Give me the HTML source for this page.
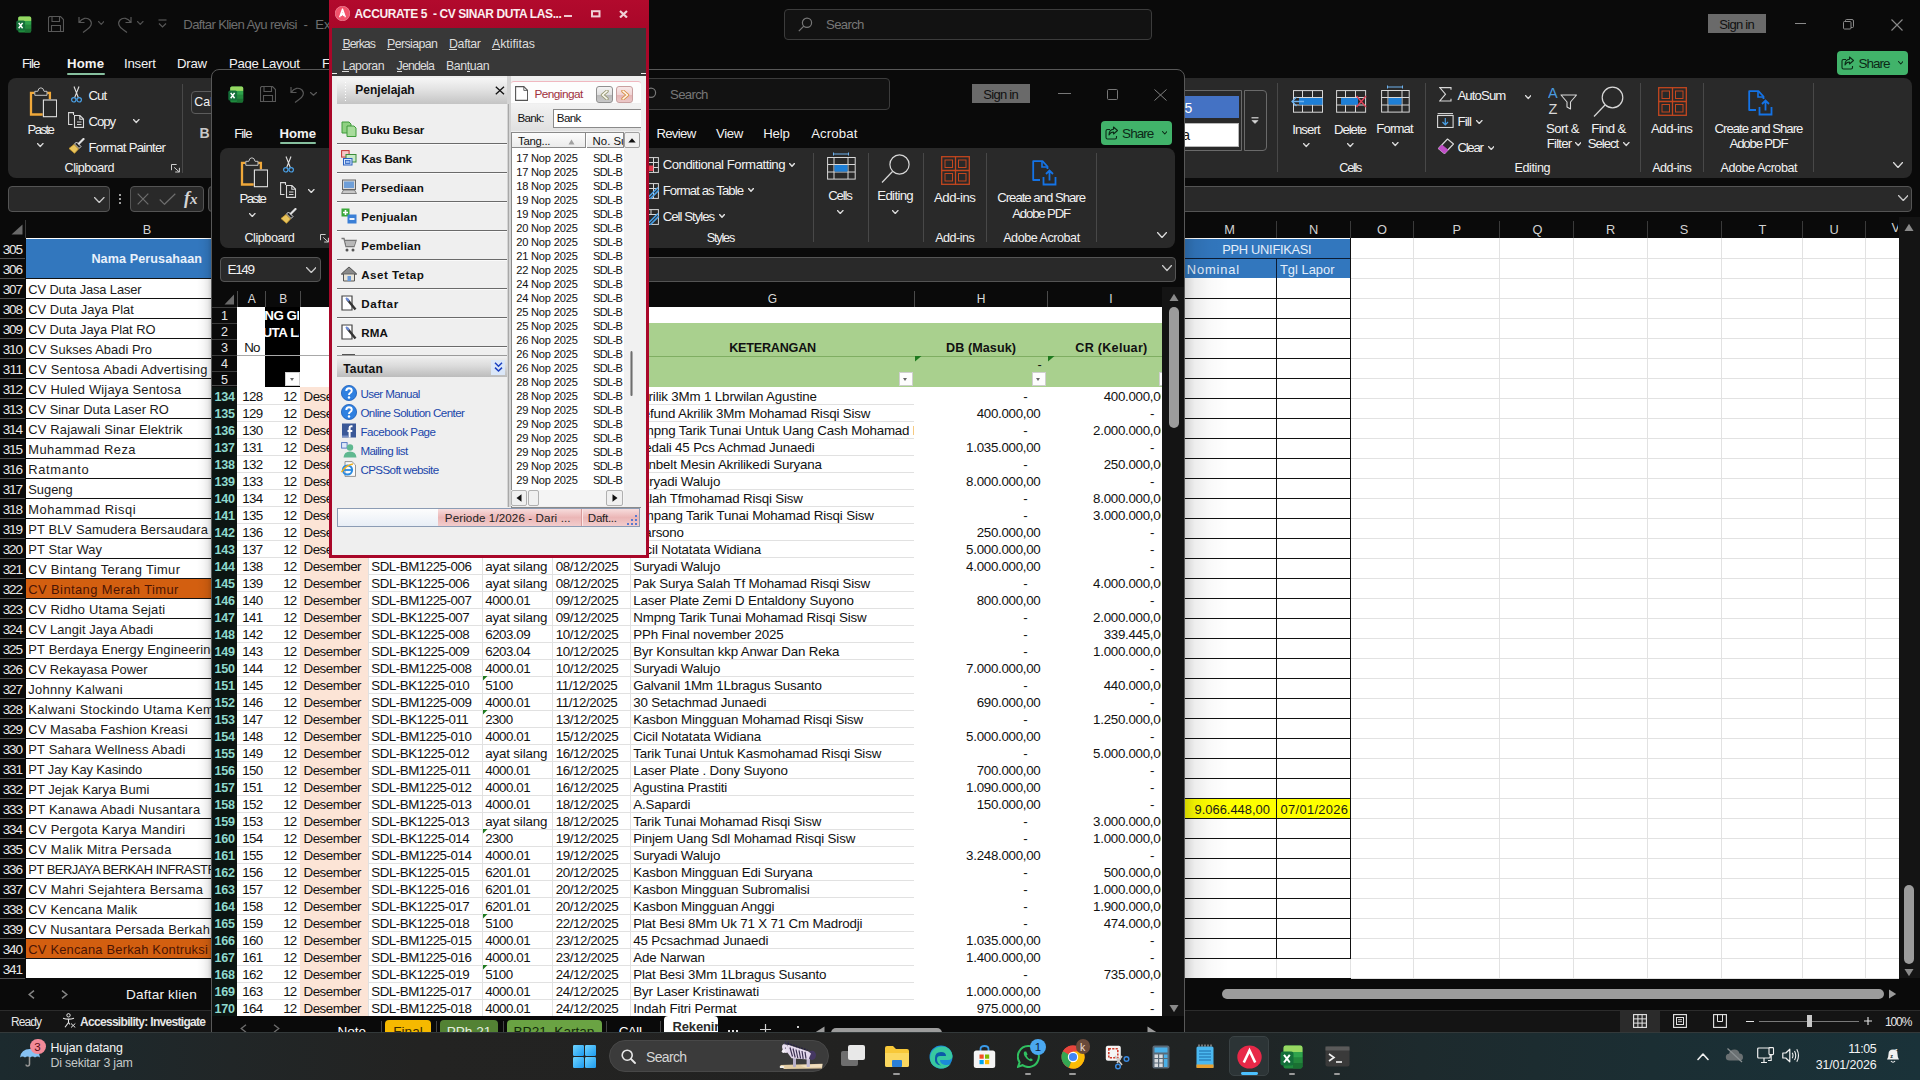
<!DOCTYPE html>
<html><head><meta charset="utf-8"><title>screen</title>
<style>
html,body{margin:0;padding:0;}
body{width:1920px;height:1080px;overflow:hidden;background:#0a0a0a;position:relative;font-family:"Liberation Sans",sans-serif;}
.r{position:absolute;display:block;}
.t{position:absolute;white-space:pre;font-family:"Liberation Sans",sans-serif;}
#xl2{position:absolute;left:211px;top:69px;width:972px;height:1000px;border:1px solid #585858;border-radius:8px 8px 0 0;background:#0a0a0a;overflow:hidden;}
#xl2 .in{position:absolute;left:-212px;top:-70px;width:1920px;height:1080px;}
</style></head><body>
<div id="xl1">
<svg class="r" style="left:16.00px;top:15.60px;" width="16" height="17" viewBox="0 0 16 17"><rect x="2.2" y="0.4" width="13" height="16.2" rx="1.6" fill="#1f8b3d"/><path d="M3.8 0.4 H13.6 Q15.2 0.4 15.2 2 V4.9 H2.2 V2 Q2.2 0.4 3.8 0.4 Z" fill="#97d862"/><rect x="8.8" y="4.9" width="6.4" height="3.9" fill="#2fa34c"/><rect x="8.8" y="8.8" width="6.4" height="3.9" fill="#23883c"/><path d="M8.8 12.7 H15.2 V15 Q15.2 16.6 13.6 16.6 H8.8 Z" fill="#1a7032"/><rect x="0.3" y="4.6" width="8.8" height="9.9" rx="1.6" fill="#14703a"/><path d="M2.7 6.9 L6.6 12.2 M6.6 6.9 L2.7 12.2" stroke="#fff" stroke-width="1.5"/></svg>
<svg class="r" style="left:48.00px;top:16.00px;" width="16" height="16" viewBox="0 0 16 16"><path d="M1.5 0.5 H12.5 L15.5 3.5 V15.5 H0.5 V1.5 Z M4 0.5 V5.5 H11.5 V0.5 M3.5 15.5 V9.5 H12.5 V15.5" fill="none" stroke="#585858" stroke-width="1.1"/></svg>
<svg class="r" style="left:78.00px;top:16.00px;" width="15" height="17" viewBox="0 0 15 17"><path d="M1 1 V6.5 H6.5 M1.2 6.3 C4 2 9 1 12 4 C15 7.5 12.5 11.5 9 13.5 L5 16.5" fill="none" stroke="#585858" stroke-width="1.2"/></svg>
<svg class="r" style="left:97.50px;top:21.30px;" width="6.5" height="4.3" viewBox="0 0 6.5 4.3"><path d="M0.5 0.5 L3.25 3.3 L6 0.5" fill="none" stroke="#505050" stroke-width="1.2" stroke-linecap="round" stroke-linejoin="round"/></svg>
<svg class="r" style="left:117.00px;top:16.00px;" width="15" height="17" viewBox="0 0 15 17"><path d="M14 1 V6.5 H8.5 M13.8 6.3 C11 2 6 1 3 4 C0 7.5 2.5 11.5 6 13.5 L10 16.5" fill="none" stroke="#585858" stroke-width="1.2"/></svg>
<svg class="r" style="left:137.00px;top:21.30px;" width="6.5" height="4.3" viewBox="0 0 6.5 4.3"><path d="M0.5 0.5 L3.25 3.3 L6 0.5" fill="none" stroke="#505050" stroke-width="1.2" stroke-linecap="round" stroke-linejoin="round"/></svg>
<svg class="r" style="left:158.00px;top:19.00px;" width="9" height="10" viewBox="0 0 9 10"><path d="M0.5 1 H8.5" stroke="#585858" stroke-width="1.2"/><path d="M1 4.5 L4.5 8 L8 4.5" fill="none" stroke="#585858" stroke-width="1.2"/></svg>
<div class="t" style="left:183.30px;top:15.62px;font-size:13.20px;line-height:17px;color:#6e6e6e;letter-spacing:-0.667px;">Daftar Klien Ayu revisi</div>
<div class="t" style="left:303.50px;top:15.62px;font-size:13.20px;line-height:17px;color:#6e6e6e;">-</div>
<div class="t" style="left:315.20px;top:15.62px;font-size:13.20px;line-height:17px;color:#6e6e6e;">Excel</div>
<div class="r" style="left:784.00px;top:8.50px;width:368.00px;height:31.00px;background:#121212;border:1px solid #3c3c3c;border-radius:4px;box-sizing:border-box;"></div>
<svg class="r" style="left:798.00px;top:16.50px;" width="15" height="15" viewBox="0 0 15 15"><circle cx="9" cy="5.8" r="4.6" fill="none" stroke="#777" stroke-width="1.2"/><path d="M5.8 9.2 L0.8 14.2" stroke="#777" stroke-width="1.2"/></svg>
<div class="t" style="left:826.00px;top:16.02px;font-size:13.20px;line-height:17px;color:#777;letter-spacing:-0.665px;">Search</div>
<div class="r" style="left:1708.00px;top:14.00px;width:58.00px;height:19.00px;background:#6a6a6a;"></div>
<div class="t" style="left:1719.25px;top:16.09px;font-size:13.00px;line-height:17px;color:#111;letter-spacing:-0.708px;">Sign in</div>
<div class="r" style="left:1795.00px;top:22.50px;width:10.50px;height:1.00px;background:#8a8a8a;"></div>
<svg class="r" style="left:1843.00px;top:18.50px;" width="11" height="11" viewBox="0 0 11 11"><rect x="0.5" y="2.5" width="7.5" height="7.5" rx="1" fill="none" stroke="#8a8a8a" stroke-width="1"/><path d="M2.5 2.5 V1.5 Q2.5 0.5 3.5 0.5 H9 Q10.5 0.5 10.5 2 V7.5 Q10.5 8.5 9.5 8.5 H8" fill="none" stroke="#8a8a8a" stroke-width="1"/></svg>
<svg class="r" style="left:1890.50px;top:18.50px;" width="12" height="12" viewBox="0 0 12 12"><path d="M0.5 0.5 L11.5 11.5 M11.5 0.5 L0.5 11.5" stroke="#8a8a8a" stroke-width="1.1"/></svg>
<div class="t" style="left:22.00px;top:54.62px;font-size:13.20px;line-height:17px;color:#f2f2f2;letter-spacing:-0.990px;">File</div>
<div class="t" style="left:67.00px;top:54.62px;font-size:13.20px;line-height:17px;color:#f2f2f2;font-weight:bold;letter-spacing:0.109px;">Home</div>
<div class="r" style="left:67.00px;top:72.60px;width:37.50px;height:2.20px;background:#86bf9e;border-radius:1px;"></div>
<div class="t" style="left:124.00px;top:54.62px;font-size:13.20px;line-height:17px;color:#f2f2f2;letter-spacing:-0.203px;">Insert</div>
<div class="t" style="left:177.00px;top:54.62px;font-size:13.20px;line-height:17px;color:#f2f2f2;letter-spacing:-0.268px;">Draw</div>
<div class="t" style="left:229.00px;top:54.62px;font-size:13.20px;line-height:17px;color:#f2f2f2;letter-spacing:-0.313px;">Page Layout</div>
<div class="t" style="left:322.00px;top:54.62px;font-size:13.20px;line-height:17px;color:#f2f2f2;">Formulas</div>
<div class="r" style="left:1837.00px;top:51.00px;width:71.00px;height:24.00px;background:#41b36a;border-radius:4px;"></div>
<svg class="r" style="left:1841.30px;top:56.00px;" width="14" height="14" viewBox="0 0 14 14"><path d="M5 3.5 H2.5 Q1 3.5 1 5 V11.5 Q1 13 2.5 13 H10 Q11.5 13 11.5 11.5 V10" fill="none" stroke="#0c2a17" stroke-width="1.1"/><path d="M8.5 1 L12.5 4.5 L8.5 8 V6 Q5.5 6 4 9 Q4 3.5 8.5 3.2 Z" fill="none" stroke="#0c2a17" stroke-width="1.1" stroke-linejoin="round"/></svg>
<div class="t" style="left:1858.40px;top:55.12px;font-size:13.50px;line-height:18px;color:#0c2a17;letter-spacing:-0.957px;">Share</div>
<svg class="r" style="left:1897.80px;top:61.00px;" width="5.5" height="4" viewBox="0 0 5.5 4"><path d="M0.5 0.5 L2.75 3 L5 0.5" fill="none" stroke="#0c2a17" stroke-width="1.1" stroke-linecap="round" stroke-linejoin="round"/></svg>
<div class="r" style="left:8.00px;top:78.00px;width:1904.00px;height:100.00px;background:#292929;border-radius:8px;"></div>
<svg class="r" style="left:29.00px;top:86.50px;" width="28" height="31" viewBox="0 0 28 31"><path d="M5.5 5.8 H2 V27.5 H13.7" fill="none" stroke="#f0a83a" stroke-width="2.3"/><path d="M18.2 5.8 H20.9 V12.3" fill="none" stroke="#f0a83a" stroke-width="2.3"/><path d="M5.8 8.3 V4.3 H8.8 Q9.3 0.8 11.9 0.8 Q14.5 0.8 15 4.3 H18 V8.3 Z" fill="#292929" stroke="#c4c4c4" stroke-width="1"/><rect x="14.4" y="13" width="13.2" height="16.7" fill="#292929" stroke="#e2e2e2" stroke-width="1.1"/></svg>
<div class="t" style="left:27.45px;top:120.52px;font-size:13.20px;line-height:17px;color:#f2f2f2;letter-spacing:-1.564px;">Paste</div>
<svg class="r" style="left:37.00px;top:143.00px;" width="6.5" height="4.5" viewBox="0 0 6.5 4.5"><path d="M0.5 0.5 L3.25 3.5 L6 0.5" fill="none" stroke="#d8d8d8" stroke-width="1.3" stroke-linecap="round" stroke-linejoin="round"/></svg>
<svg class="r" style="left:70.50px;top:86.00px;" width="11" height="17" viewBox="0 0 11 17"><path d="M3 0.5 L7.3 11.5 M8 0.5 L3.7 11.5" stroke="#e0e0e0" stroke-width="1.1" fill="none"/><circle cx="2.8" cy="13.8" r="2.2" fill="none" stroke="#4aa0e6" stroke-width="1.2"/><circle cx="8.2" cy="13.8" r="2.2" fill="none" stroke="#4aa0e6" stroke-width="1.2"/></svg>
<div class="t" style="left:88.50px;top:86.52px;font-size:13.20px;line-height:17px;color:#f2f2f2;letter-spacing:-0.971px;">Cut</div>
<svg class="r" style="left:68.00px;top:112.00px;" width="17" height="16" viewBox="0 0 17 16"><path d="M5.5 3 V0.6 H0.6 V12.5 H4.5" fill="none" stroke="#d8d8d8" stroke-width="1.1"/><path d="M6.5 3.5 H12 L15.5 7 V15.4 H6.5 Z M11.8 3.6 V7.2 H15.4" fill="none" stroke="#d8d8d8" stroke-width="1.1"/><path d="M9 10 H13.5 M9 12.5 H13.5" stroke="#d8d8d8" stroke-width="1"/></svg>
<div class="t" style="left:88.50px;top:112.52px;font-size:13.20px;line-height:17px;color:#f2f2f2;letter-spacing:-1.105px;">Copy</div>
<svg class="r" style="left:133.00px;top:119.00px;" width="6.5" height="4.5" viewBox="0 0 6.5 4.5"><path d="M0.5 0.5 L3.25 3.5 L6 0.5" fill="none" stroke="#d8d8d8" stroke-width="1.3" stroke-linecap="round" stroke-linejoin="round"/></svg>
<svg class="r" style="left:68.00px;top:138.00px;" width="17" height="16" viewBox="0 0 17 16"><path d="M11 5.5 L15.5 1" stroke="#e0e0e0" stroke-width="2.2" stroke-linecap="round"/><path d="M8.5 4 L13 8.5 L11 10.5 L6.5 6 Z" fill="none" stroke="#e0e0e0" stroke-width="1"/><path d="M6 6.5 L10.5 11 L6.5 15.3 L1 10.5 Z" fill="#e9c45c" stroke="#c89a30" stroke-width="0.8" stroke-linejoin="round"/></svg>
<div class="t" style="left:88.50px;top:138.72px;font-size:13.20px;line-height:17px;color:#f2f2f2;letter-spacing:-0.746px;">Format Painter</div>
<div class="t" style="left:64.60px;top:159.83px;font-size:12.60px;line-height:16px;color:#f2f2f2;letter-spacing:-0.492px;">Clipboard</div>
<svg class="r" style="left:170.50px;top:163.60px;" width="9" height="9" viewBox="0 0 9 9"><path d="M5.6 0.5 H0.5 V6.2 M3.2 3.4 L8.2 7.9 M4.2 8 H8.4 V3.8" fill="none" stroke="#d0d0d0" stroke-width="1"/></svg>
<div class="r" style="left:182.00px;top:83.50px;width:1.00px;height:89.00px;background:#484848;"></div>
<div class="r" style="left:191.00px;top:90.50px;width:60.00px;height:23.00px;background:#292929;border:1px solid #5c5c5c;border-radius:4px;box-sizing:border-box;"></div>
<div class="t" style="left:194.30px;top:94.10px;font-size:12.40px;line-height:16px;color:#f2f2f2;">Calibri</div>
<div class="t" style="left:199.50px;top:124.15px;font-size:14.00px;line-height:18px;color:#c8c8c8;font-weight:bold;">B</div>
<div class="r" style="left:1100.00px;top:90.00px;width:142.00px;height:61.00px;background:#292929;border:1px solid #6a6a6a;border-radius:4px 0 0 4px;box-sizing:border-box;"></div>
<div class="r" style="left:1130.00px;top:96.00px;width:109.00px;height:21.50px;background:#4472c4;"></div>
<div class="t" style="left:1184.60px;top:99.45px;font-size:14.00px;line-height:18px;color:#fff;">5</div>
<div class="r" style="left:1130.00px;top:122.50px;width:109.00px;height:24.00px;background:#ffffff;border:1px solid #b8b8b8;box-sizing:border-box;"></div>
<div class="t" style="left:1182.20px;top:126.45px;font-size:14.00px;line-height:18px;color:#111;">a</div>
<div class="r" style="left:1243.50px;top:90.00px;width:23.00px;height:61.00px;background:#292929;border:1px solid #6a6a6a;border-radius:0 4px 4px 0;box-sizing:border-box;"></div>
<svg class="r" style="left:1251.00px;top:116.50px;" width="8" height="8" viewBox="0 0 8 8"><path d="M0.5 0.8 H7.5" stroke="#d8d8d8" stroke-width="1.2"/><path d="M1 3.5 L4 6.5 L7 3.5 Z" fill="#d8d8d8" stroke="#d8d8d8" stroke-width="0.6"/></svg>
<div class="r" style="left:1277.20px;top:83.00px;width:1.00px;height:89.00px;background:#484848;"></div>
<svg class="r" style="left:1290.50px;top:89.50px;" width="33" height="23" viewBox="0 0 33 23"><rect x="2.5" y="0.6" width="29" height="21.6" fill="none" stroke="#d8d8d8" stroke-width="1"/><path d="M2.5 7.5 H31.5 M2.5 15 H31.5 M11.5 0.6 V22 M21.5 0.6 V22" stroke="#d8d8d8" stroke-width="1"/><rect x="8" y="8" width="23.5" height="6.8" fill="#1e7fd6"/><path d="M13 11.5 H1.5 M5.5 7 L1 11.5 L5.5 16" fill="none" stroke="#6fb2ee" stroke-width="1.3"/></svg>
<div class="t" style="left:1292.15px;top:120.72px;font-size:13.20px;line-height:17px;color:#f2f2f2;letter-spacing:-0.903px;">Insert</div>
<svg class="r" style="left:1303.00px;top:143.00px;" width="6.5" height="4.5" viewBox="0 0 6.5 4.5"><path d="M0.5 0.5 L3.25 3.5 L6 0.5" fill="none" stroke="#d8d8d8" stroke-width="1.3" stroke-linecap="round" stroke-linejoin="round"/></svg>
<svg class="r" style="left:1336.00px;top:89.50px;" width="31" height="23" viewBox="0 0 31 23"><rect x="0.6" y="0.6" width="29" height="21.6" fill="none" stroke="#d8d8d8" stroke-width="1"/><path d="M0.6 7.5 H29.5 M0.6 15 H29.5 M9.5 0.6 V22 M19.5 0.6 V22" stroke="#d8d8d8" stroke-width="1"/><rect x="5" y="8" width="17" height="6.8" fill="#1e7fd6"/><path d="M20.5 6 L30 17 M30 6 L20.5 17" stroke="#e0425a" stroke-width="1.4"/></svg>
<div class="t" style="left:1333.90px;top:120.72px;font-size:13.20px;line-height:17px;color:#f2f2f2;letter-spacing:-1.031px;">Delete</div>
<svg class="r" style="left:1347.00px;top:143.00px;" width="6.5" height="4.5" viewBox="0 0 6.5 4.5"><path d="M0.5 0.5 L3.25 3.5 L6 0.5" fill="none" stroke="#d8d8d8" stroke-width="1.3" stroke-linecap="round" stroke-linejoin="round"/></svg>
<svg class="r" style="left:1380.50px;top:84.50px;" width="29" height="28" viewBox="0 0 29 28"><path d="M6.5 0.5 V3.5 M21.5 0.5 V3.5 M6.5 2 H21.5" stroke="#6fb2ee" stroke-width="1"/><rect x="0.6" y="5.5" width="27.6" height="21.6" fill="none" stroke="#d8d8d8" stroke-width="1"/><path d="M0.6 12.5 H28 M0.6 20 H28 M7 5.5 V27 M21 5.5 V27" stroke="#d8d8d8" stroke-width="1"/><rect x="7.5" y="13" width="13" height="6.6" fill="#1e7fd6"/></svg>
<div class="t" style="left:1376.25px;top:120.22px;font-size:13.20px;line-height:17px;color:#f2f2f2;letter-spacing:-0.861px;">Format</div>
<svg class="r" style="left:1392.00px;top:142.00px;" width="6.5" height="4.5" viewBox="0 0 6.5 4.5"><path d="M0.5 0.5 L3.25 3.5 L6 0.5" fill="none" stroke="#d8d8d8" stroke-width="1.3" stroke-linecap="round" stroke-linejoin="round"/></svg>
<div class="t" style="left:1339.30px;top:160.43px;font-size:12.60px;line-height:16px;color:#f2f2f2;letter-spacing:-1.252px;">Cells</div>
<div class="r" style="left:1424.50px;top:83.00px;width:1.00px;height:89.00px;background:#484848;"></div>
<svg class="r" style="left:1438.50px;top:86.50px;" width="13" height="15" viewBox="0 0 13 15"><path d="M12 2.8 V0.6 H0.8 L6.5 7.2 L0.8 14 H12 V11.8" fill="none" stroke="#d8d8d8" stroke-width="1.1"/></svg>
<div class="t" style="left:1457.40px;top:87.02px;font-size:13.20px;line-height:17px;color:#f2f2f2;letter-spacing:-0.883px;">AutoSum</div>
<svg class="r" style="left:1524.50px;top:95.00px;" width="6.5" height="4.5" viewBox="0 0 6.5 4.5"><path d="M0.5 0.5 L3.25 3.5 L6 0.5" fill="none" stroke="#d8d8d8" stroke-width="1.3" stroke-linecap="round" stroke-linejoin="round"/></svg>
<svg class="r" style="left:1437.00px;top:112.50px;" width="17" height="15" viewBox="0 0 17 15"><rect x="0.6" y="2.5" width="15.5" height="12" fill="none" stroke="#d8d8d8" stroke-width="1.1"/><path d="M0.6 0.6 H16" stroke="#d8d8d8" stroke-width="1.1"/><path d="M8.3 5 V11.5 M5.5 9 L8.3 11.8 L11 9" fill="none" stroke="#4aa0e6" stroke-width="1.2"/></svg>
<div class="t" style="left:1457.40px;top:112.72px;font-size:13.20px;line-height:17px;color:#f2f2f2;letter-spacing:-0.787px;">Fill</div>
<svg class="r" style="left:1476.00px;top:119.50px;" width="6.5" height="4.5" viewBox="0 0 6.5 4.5"><path d="M0.5 0.5 L3.25 3.5 L6 0.5" fill="none" stroke="#d8d8d8" stroke-width="1.3" stroke-linecap="round" stroke-linejoin="round"/></svg>
<svg class="r" style="left:1436.50px;top:137.50px;" width="18" height="17" viewBox="0 0 18 17"><path d="M10.5 1 L16.5 6 L7.5 15.5 L1.5 10.5 Z" fill="none" stroke="#d8d8d8" stroke-width="1.1" stroke-linejoin="round"/><path d="M5 7 L11 12 L7.5 15.5 L1.5 10.5 Z" fill="#c04fc8" stroke="#c04fc8" stroke-width="0.8" stroke-linejoin="round"/></svg>
<div class="t" style="left:1457.40px;top:138.92px;font-size:13.20px;line-height:17px;color:#f2f2f2;letter-spacing:-1.261px;">Clear</div>
<svg class="r" style="left:1487.50px;top:145.50px;" width="6.5" height="4.5" viewBox="0 0 6.5 4.5"><path d="M0.5 0.5 L3.25 3.5 L6 0.5" fill="none" stroke="#d8d8d8" stroke-width="1.3" stroke-linecap="round" stroke-linejoin="round"/></svg>
<svg class="r" style="left:1548.00px;top:87.00px;" width="30" height="28" viewBox="0 0 30 28"><text x="0" y="10.5" font-family="Liberation Sans" font-size="14.5" fill="#4a9be0">A</text><text x="0.5" y="26.5" font-family="Liberation Sans" font-size="14.5" fill="#d8d8d8">Z</text><path d="M13 8 H28.5 L22.5 15 V22 L19 20 V15 Z" fill="none" stroke="#d8d8d8" stroke-width="1.1" stroke-linejoin="round"/></svg>
<div class="t" style="left:1546.05px;top:119.52px;font-size:13.20px;line-height:17px;color:#f2f2f2;letter-spacing:-0.636px;">Sort &amp;</div>
<div class="t" style="left:1546.75px;top:135.32px;font-size:13.20px;line-height:17px;color:#f2f2f2;letter-spacing:-0.767px;">Filter</div>
<svg class="r" style="left:1574.50px;top:142.00px;" width="6.5" height="4.5" viewBox="0 0 6.5 4.5"><path d="M0.5 0.5 L3.25 3.5 L6 0.5" fill="none" stroke="#d8d8d8" stroke-width="1.3" stroke-linecap="round" stroke-linejoin="round"/></svg>
<svg class="r" style="left:1593.00px;top:86.00px;" width="32" height="32" viewBox="0 0 32 32"><circle cx="19.5" cy="11.5" r="10.3" fill="none" stroke="#d8d8d8" stroke-width="1.2"/><path d="M12 19 L1 30.5" stroke="#d8d8d8" stroke-width="1.2"/></svg>
<div class="t" style="left:1591.30px;top:119.52px;font-size:13.20px;line-height:17px;color:#f2f2f2;letter-spacing:-0.630px;">Find &amp;</div>
<div class="t" style="left:1587.75px;top:135.32px;font-size:13.20px;line-height:17px;color:#f2f2f2;letter-spacing:-1.038px;">Select</div>
<svg class="r" style="left:1623.00px;top:142.00px;" width="6.5" height="4.5" viewBox="0 0 6.5 4.5"><path d="M0.5 0.5 L3.25 3.5 L6 0.5" fill="none" stroke="#d8d8d8" stroke-width="1.3" stroke-linecap="round" stroke-linejoin="round"/></svg>
<div class="t" style="left:1514.50px;top:160.43px;font-size:12.60px;line-height:16px;color:#f2f2f2;letter-spacing:-0.421px;">Editing</div>
<div class="r" style="left:1640.30px;top:83.00px;width:1.00px;height:89.00px;background:#484848;"></div>
<svg class="r" style="left:1657.50px;top:86.50px;" width="29" height="29" viewBox="0 0 29 29"><rect x="0.7" y="0.7" width="27.6" height="27.6" fill="none" stroke="#c4471f" stroke-width="1.3"/><path d="M14.5 0.7 V28.3 M0.7 14.5 H28.3" stroke="#c4471f" stroke-width="1.3"/><rect x="4" y="4" width="7.5" height="7.5" fill="none" stroke="#c4471f" stroke-width="1"/><rect x="17.5" y="4" width="7.5" height="7.5" fill="none" stroke="#c4471f" stroke-width="1"/><rect x="4" y="17.5" width="7.5" height="7.5" fill="none" stroke="#c4471f" stroke-width="1"/><rect x="17.5" y="17.5" width="7.5" height="7.5" fill="none" stroke="#c4471f" stroke-width="1"/></svg>
<div class="t" style="left:1651.00px;top:119.52px;font-size:13.20px;line-height:17px;color:#f2f2f2;letter-spacing:-0.460px;">Add-ins</div>
<div class="t" style="left:1652.25px;top:160.43px;font-size:12.60px;line-height:16px;color:#f2f2f2;letter-spacing:-0.537px;">Add-ins</div>
<div class="r" style="left:1702.80px;top:83.00px;width:1.00px;height:89.00px;background:#484848;"></div>
<svg class="r" style="left:1747.50px;top:89.50px;" width="25" height="26" viewBox="0 0 25 26"><path d="M8 20 H1.2 V1.2 H10.5 L15.5 6.5 V9" fill="none" stroke="#1473e6" stroke-width="1.8" stroke-linejoin="round"/><path d="M10 1.5 V7 H15.5" fill="none" stroke="#1473e6" stroke-width="1.6"/><path d="M11.5 17 V24.5 H23.5 V17" fill="none" stroke="#1473e6" stroke-width="1.8"/><path d="M17.5 20.5 V11 M14 14 L17.5 10.5 L21 14" fill="none" stroke="#1473e6" stroke-width="1.8"/></svg>
<div class="t" style="left:1714.50px;top:119.52px;font-size:13.20px;line-height:17px;color:#f2f2f2;letter-spacing:-1.014px;">Create and Share</div>
<div class="t" style="left:1729.50px;top:135.32px;font-size:13.20px;line-height:17px;color:#f2f2f2;letter-spacing:-1.155px;">Adobe PDF</div>
<div class="t" style="left:1720.50px;top:160.43px;font-size:12.60px;line-height:16px;color:#f2f2f2;letter-spacing:-0.472px;">Adobe Acrobat</div>
<div class="r" style="left:1813.20px;top:83.00px;width:1.00px;height:89.00px;background:#484848;"></div>
<svg class="r" style="left:1892.50px;top:161.50px;" width="10" height="6.5" viewBox="0 0 10 6.5"><path d="M0.5 0.5 L5 5.5 L9.5 0.5" fill="none" stroke="#d8d8d8" stroke-width="1.3" stroke-linecap="round" stroke-linejoin="round"/></svg>
<div class="r" style="left:8.00px;top:186.30px;width:102.00px;height:25.60px;background:#292929;border:1px solid #545454;border-radius:4px;box-sizing:border-box;"></div>
<svg class="r" style="left:94.00px;top:196.50px;" width="10.5" height="6.5" viewBox="0 0 10.5 6.5"><path d="M0.5 0.5 L5.25 5.5 L10 0.5" fill="none" stroke="#c8c8c8" stroke-width="1.3" stroke-linecap="round" stroke-linejoin="round"/></svg>
<div class="r" style="left:119.20px;top:194.00px;width:1.80px;height:1.80px;background:#d0d0d0;border-radius:1px;"></div>
<div class="r" style="left:119.20px;top:198.00px;width:1.80px;height:1.80px;background:#d0d0d0;border-radius:1px;"></div>
<div class="r" style="left:119.20px;top:202.00px;width:1.80px;height:1.80px;background:#d0d0d0;border-radius:1px;"></div>
<div class="r" style="left:130.00px;top:186.30px;width:74.00px;height:25.60px;background:#292929;border:1px solid #545454;border-radius:4px;box-sizing:border-box;"></div>
<svg class="r" style="left:137.00px;top:193.00px;" width="12" height="12" viewBox="0 0 12 12"><path d="M0.7 0.7 L11.3 11.3 M11.3 0.7 L0.7 11.3" stroke="#6e6e6e" stroke-width="1.2"/></svg>
<svg class="r" style="left:158.50px;top:193.00px;" width="17" height="12" viewBox="0 0 17 12"><path d="M0.7 6.5 L5.5 11.3 L16.3 0.7" fill="none" stroke="#6e6e6e" stroke-width="1.2"/></svg>
<div class="t" style="left:184px;top:187.5px;font-family:'Liberation Serif',serif;font-style:italic;font-weight:bold;font-size:18px;line-height:20px;color:#d4d4d4;">f<span style="font-size:15px">x</span></div>
<div class="r" style="left:208.00px;top:186.30px;width:1704.00px;height:25.60px;background:#292929;border:1px solid #545454;border-radius:4px;box-sizing:border-box;"></div>
<svg class="r" style="left:1897.50px;top:194.50px;" width="10.5" height="6.5" viewBox="0 0 10.5 6.5"><path d="M0.5 0.5 L5.25 5.5 L10 0.5" fill="none" stroke="#c8c8c8" stroke-width="1.3" stroke-linecap="round" stroke-linejoin="round"/></svg>
<svg class="r" style="left:10.50px;top:223.50px;" width="12" height="11" viewBox="0 0 12 11"><path d="M11.5 0.5 V10.5 H0.5 Z" fill="#6a6a6a"/></svg>
<div class="r" style="left:25.00px;top:220.00px;width:1.00px;height:18.00px;background:#3a3a3a;"></div>
<div class="t" style="left:142.73px;top:221.46px;font-size:12.80px;line-height:17px;color:#d2d2d2;">B</div>
<div class="t" style="left:1224.17px;top:221.46px;font-size:12.80px;line-height:17px;color:#d2d2d2;">M</div>
<div class="t" style="left:1309.08px;top:221.46px;font-size:12.80px;line-height:17px;color:#d2d2d2;">N</div>
<div class="t" style="left:1377.02px;top:221.46px;font-size:12.80px;line-height:17px;color:#d2d2d2;">O</div>
<div class="t" style="left:1452.53px;top:221.46px;font-size:12.80px;line-height:17px;color:#d2d2d2;">P</div>
<div class="t" style="left:1532.42px;top:221.46px;font-size:12.80px;line-height:17px;color:#d2d2d2;">Q</div>
<div class="t" style="left:1606.08px;top:221.46px;font-size:12.80px;line-height:17px;color:#d2d2d2;">R</div>
<div class="t" style="left:1679.73px;top:221.46px;font-size:12.80px;line-height:17px;color:#d2d2d2;">S</div>
<div class="t" style="left:1758.39px;top:221.46px;font-size:12.80px;line-height:17px;color:#d2d2d2;">T</div>
<div class="t" style="left:1829.38px;top:221.46px;font-size:12.80px;line-height:17px;color:#d2d2d2;">U</div>
<div class="r" style="left:1890px;top:219px;width:8px;height:19px;overflow:hidden"><div class="t" style="left:1.5px;top:0px;font-size:12.8px;line-height:17px;color:#d2d2d2">V</div></div>
<div class="r" style="left:1276.00px;top:221.00px;width:1.00px;height:17.00px;background:#3a3a3a;"></div>
<div class="r" style="left:1350.00px;top:221.00px;width:1.00px;height:17.00px;background:#3a3a3a;"></div>
<div class="r" style="left:1413.00px;top:221.00px;width:1.00px;height:17.00px;background:#3a3a3a;"></div>
<div class="r" style="left:1498.90px;top:221.00px;width:1.00px;height:17.00px;background:#3a3a3a;"></div>
<div class="r" style="left:1572.90px;top:221.00px;width:1.00px;height:17.00px;background:#3a3a3a;"></div>
<div class="r" style="left:1646.90px;top:221.00px;width:1.00px;height:17.00px;background:#3a3a3a;"></div>
<div class="r" style="left:1720.90px;top:221.00px;width:1.00px;height:17.00px;background:#3a3a3a;"></div>
<div class="r" style="left:1801.90px;top:221.00px;width:1.00px;height:17.00px;background:#3a3a3a;"></div>
<div class="r" style="left:1865.20px;top:221.00px;width:1.00px;height:17.00px;background:#3a3a3a;"></div>
<div class="r" style="left:25.50px;top:238.00px;width:1873.00px;height:740.00px;background:#ffffff;"></div>
<div class="r" style="left:1351.00px;top:257.50px;width:547.50px;height:1.00px;background:#e2e2e2;"></div>
<div class="r" style="left:1351.00px;top:277.50px;width:547.50px;height:1.00px;background:#e2e2e2;"></div>
<div class="r" style="left:1351.00px;top:297.50px;width:547.50px;height:1.00px;background:#e2e2e2;"></div>
<div class="r" style="left:1351.00px;top:317.50px;width:547.50px;height:1.00px;background:#e2e2e2;"></div>
<div class="r" style="left:1351.00px;top:337.50px;width:547.50px;height:1.00px;background:#e2e2e2;"></div>
<div class="r" style="left:1351.00px;top:357.50px;width:547.50px;height:1.00px;background:#e2e2e2;"></div>
<div class="r" style="left:1351.00px;top:377.50px;width:547.50px;height:1.00px;background:#e2e2e2;"></div>
<div class="r" style="left:1351.00px;top:397.50px;width:547.50px;height:1.00px;background:#e2e2e2;"></div>
<div class="r" style="left:1351.00px;top:417.50px;width:547.50px;height:1.00px;background:#e2e2e2;"></div>
<div class="r" style="left:1351.00px;top:437.50px;width:547.50px;height:1.00px;background:#e2e2e2;"></div>
<div class="r" style="left:1351.00px;top:457.50px;width:547.50px;height:1.00px;background:#e2e2e2;"></div>
<div class="r" style="left:1351.00px;top:477.50px;width:547.50px;height:1.00px;background:#e2e2e2;"></div>
<div class="r" style="left:1351.00px;top:497.50px;width:547.50px;height:1.00px;background:#e2e2e2;"></div>
<div class="r" style="left:1351.00px;top:517.50px;width:547.50px;height:1.00px;background:#e2e2e2;"></div>
<div class="r" style="left:1351.00px;top:537.50px;width:547.50px;height:1.00px;background:#e2e2e2;"></div>
<div class="r" style="left:1351.00px;top:557.50px;width:547.50px;height:1.00px;background:#e2e2e2;"></div>
<div class="r" style="left:1351.00px;top:577.50px;width:547.50px;height:1.00px;background:#e2e2e2;"></div>
<div class="r" style="left:1351.00px;top:597.50px;width:547.50px;height:1.00px;background:#e2e2e2;"></div>
<div class="r" style="left:1351.00px;top:617.50px;width:547.50px;height:1.00px;background:#e2e2e2;"></div>
<div class="r" style="left:1351.00px;top:637.50px;width:547.50px;height:1.00px;background:#e2e2e2;"></div>
<div class="r" style="left:1351.00px;top:657.50px;width:547.50px;height:1.00px;background:#e2e2e2;"></div>
<div class="r" style="left:1351.00px;top:677.50px;width:547.50px;height:1.00px;background:#e2e2e2;"></div>
<div class="r" style="left:1351.00px;top:697.50px;width:547.50px;height:1.00px;background:#e2e2e2;"></div>
<div class="r" style="left:1351.00px;top:717.50px;width:547.50px;height:1.00px;background:#e2e2e2;"></div>
<div class="r" style="left:1351.00px;top:737.50px;width:547.50px;height:1.00px;background:#e2e2e2;"></div>
<div class="r" style="left:1351.00px;top:757.50px;width:547.50px;height:1.00px;background:#e2e2e2;"></div>
<div class="r" style="left:1351.00px;top:777.50px;width:547.50px;height:1.00px;background:#e2e2e2;"></div>
<div class="r" style="left:1351.00px;top:797.50px;width:547.50px;height:1.00px;background:#e2e2e2;"></div>
<div class="r" style="left:1351.00px;top:817.50px;width:547.50px;height:1.00px;background:#e2e2e2;"></div>
<div class="r" style="left:1351.00px;top:837.50px;width:547.50px;height:1.00px;background:#e2e2e2;"></div>
<div class="r" style="left:1351.00px;top:857.50px;width:547.50px;height:1.00px;background:#e2e2e2;"></div>
<div class="r" style="left:1351.00px;top:877.50px;width:547.50px;height:1.00px;background:#e2e2e2;"></div>
<div class="r" style="left:1351.00px;top:897.50px;width:547.50px;height:1.00px;background:#e2e2e2;"></div>
<div class="r" style="left:1351.00px;top:917.50px;width:547.50px;height:1.00px;background:#e2e2e2;"></div>
<div class="r" style="left:1351.00px;top:937.50px;width:547.50px;height:1.00px;background:#e2e2e2;"></div>
<div class="r" style="left:1351.00px;top:957.50px;width:547.50px;height:1.00px;background:#e2e2e2;"></div>
<div class="r" style="left:1351.00px;top:977.50px;width:547.50px;height:1.00px;background:#e2e2e2;"></div>
<div class="r" style="left:1413.00px;top:238.00px;width:1.00px;height:740.00px;background:#e2e2e2;"></div>
<div class="r" style="left:1498.90px;top:238.00px;width:1.00px;height:740.00px;background:#e2e2e2;"></div>
<div class="r" style="left:1572.90px;top:238.00px;width:1.00px;height:740.00px;background:#e2e2e2;"></div>
<div class="r" style="left:1646.90px;top:238.00px;width:1.00px;height:740.00px;background:#e2e2e2;"></div>
<div class="r" style="left:1720.90px;top:238.00px;width:1.00px;height:740.00px;background:#e2e2e2;"></div>
<div class="r" style="left:1801.90px;top:238.00px;width:1.00px;height:740.00px;background:#e2e2e2;"></div>
<div class="r" style="left:1865.20px;top:238.00px;width:1.00px;height:740.00px;background:#e2e2e2;"></div>
<div class="r" style="left:1350.00px;top:958.00px;width:1.00px;height:20.00px;background:#e2e2e2;"></div>
<div class="r" style="left:1276.00px;top:959.00px;width:1.00px;height:19.00px;background:#e2e2e2;"></div>
<div class="t" style="left:2.80px;top:241.08px;font-size:13.60px;line-height:18px;color:#e8e8e8;letter-spacing:-1.246px;">305</div>
<div class="r" style="left:0.00px;top:257.80px;width:25.00px;height:1.00px;background:#4e4e4e;"></div>
<div class="t" style="left:2.80px;top:261.08px;font-size:13.60px;line-height:18px;color:#e8e8e8;letter-spacing:-1.246px;">306</div>
<div class="r" style="left:0.00px;top:277.80px;width:25.00px;height:1.00px;background:#4e4e4e;"></div>
<div class="t" style="left:2.80px;top:281.08px;font-size:13.60px;line-height:18px;color:#e8e8e8;letter-spacing:-1.246px;">307</div>
<div class="r" style="left:0.00px;top:297.80px;width:25.00px;height:1.00px;background:#4e4e4e;"></div>
<div class="t" style="left:2.80px;top:301.08px;font-size:13.60px;line-height:18px;color:#e8e8e8;letter-spacing:-1.246px;">308</div>
<div class="r" style="left:0.00px;top:317.80px;width:25.00px;height:1.00px;background:#4e4e4e;"></div>
<div class="t" style="left:2.80px;top:321.08px;font-size:13.60px;line-height:18px;color:#e8e8e8;letter-spacing:-1.246px;">309</div>
<div class="r" style="left:0.00px;top:337.80px;width:25.00px;height:1.00px;background:#4e4e4e;"></div>
<div class="t" style="left:2.80px;top:341.08px;font-size:13.60px;line-height:18px;color:#e8e8e8;letter-spacing:-1.246px;">310</div>
<div class="r" style="left:0.00px;top:357.80px;width:25.00px;height:1.00px;background:#4e4e4e;"></div>
<div class="t" style="left:2.80px;top:361.08px;font-size:13.60px;line-height:18px;color:#e8e8e8;letter-spacing:-0.741px;">311</div>
<div class="r" style="left:0.00px;top:377.80px;width:25.00px;height:1.00px;background:#4e4e4e;"></div>
<div class="t" style="left:2.80px;top:381.08px;font-size:13.60px;line-height:18px;color:#e8e8e8;letter-spacing:-1.246px;">312</div>
<div class="r" style="left:0.00px;top:397.80px;width:25.00px;height:1.00px;background:#4e4e4e;"></div>
<div class="t" style="left:2.80px;top:401.08px;font-size:13.60px;line-height:18px;color:#e8e8e8;letter-spacing:-1.246px;">313</div>
<div class="r" style="left:0.00px;top:417.80px;width:25.00px;height:1.00px;background:#4e4e4e;"></div>
<div class="t" style="left:2.80px;top:421.08px;font-size:13.60px;line-height:18px;color:#e8e8e8;letter-spacing:-1.246px;">314</div>
<div class="r" style="left:0.00px;top:437.80px;width:25.00px;height:1.00px;background:#4e4e4e;"></div>
<div class="t" style="left:2.80px;top:441.08px;font-size:13.60px;line-height:18px;color:#e8e8e8;letter-spacing:-1.246px;">315</div>
<div class="r" style="left:0.00px;top:457.80px;width:25.00px;height:1.00px;background:#4e4e4e;"></div>
<div class="t" style="left:2.80px;top:461.08px;font-size:13.60px;line-height:18px;color:#e8e8e8;letter-spacing:-1.246px;">316</div>
<div class="r" style="left:0.00px;top:477.80px;width:25.00px;height:1.00px;background:#4e4e4e;"></div>
<div class="t" style="left:2.80px;top:481.08px;font-size:13.60px;line-height:18px;color:#e8e8e8;letter-spacing:-1.246px;">317</div>
<div class="r" style="left:0.00px;top:497.80px;width:25.00px;height:1.00px;background:#4e4e4e;"></div>
<div class="t" style="left:2.80px;top:501.08px;font-size:13.60px;line-height:18px;color:#e8e8e8;letter-spacing:-1.246px;">318</div>
<div class="r" style="left:0.00px;top:517.80px;width:25.00px;height:1.00px;background:#4e4e4e;"></div>
<div class="t" style="left:2.80px;top:521.08px;font-size:13.60px;line-height:18px;color:#e8e8e8;letter-spacing:-1.246px;">319</div>
<div class="r" style="left:0.00px;top:537.80px;width:25.00px;height:1.00px;background:#4e4e4e;"></div>
<div class="t" style="left:2.80px;top:541.08px;font-size:13.60px;line-height:18px;color:#e8e8e8;letter-spacing:-1.246px;">320</div>
<div class="r" style="left:0.00px;top:557.80px;width:25.00px;height:1.00px;background:#4e4e4e;"></div>
<div class="t" style="left:2.80px;top:561.08px;font-size:13.60px;line-height:18px;color:#e8e8e8;letter-spacing:-1.246px;">321</div>
<div class="r" style="left:0.00px;top:577.80px;width:25.00px;height:1.00px;background:#4e4e4e;"></div>
<div class="t" style="left:2.80px;top:581.08px;font-size:13.60px;line-height:18px;color:#e8e8e8;letter-spacing:-1.246px;">322</div>
<div class="r" style="left:0.00px;top:597.80px;width:25.00px;height:1.00px;background:#4e4e4e;"></div>
<div class="t" style="left:2.80px;top:601.08px;font-size:13.60px;line-height:18px;color:#e8e8e8;letter-spacing:-1.246px;">323</div>
<div class="r" style="left:0.00px;top:617.80px;width:25.00px;height:1.00px;background:#4e4e4e;"></div>
<div class="t" style="left:2.80px;top:621.08px;font-size:13.60px;line-height:18px;color:#e8e8e8;letter-spacing:-1.246px;">324</div>
<div class="r" style="left:0.00px;top:637.80px;width:25.00px;height:1.00px;background:#4e4e4e;"></div>
<div class="t" style="left:2.80px;top:641.08px;font-size:13.60px;line-height:18px;color:#e8e8e8;letter-spacing:-1.246px;">325</div>
<div class="r" style="left:0.00px;top:657.80px;width:25.00px;height:1.00px;background:#4e4e4e;"></div>
<div class="t" style="left:2.80px;top:661.08px;font-size:13.60px;line-height:18px;color:#e8e8e8;letter-spacing:-1.246px;">326</div>
<div class="r" style="left:0.00px;top:677.80px;width:25.00px;height:1.00px;background:#4e4e4e;"></div>
<div class="t" style="left:2.80px;top:681.08px;font-size:13.60px;line-height:18px;color:#e8e8e8;letter-spacing:-1.246px;">327</div>
<div class="r" style="left:0.00px;top:697.80px;width:25.00px;height:1.00px;background:#4e4e4e;"></div>
<div class="t" style="left:2.80px;top:701.08px;font-size:13.60px;line-height:18px;color:#e8e8e8;letter-spacing:-1.246px;">328</div>
<div class="r" style="left:0.00px;top:717.80px;width:25.00px;height:1.00px;background:#4e4e4e;"></div>
<div class="t" style="left:2.80px;top:721.08px;font-size:13.60px;line-height:18px;color:#e8e8e8;letter-spacing:-1.246px;">329</div>
<div class="r" style="left:0.00px;top:737.80px;width:25.00px;height:1.00px;background:#4e4e4e;"></div>
<div class="t" style="left:2.80px;top:741.08px;font-size:13.60px;line-height:18px;color:#e8e8e8;letter-spacing:-1.246px;">330</div>
<div class="r" style="left:0.00px;top:757.80px;width:25.00px;height:1.00px;background:#4e4e4e;"></div>
<div class="t" style="left:2.80px;top:761.08px;font-size:13.60px;line-height:18px;color:#e8e8e8;letter-spacing:-1.246px;">331</div>
<div class="r" style="left:0.00px;top:777.80px;width:25.00px;height:1.00px;background:#4e4e4e;"></div>
<div class="t" style="left:2.80px;top:781.08px;font-size:13.60px;line-height:18px;color:#e8e8e8;letter-spacing:-1.246px;">332</div>
<div class="r" style="left:0.00px;top:797.80px;width:25.00px;height:1.00px;background:#4e4e4e;"></div>
<div class="t" style="left:2.80px;top:801.08px;font-size:13.60px;line-height:18px;color:#e8e8e8;letter-spacing:-1.246px;">333</div>
<div class="r" style="left:0.00px;top:817.80px;width:25.00px;height:1.00px;background:#4e4e4e;"></div>
<div class="t" style="left:2.80px;top:821.08px;font-size:13.60px;line-height:18px;color:#e8e8e8;letter-spacing:-1.246px;">334</div>
<div class="r" style="left:0.00px;top:837.80px;width:25.00px;height:1.00px;background:#4e4e4e;"></div>
<div class="t" style="left:2.80px;top:841.08px;font-size:13.60px;line-height:18px;color:#e8e8e8;letter-spacing:-1.246px;">335</div>
<div class="r" style="left:0.00px;top:857.80px;width:25.00px;height:1.00px;background:#4e4e4e;"></div>
<div class="t" style="left:2.80px;top:861.08px;font-size:13.60px;line-height:18px;color:#e8e8e8;letter-spacing:-1.246px;">336</div>
<div class="r" style="left:0.00px;top:877.80px;width:25.00px;height:1.00px;background:#4e4e4e;"></div>
<div class="t" style="left:2.80px;top:881.08px;font-size:13.60px;line-height:18px;color:#e8e8e8;letter-spacing:-1.246px;">337</div>
<div class="r" style="left:0.00px;top:897.80px;width:25.00px;height:1.00px;background:#4e4e4e;"></div>
<div class="t" style="left:2.80px;top:901.08px;font-size:13.60px;line-height:18px;color:#e8e8e8;letter-spacing:-1.246px;">338</div>
<div class="r" style="left:0.00px;top:917.80px;width:25.00px;height:1.00px;background:#4e4e4e;"></div>
<div class="t" style="left:2.80px;top:921.08px;font-size:13.60px;line-height:18px;color:#e8e8e8;letter-spacing:-1.246px;">339</div>
<div class="r" style="left:0.00px;top:937.80px;width:25.00px;height:1.00px;background:#4e4e4e;"></div>
<div class="t" style="left:2.80px;top:941.08px;font-size:13.60px;line-height:18px;color:#e8e8e8;letter-spacing:-1.246px;">340</div>
<div class="r" style="left:0.00px;top:957.80px;width:25.00px;height:1.00px;background:#4e4e4e;"></div>
<div class="t" style="left:2.80px;top:961.08px;font-size:13.60px;line-height:18px;color:#e8e8e8;letter-spacing:-1.246px;">341</div>
<div class="r" style="left:0.00px;top:977.80px;width:25.00px;height:1.00px;background:#4e4e4e;"></div>
<div class="r" style="left:25.50px;top:238.50px;width:1159.50px;height:39.50px;background:#3277be;"></div>
<div class="t" style="left:91.40px;top:250.53px;font-size:12.60px;line-height:16px;color:#e9f1fb;font-weight:bold;letter-spacing:0.096px;">Nama Perusahaan</div>
<div class="r" style="left:25.50px;top:277.80px;width:1159.50px;height:1.20px;background:#111;"></div>
<div class="r" style="left:1184.00px;top:238.50px;width:166.50px;height:39.50px;background:#3277be;"></div>
<div class="t" style="left:1222.25px;top:240.93px;font-size:12.90px;line-height:17px;color:#e4eefa;letter-spacing:-0.307px;">PPH UNIFIKASI</div>
<div class="t" style="left:1186.80px;top:260.53px;font-size:12.90px;line-height:17px;color:#e4eefa;letter-spacing:0.830px;">Nominal</div>
<div class="t" style="left:1280.00px;top:260.53px;font-size:12.90px;line-height:17px;color:#e4eefa;">Tgl Lapor</div>
<div class="r" style="left:1184.00px;top:257.80px;width:166.50px;height:1.00px;background:#0c1c33;"></div>
<div class="r" style="left:1276.00px;top:258.00px;width:1.20px;height:20.00px;background:#0c1c33;"></div>
<div class="t" style="left:28.30px;top:280.73px;font-size:12.90px;line-height:17px;color:#1a1a1a;letter-spacing:-0.119px;">CV Duta Jasa Laser</div>
<div class="r" style="left:25.50px;top:297.80px;width:1159.50px;height:1.20px;background:#111;"></div>
<div class="t" style="left:28.30px;top:300.73px;font-size:12.90px;line-height:17px;color:#1a1a1a;letter-spacing:0.017px;">CV Duta Jaya Plat</div>
<div class="r" style="left:25.50px;top:317.80px;width:1159.50px;height:1.20px;background:#111;"></div>
<div class="t" style="left:28.30px;top:320.73px;font-size:12.90px;line-height:17px;color:#1a1a1a;letter-spacing:-0.059px;">CV Duta Jaya Plat RO</div>
<div class="r" style="left:25.50px;top:337.80px;width:1159.50px;height:1.20px;background:#111;"></div>
<div class="t" style="left:28.30px;top:340.73px;font-size:12.90px;line-height:17px;color:#1a1a1a;letter-spacing:0.026px;">CV Sukses Abadi Pro</div>
<div class="r" style="left:25.50px;top:357.80px;width:1159.50px;height:1.20px;background:#111;"></div>
<div class="t" style="left:28.30px;top:360.73px;font-size:12.90px;line-height:17px;color:#1a1a1a;letter-spacing:0.291px;">CV Sentosa Abadi Advertising</div>
<div class="r" style="left:25.50px;top:377.80px;width:1159.50px;height:1.20px;background:#111;"></div>
<div class="t" style="left:28.30px;top:380.73px;font-size:12.90px;line-height:17px;color:#1a1a1a;letter-spacing:0.204px;">CV Huled Wijaya Sentosa</div>
<div class="r" style="left:25.50px;top:397.80px;width:1159.50px;height:1.20px;background:#111;"></div>
<div class="t" style="left:28.30px;top:400.73px;font-size:12.90px;line-height:17px;color:#1a1a1a;letter-spacing:-0.032px;">CV Sinar Duta Laser RO</div>
<div class="r" style="left:25.50px;top:417.80px;width:1159.50px;height:1.20px;background:#111;"></div>
<div class="t" style="left:28.30px;top:420.73px;font-size:12.90px;line-height:17px;color:#1a1a1a;letter-spacing:0.176px;">CV Rajawali Sinar Elektrik</div>
<div class="r" style="left:25.50px;top:437.80px;width:1159.50px;height:1.20px;background:#111;"></div>
<div class="t" style="left:28.30px;top:440.73px;font-size:12.90px;line-height:17px;color:#1a1a1a;letter-spacing:0.453px;">Muhammad Reza</div>
<div class="r" style="left:25.50px;top:457.80px;width:1159.50px;height:1.20px;background:#111;"></div>
<div class="t" style="left:28.30px;top:460.73px;font-size:12.90px;line-height:17px;color:#1a1a1a;letter-spacing:0.657px;">Ratmanto</div>
<div class="r" style="left:25.50px;top:477.80px;width:1159.50px;height:1.20px;background:#111;"></div>
<div class="t" style="left:28.30px;top:480.73px;font-size:12.90px;line-height:17px;color:#1a1a1a;letter-spacing:-0.020px;">Sugeng</div>
<div class="r" style="left:25.50px;top:497.80px;width:1159.50px;height:1.20px;background:#111;"></div>
<div class="t" style="left:28.30px;top:500.73px;font-size:12.90px;line-height:17px;color:#1a1a1a;letter-spacing:0.534px;">Mohammad Risqi</div>
<div class="r" style="left:25.50px;top:517.80px;width:1159.50px;height:1.20px;background:#111;"></div>
<div class="t" style="left:28.30px;top:520.73px;font-size:12.90px;line-height:17px;color:#1a1a1a;letter-spacing:0.124px;">PT BLV Samudera Bersaudara</div>
<div class="r" style="left:25.50px;top:537.80px;width:1159.50px;height:1.20px;background:#111;"></div>
<div class="t" style="left:28.30px;top:540.73px;font-size:12.90px;line-height:17px;color:#1a1a1a;letter-spacing:0.134px;">PT Star Way</div>
<div class="r" style="left:25.50px;top:557.80px;width:1159.50px;height:1.20px;background:#111;"></div>
<div class="t" style="left:28.30px;top:560.73px;font-size:12.90px;line-height:17px;color:#1a1a1a;letter-spacing:0.357px;">CV Bintang Terang Timur</div>
<div class="r" style="left:25.50px;top:577.80px;width:1159.50px;height:1.20px;background:#111;"></div>
<div class="r" style="left:25.50px;top:579.00px;width:1159.50px;height:19.00px;background:#d35f10;"></div>
<div class="t" style="left:28.30px;top:580.73px;font-size:12.90px;line-height:17px;color:#4a1404;letter-spacing:0.426px;">CV Bintang Merah Timur</div>
<div class="r" style="left:25.50px;top:597.80px;width:1159.50px;height:1.20px;background:#111;"></div>
<div class="t" style="left:28.30px;top:600.73px;font-size:12.90px;line-height:17px;color:#1a1a1a;letter-spacing:0.215px;">CV Ridho Utama Sejati</div>
<div class="r" style="left:25.50px;top:617.80px;width:1159.50px;height:1.20px;background:#111;"></div>
<div class="t" style="left:28.30px;top:620.73px;font-size:12.90px;line-height:17px;color:#1a1a1a;letter-spacing:0.085px;">CV Langit Jaya Abadi</div>
<div class="r" style="left:25.50px;top:637.80px;width:1159.50px;height:1.20px;background:#111;"></div>
<div class="t" style="left:28.30px;top:640.73px;font-size:12.90px;line-height:17px;color:#1a1a1a;letter-spacing:0.173px;">PT Berdaya Energy Engineering</div>
<div class="r" style="left:25.50px;top:657.80px;width:1159.50px;height:1.20px;background:#111;"></div>
<div class="t" style="left:28.30px;top:660.73px;font-size:12.90px;line-height:17px;color:#1a1a1a;letter-spacing:0.024px;">CV Rekayasa Power</div>
<div class="r" style="left:25.50px;top:677.80px;width:1159.50px;height:1.20px;background:#111;"></div>
<div class="t" style="left:28.30px;top:680.73px;font-size:12.90px;line-height:17px;color:#1a1a1a;letter-spacing:0.314px;">Johnny Kalwani</div>
<div class="r" style="left:25.50px;top:697.80px;width:1159.50px;height:1.20px;background:#111;"></div>
<div class="t" style="left:28.30px;top:700.73px;font-size:12.90px;line-height:17px;color:#1a1a1a;letter-spacing:0.326px;">Kalwani Stockindo Utama Kemas</div>
<div class="r" style="left:25.50px;top:717.80px;width:1159.50px;height:1.20px;background:#111;"></div>
<div class="t" style="left:28.30px;top:720.73px;font-size:12.90px;line-height:17px;color:#1a1a1a;letter-spacing:0.100px;">CV Masaba Fashion Kreasi</div>
<div class="r" style="left:25.50px;top:737.80px;width:1159.50px;height:1.20px;background:#111;"></div>
<div class="t" style="left:28.30px;top:740.73px;font-size:12.90px;line-height:17px;color:#1a1a1a;letter-spacing:0.179px;">PT Sahara Wellness Abadi</div>
<div class="r" style="left:25.50px;top:757.80px;width:1159.50px;height:1.20px;background:#111;"></div>
<div class="t" style="left:28.30px;top:760.73px;font-size:12.90px;line-height:17px;color:#1a1a1a;letter-spacing:-0.109px;">PT Jay Kay Kasindo</div>
<div class="r" style="left:25.50px;top:777.80px;width:1159.50px;height:1.20px;background:#111;"></div>
<div class="t" style="left:28.30px;top:780.73px;font-size:12.90px;line-height:17px;color:#1a1a1a;letter-spacing:0.051px;">PT Jejak Karya Bumi</div>
<div class="r" style="left:25.50px;top:797.80px;width:1159.50px;height:1.20px;background:#111;"></div>
<div class="t" style="left:28.30px;top:800.73px;font-size:12.90px;line-height:17px;color:#1a1a1a;letter-spacing:0.270px;">PT Kanawa Abadi Nusantara</div>
<div class="r" style="left:25.50px;top:817.80px;width:1159.50px;height:1.20px;background:#111;"></div>
<div class="t" style="left:28.30px;top:820.73px;font-size:12.90px;line-height:17px;color:#1a1a1a;letter-spacing:0.305px;">CV Pergota Karya Mandiri</div>
<div class="r" style="left:25.50px;top:837.80px;width:1159.50px;height:1.20px;background:#111;"></div>
<div class="t" style="left:28.30px;top:840.73px;font-size:12.90px;line-height:17px;color:#1a1a1a;letter-spacing:0.363px;">CV Malik Mitra Persada</div>
<div class="r" style="left:25.50px;top:857.80px;width:1159.50px;height:1.20px;background:#111;"></div>
<div class="t" style="left:28.30px;top:860.73px;font-size:12.90px;line-height:17px;color:#1a1a1a;letter-spacing:-0.487px;">PT BERJAYA BERKAH INFRASTRUKTUR</div>
<div class="r" style="left:25.50px;top:877.80px;width:1159.50px;height:1.20px;background:#111;"></div>
<div class="t" style="left:28.30px;top:880.73px;font-size:12.90px;line-height:17px;color:#1a1a1a;letter-spacing:0.280px;">CV Mahri Sejahtera Bersama</div>
<div class="r" style="left:25.50px;top:897.80px;width:1159.50px;height:1.20px;background:#111;"></div>
<div class="t" style="left:28.30px;top:900.73px;font-size:12.90px;line-height:17px;color:#1a1a1a;letter-spacing:0.197px;">CV Kencana Malik</div>
<div class="r" style="left:25.50px;top:917.80px;width:1159.50px;height:1.20px;background:#111;"></div>
<div class="t" style="left:28.30px;top:920.73px;font-size:12.90px;line-height:17px;color:#1a1a1a;letter-spacing:0.176px;">CV Nusantara Persada Berkah</div>
<div class="r" style="left:25.50px;top:937.80px;width:1159.50px;height:1.20px;background:#111;"></div>
<div class="r" style="left:25.50px;top:939.00px;width:1159.50px;height:19.00px;background:#d35f10;"></div>
<div class="t" style="left:28.30px;top:940.73px;font-size:12.90px;line-height:17px;color:#4a1404;letter-spacing:0.205px;">CV Kencana Berkah Kontruksi</div>
<div class="r" style="left:25.50px;top:957.80px;width:1159.50px;height:1.20px;background:#111;"></div>
<div class="r" style="left:1276.00px;top:278.00px;width:1.20px;height:680.00px;background:#111;"></div>
<div class="r" style="left:1349.60px;top:238.00px;width:1.30px;height:720.00px;background:#111;"></div>
<div class="r" style="left:1184.00px;top:297.80px;width:166.50px;height:1.20px;background:#111;"></div>
<div class="r" style="left:1184.00px;top:317.80px;width:166.50px;height:1.20px;background:#111;"></div>
<div class="r" style="left:1184.00px;top:337.80px;width:166.50px;height:1.20px;background:#111;"></div>
<div class="r" style="left:1184.00px;top:357.80px;width:166.50px;height:1.20px;background:#111;"></div>
<div class="r" style="left:1184.00px;top:377.80px;width:166.50px;height:1.20px;background:#111;"></div>
<div class="r" style="left:1184.00px;top:397.80px;width:166.50px;height:1.20px;background:#111;"></div>
<div class="r" style="left:1184.00px;top:417.80px;width:166.50px;height:1.20px;background:#111;"></div>
<div class="r" style="left:1184.00px;top:437.80px;width:166.50px;height:1.20px;background:#111;"></div>
<div class="r" style="left:1184.00px;top:457.80px;width:166.50px;height:1.20px;background:#111;"></div>
<div class="r" style="left:1184.00px;top:477.80px;width:166.50px;height:1.20px;background:#111;"></div>
<div class="r" style="left:1184.00px;top:497.80px;width:166.50px;height:1.20px;background:#111;"></div>
<div class="r" style="left:1184.00px;top:517.80px;width:166.50px;height:1.20px;background:#111;"></div>
<div class="r" style="left:1184.00px;top:537.80px;width:166.50px;height:1.20px;background:#111;"></div>
<div class="r" style="left:1184.00px;top:557.80px;width:166.50px;height:1.20px;background:#111;"></div>
<div class="r" style="left:1184.00px;top:577.80px;width:166.50px;height:1.20px;background:#111;"></div>
<div class="r" style="left:1184.00px;top:597.80px;width:166.50px;height:1.20px;background:#111;"></div>
<div class="r" style="left:1184.00px;top:617.80px;width:166.50px;height:1.20px;background:#111;"></div>
<div class="r" style="left:1184.00px;top:637.80px;width:166.50px;height:1.20px;background:#111;"></div>
<div class="r" style="left:1184.00px;top:657.80px;width:166.50px;height:1.20px;background:#111;"></div>
<div class="r" style="left:1184.00px;top:677.80px;width:166.50px;height:1.20px;background:#111;"></div>
<div class="r" style="left:1184.00px;top:697.80px;width:166.50px;height:1.20px;background:#111;"></div>
<div class="r" style="left:1184.00px;top:717.80px;width:166.50px;height:1.20px;background:#111;"></div>
<div class="r" style="left:1184.00px;top:737.80px;width:166.50px;height:1.20px;background:#111;"></div>
<div class="r" style="left:1184.00px;top:757.80px;width:166.50px;height:1.20px;background:#111;"></div>
<div class="r" style="left:1184.00px;top:777.80px;width:166.50px;height:1.20px;background:#111;"></div>
<div class="r" style="left:1184.00px;top:797.80px;width:166.50px;height:1.20px;background:#111;"></div>
<div class="r" style="left:1184.00px;top:817.80px;width:166.50px;height:1.20px;background:#111;"></div>
<div class="r" style="left:1184.00px;top:837.80px;width:166.50px;height:1.20px;background:#111;"></div>
<div class="r" style="left:1184.00px;top:857.80px;width:166.50px;height:1.20px;background:#111;"></div>
<div class="r" style="left:1184.00px;top:877.80px;width:166.50px;height:1.20px;background:#111;"></div>
<div class="r" style="left:1184.00px;top:897.80px;width:166.50px;height:1.20px;background:#111;"></div>
<div class="r" style="left:1184.00px;top:917.80px;width:166.50px;height:1.20px;background:#111;"></div>
<div class="r" style="left:1184.00px;top:937.80px;width:166.50px;height:1.20px;background:#111;"></div>
<div class="r" style="left:1184.00px;top:957.80px;width:166.50px;height:1.20px;background:#111;"></div>
<div class="r" style="left:1184.00px;top:799.00px;width:92.00px;height:19.00px;background:#ffff00;"></div>
<div class="r" style="left:1277.20px;top:799.00px;width:72.40px;height:19.00px;background:#ffff00;"></div>
<div class="t" style="left:1194.50px;top:800.73px;font-size:12.90px;line-height:17px;color:#1a1a1a;letter-spacing:0.016px;">9.066.448,00</div>
<div class="t" style="left:1280.50px;top:800.73px;font-size:12.90px;line-height:17px;color:#1a1a1a;letter-spacing:0.326px;">07/01/2026</div>
<div class="r" style="left:1898.50px;top:217.00px;width:21.50px;height:761.00px;background:#141414;"></div>
<svg class="r" style="left:1904.00px;top:223.00px;" width="10" height="9" viewBox="0 0 10 9"><path d="M5 0.8 L9.5 8 H0.5 Z" fill="#8a8a8a"/></svg>
<div class="r" style="left:1904.30px;top:885.00px;width:9.70px;height:79.00px;background:#9c9c9c;border-radius:5px;"></div>
<svg class="r" style="left:1904.00px;top:967.50px;" width="10" height="9" viewBox="0 0 10 9"><path d="M5 8.2 L9.5 1 H0.5 Z" fill="#8a8a8a"/></svg>
<svg class="r" style="left:28.00px;top:989.50px;" width="7" height="9" viewBox="0 0 7 9"><path d="M6 0.7 L1.2 4.5 L6 8.3" fill="none" stroke="#858585" stroke-width="1.5"/></svg>
<svg class="r" style="left:61.00px;top:989.50px;" width="7" height="9" viewBox="0 0 7 9"><path d="M1 0.7 L5.8 4.5 L1 8.3" fill="none" stroke="#858585" stroke-width="1.5"/></svg>
<div class="t" style="left:126.00px;top:985.68px;font-size:13.60px;line-height:18px;color:#f2f2f2;letter-spacing:0.183px;">Daftar klien</div>
<div class="r" style="left:1221.50px;top:988.50px;width:662.50px;height:10.00px;background:#9c9c9c;border-radius:5px;"></div>
<svg class="r" style="left:1888.00px;top:988.50px;" width="9" height="10" viewBox="0 0 9 10"><path d="M8.2 5 L1 9.5 V0.5 Z" fill="#9a9a9a"/></svg>
<div class="r" style="left:0.00px;top:1010.00px;width:1920.00px;height:22.00px;background:#141414;"></div>
<div class="r" style="left:0.00px;top:1010.00px;width:1920.00px;height:1.00px;background:#2c2c2c;"></div>
<div class="t" style="left:11.00px;top:1014.14px;font-size:12.00px;line-height:16px;color:#e6e6e6;letter-spacing:-0.922px;">Ready</div>
<svg class="r" style="left:62.00px;top:1013.00px;" width="14" height="15" viewBox="0 0 14 15"><circle cx="6.5" cy="2.3" r="1.7" fill="none" stroke="#e6e6e6" stroke-width="1"/><path d="M1 5.2 Q6.5 7 12 5.2 M6.5 6.3 V9.5 M6.5 9.5 L3 14.3 M6.5 9.5 L8 11.5" fill="none" stroke="#e6e6e6" stroke-width="1.1"/><path d="M9 10.5 L13.3 14.5 M13.3 10.5 L9 14.5" stroke="#e6e6e6" stroke-width="1"/></svg>
<div class="t" style="left:80.00px;top:1013.94px;font-size:12.00px;line-height:16px;color:#e6e6e6;font-weight:bold;letter-spacing:-0.696px;">Accessibility: Investigate</div>
<div class="r" style="left:1620.00px;top:1011.00px;width:40.00px;height:21.00px;background:#2b2b2b;"></div>
<svg class="r" style="left:1633.00px;top:1014.00px;" width="14" height="14" viewBox="0 0 14 14"><rect x="0.6" y="0.6" width="12.8" height="12.8" fill="none" stroke="#e6e6e6" stroke-width="1.1"/><path d="M4.9 0.6 V13.4 M9.1 0.6 V13.4 M0.6 4.9 H13.4 M0.6 9.1 H13.4" stroke="#e6e6e6" stroke-width="1"/></svg>
<svg class="r" style="left:1673.00px;top:1014.00px;" width="14" height="14" viewBox="0 0 14 14"><rect x="0.6" y="0.6" width="12.8" height="12.8" fill="none" stroke="#e6e6e6" stroke-width="1.1"/><rect x="3.5" y="3.5" width="7" height="7" fill="none" stroke="#e6e6e6" stroke-width="1"/><path d="M5 5.7 H9 M5 7.7 H9" stroke="#e6e6e6" stroke-width="0.9"/></svg>
<svg class="r" style="left:1713.00px;top:1014.00px;" width="14" height="14" viewBox="0 0 14 14"><rect x="0.6" y="0.6" width="12.8" height="12.8" fill="none" stroke="#e6e6e6" stroke-width="1.1"/><path d="M4.5 0.6 V7.5 H9.5 V0.6" fill="none" stroke="#e6e6e6" stroke-width="1"/></svg>
<div class="r" style="left:1746.00px;top:1020.50px;width:7.50px;height:1.10px;background:#e6e6e6;"></div>
<div class="r" style="left:1759.00px;top:1020.80px;width:100.00px;height:1.00px;background:#7a7a7a;"></div>
<div class="r" style="left:1806.70px;top:1015.00px;width:5.60px;height:12.00px;background:#c8c8c8;"></div>
<svg class="r" style="left:1864.00px;top:1017.00px;" width="8" height="8" viewBox="0 0 8 8"><path d="M4 0 V8 M0 4 H8" stroke="#e6e6e6" stroke-width="1.1"/></svg>
<div class="t" style="left:1885.00px;top:1013.94px;font-size:12.00px;line-height:16px;color:#e6e6e6;letter-spacing:-1.131px;">100%</div>
</div>
<div class="r" style="left:197px;top:238px;width:14px;height:740px;background:linear-gradient(90deg,rgba(0,0,0,0),rgba(0,0,0,.03) 45%,rgba(0,0,0,.08) 75%,rgba(0,0,0,.18))"></div>
<div class="r" style="left:1185px;top:238px;width:44px;height:740px;background:linear-gradient(90deg,rgba(0,0,0,.17),rgba(0,0,0,.07) 22%,rgba(0,0,0,.025) 55%,rgba(0,0,0,0))"></div>
<div id="xl2"><div class="in">
<svg class="r" style="left:228.00px;top:85.80px;" width="16" height="17" viewBox="0 0 16 17"><rect x="2.2" y="0.4" width="13" height="16.2" rx="1.6" fill="#1f8b3d"/><path d="M3.8 0.4 H13.6 Q15.2 0.4 15.2 2 V4.9 H2.2 V2 Q2.2 0.4 3.8 0.4 Z" fill="#97d862"/><rect x="8.8" y="4.9" width="6.4" height="3.9" fill="#2fa34c"/><rect x="8.8" y="8.8" width="6.4" height="3.9" fill="#23883c"/><path d="M8.8 12.7 H15.2 V15 Q15.2 16.6 13.6 16.6 H8.8 Z" fill="#1a7032"/><rect x="0.3" y="4.6" width="8.8" height="9.9" rx="1.6" fill="#14703a"/><path d="M2.7 6.9 L6.6 12.2 M6.6 6.9 L2.7 12.2" stroke="#fff" stroke-width="1.5"/></svg>
<svg class="r" style="left:260.00px;top:86.00px;" width="16" height="16" viewBox="0 0 16 16"><path d="M1.5 0.5 H12.5 L15.5 3.5 V15.5 H0.5 V1.5 Z M4 0.5 V5.5 H11.5 V0.5 M3.5 15.5 V9.5 H12.5 V15.5" fill="none" stroke="#585858" stroke-width="1.1"/></svg>
<svg class="r" style="left:290.00px;top:86.00px;" width="15" height="17" viewBox="0 0 15 17"><path d="M1 1 V6.5 H6.5 M1.2 6.3 C4 2 9 1 12 4 C15 7.5 12.5 11.5 9 13.5 L5 16.5" fill="none" stroke="#585858" stroke-width="1.2"/></svg>
<svg class="r" style="left:310.00px;top:92.00px;" width="7" height="4.2" viewBox="0 0 7 4.2"><path d="M0.5 0.5 L3.5 3.2 L6.5 0.5" fill="none" stroke="#585858" stroke-width="1.2" stroke-linecap="round" stroke-linejoin="round"/></svg>
<div class="r" style="left:600.00px;top:78.00px;width:289.50px;height:31.50px;background:#121212;border:1px solid #3c3c3c;border-radius:4px;box-sizing:border-box;"></div>
<div class="t" style="left:670.00px;top:85.92px;font-size:13.20px;line-height:17px;color:#777;letter-spacing:-0.665px;">Search</div>
<svg class="r" style="left:641.50px;top:86.50px;" width="15" height="15" viewBox="0 0 15 15"><circle cx="9" cy="5.8" r="4.6" fill="none" stroke="#777" stroke-width="1.2"/><path d="M5.8 9.2 L0.8 14.2" stroke="#777" stroke-width="1.2"/></svg>
<div class="r" style="left:972.00px;top:84.00px;width:58.00px;height:19.00px;background:#6a6a6a;"></div>
<div class="t" style="left:983.25px;top:86.09px;font-size:13.00px;line-height:17px;color:#111;letter-spacing:-0.708px;">Sign in</div>
<div class="r" style="left:1057.70px;top:93.00px;width:13.00px;height:1.00px;background:#777;"></div>
<svg class="r" style="left:1106.50px;top:88.50px;" width="11" height="11" viewBox="0 0 11 11"><rect x="0.5" y="0.5" width="10" height="10" rx="1" fill="none" stroke="#777" stroke-width="1"/></svg>
<svg class="r" style="left:1153.50px;top:88.50px;" width="13" height="12" viewBox="0 0 13 12"><path d="M0.5 0.5 L12.5 11.5 M12.5 0.5 L0.5 11.5" stroke="#808080" stroke-width="1"/></svg>
<div class="t" style="left:234.30px;top:125.02px;font-size:13.20px;line-height:17px;color:#f2f2f2;letter-spacing:-0.990px;">File</div>
<div class="t" style="left:279.60px;top:125.02px;font-size:13.20px;line-height:17px;color:#f2f2f2;font-weight:bold;letter-spacing:-0.058px;">Home</div>
<div class="r" style="left:279.60px;top:141.80px;width:36.80px;height:2.20px;background:#86bf9e;border-radius:1px;"></div>
<div class="t" style="left:336.00px;top:125.02px;font-size:13.20px;line-height:17px;color:#f2f2f2;letter-spacing:-0.203px;">Insert</div>
<div class="t" style="left:389.00px;top:125.02px;font-size:13.20px;line-height:17px;color:#f2f2f2;letter-spacing:-0.268px;">Draw</div>
<div class="t" style="left:441.00px;top:125.02px;font-size:13.20px;line-height:17px;color:#f2f2f2;letter-spacing:-0.313px;">Page Layout</div>
<div class="t" style="left:534.00px;top:125.02px;font-size:13.20px;line-height:17px;color:#f2f2f2;letter-spacing:-0.145px;">Formulas</div>
<div class="t" style="left:610.00px;top:125.02px;font-size:13.20px;line-height:17px;color:#f2f2f2;letter-spacing:-0.628px;">Data</div>
<div class="t" style="left:656.40px;top:125.02px;font-size:13.20px;line-height:17px;color:#f2f2f2;letter-spacing:-0.696px;">Review</div>
<div class="t" style="left:716.00px;top:125.02px;font-size:13.20px;line-height:17px;color:#f2f2f2;letter-spacing:-0.358px;">View</div>
<div class="t" style="left:763.30px;top:125.02px;font-size:13.20px;line-height:17px;color:#f2f2f2;letter-spacing:-0.216px;">Help</div>
<div class="t" style="left:811.20px;top:125.02px;font-size:13.20px;line-height:17px;color:#f2f2f2;letter-spacing:0.135px;">Acrobat</div>
<div class="r" style="left:1101.00px;top:121.30px;width:71.00px;height:23.50px;background:#41b36a;border-radius:4px;"></div>
<svg class="r" style="left:1105.30px;top:126.30px;" width="14" height="14" viewBox="0 0 14 14"><path d="M5 3.5 H2.5 Q1 3.5 1 5 V11.5 Q1 13 2.5 13 H10 Q11.5 13 11.5 11.5 V10" fill="none" stroke="#0c2a17" stroke-width="1.1"/><path d="M8.5 1 L12.5 4.5 L8.5 8 V6 Q5.5 6 4 9 Q4 3.5 8.5 3.2 Z" fill="none" stroke="#0c2a17" stroke-width="1.1" stroke-linejoin="round"/></svg>
<div class="t" style="left:1122.10px;top:125.32px;font-size:13.50px;line-height:18px;color:#0c2a17;letter-spacing:-0.957px;">Share</div>
<svg class="r" style="left:1161.50px;top:131.30px;" width="5.5" height="4" viewBox="0 0 5.5 4"><path d="M0.5 0.5 L2.75 3 L5 0.5" fill="none" stroke="#0c2a17" stroke-width="1.1" stroke-linecap="round" stroke-linejoin="round"/></svg>
<div class="r" style="left:219.80px;top:148.00px;width:955.70px;height:100.40px;background:#292929;border-radius:8px;"></div>
<svg class="r" style="left:240.40px;top:156.80px;" width="28" height="31" viewBox="0 0 28 31"><path d="M5.5 5.8 H2 V27.5 H13.7" fill="none" stroke="#f0a83a" stroke-width="2.3"/><path d="M18.2 5.8 H20.9 V12.3" fill="none" stroke="#f0a83a" stroke-width="2.3"/><path d="M5.8 8.3 V4.3 H8.8 Q9.3 0.8 11.9 0.8 Q14.5 0.8 15 4.3 H18 V8.3 Z" fill="#292929" stroke="#c4c4c4" stroke-width="1"/><rect x="14.4" y="13" width="13.2" height="16.7" fill="#292929" stroke="#e2e2e2" stroke-width="1.1"/></svg>
<div class="t" style="left:239.45px;top:190.32px;font-size:13.20px;line-height:17px;color:#f2f2f2;letter-spacing:-1.564px;">Paste</div>
<svg class="r" style="left:249.00px;top:212.50px;" width="6.5" height="4.5" viewBox="0 0 6.5 4.5"><path d="M0.5 0.5 L3.25 3.5 L6 0.5" fill="none" stroke="#d8d8d8" stroke-width="1.3" stroke-linecap="round" stroke-linejoin="round"/></svg>
<svg class="r" style="left:282.80px;top:155.80px;" width="11" height="17" viewBox="0 0 11 17"><path d="M3 0.5 L7.3 11.5 M8 0.5 L3.7 11.5" stroke="#e0e0e0" stroke-width="1.1" fill="none"/><circle cx="2.8" cy="13.8" r="2.2" fill="none" stroke="#4aa0e6" stroke-width="1.2"/><circle cx="8.2" cy="13.8" r="2.2" fill="none" stroke="#4aa0e6" stroke-width="1.2"/></svg>
<svg class="r" style="left:279.50px;top:182.00px;" width="17" height="16" viewBox="0 0 17 16"><path d="M5.5 3 V0.6 H0.6 V12.5 H4.5" fill="none" stroke="#d8d8d8" stroke-width="1.1"/><path d="M6.5 3.5 H12 L15.5 7 V15.4 H6.5 Z M11.8 3.6 V7.2 H15.4" fill="none" stroke="#d8d8d8" stroke-width="1.1"/><path d="M9 10 H13.5 M9 12.5 H13.5" stroke="#d8d8d8" stroke-width="1"/></svg>
<svg class="r" style="left:308.00px;top:188.50px;" width="6.5" height="4.5" viewBox="0 0 6.5 4.5"><path d="M0.5 0.5 L3.25 3.5 L6 0.5" fill="none" stroke="#d8d8d8" stroke-width="1.3" stroke-linecap="round" stroke-linejoin="round"/></svg>
<svg class="r" style="left:280.00px;top:207.50px;" width="17" height="16" viewBox="0 0 17 16"><path d="M11 5.5 L15.5 1" stroke="#e0e0e0" stroke-width="2.2" stroke-linecap="round"/><path d="M8.5 4 L13 8.5 L11 10.5 L6.5 6 Z" fill="none" stroke="#e0e0e0" stroke-width="1"/><path d="M6 6.5 L10.5 11 L6.5 15.3 L1 10.5 Z" fill="#e9c45c" stroke="#c89a30" stroke-width="0.8" stroke-linejoin="round"/></svg>
<div class="t" style="left:244.40px;top:230.33px;font-size:12.60px;line-height:16px;color:#f2f2f2;letter-spacing:-0.442px;">Clipboard</div>
<svg class="r" style="left:319.80px;top:233.80px;" width="9" height="9" viewBox="0 0 9 9"><path d="M5.6 0.5 H0.5 V6.2 M3.2 3.4 L8.2 7.9 M4.2 8 H8.4 V3.8" fill="none" stroke="#d0d0d0" stroke-width="1"/></svg>
<svg class="r" style="left:643.00px;top:157.00px;" width="16" height="16" viewBox="0 0 16 16"><rect x="0.6" y="0.6" width="14.8" height="14.8" fill="none" stroke="#d8d8d8" stroke-width="1"/><path d="M0.6 5.5 H15.4 M0.6 10.5 H15.4 M5.5 0.6 V15.4 M10.5 0.6 V15.4" stroke="#d8d8d8" stroke-width="1"/><rect x="1" y="6" width="4" height="4" fill="#e03a4a"/><rect x="6" y="8.5" width="4.2" height="5.5" fill="#e03a4a"/></svg>
<svg class="r" style="left:643.00px;top:183.00px;" width="16" height="16" viewBox="0 0 16 16"><rect x="0.6" y="0.6" width="14.8" height="14.8" fill="none" stroke="#d8d8d8" stroke-width="1"/><path d="M0.6 5.5 H15.4 M5.5 0.6 V15.4 M10.5 0.6 V15.4" stroke="#d8d8d8" stroke-width="1"/><path d="M4 15.5 L15 4.5 M7 16 L16 7" stroke="#4aa0e6" stroke-width="1.6"/></svg>
<svg class="r" style="left:643.00px;top:208.50px;" width="16" height="16" viewBox="0 0 16 16"><rect x="0.6" y="0.6" width="14.8" height="14.8" fill="none" stroke="#d8d8d8" stroke-width="1"/><path d="M0.6 5.5 H15.4 M8 0.6 V5.5" stroke="#d8d8d8" stroke-width="1"/><path d="M4 15.5 L15 4.5 M7 16 L16 7" stroke="#4aa0e6" stroke-width="1.6"/></svg>
<div class="t" style="left:662.70px;top:156.32px;font-size:13.20px;line-height:17px;color:#f2f2f2;letter-spacing:-0.467px;">Conditional Formatting</div>
<svg class="r" style="left:789.20px;top:162.60px;" width="6" height="4.2" viewBox="0 0 6 4.2"><path d="M0.5 0.5 L3 3.2 L5.5 0.5" fill="none" stroke="#e0e0e0" stroke-width="1.5" stroke-linecap="round" stroke-linejoin="round"/></svg>
<div class="t" style="left:662.70px;top:182.02px;font-size:13.20px;line-height:17px;color:#f2f2f2;letter-spacing:-0.921px;">Format as Table</div>
<svg class="r" style="left:747.70px;top:188.40px;" width="6" height="4.2" viewBox="0 0 6 4.2"><path d="M0.5 0.5 L3 3.2 L5.5 0.5" fill="none" stroke="#e0e0e0" stroke-width="1.5" stroke-linecap="round" stroke-linejoin="round"/></svg>
<div class="t" style="left:662.70px;top:207.72px;font-size:13.20px;line-height:17px;color:#f2f2f2;letter-spacing:-0.985px;">Cell Styles</div>
<svg class="r" style="left:718.70px;top:214.20px;" width="6" height="4.2" viewBox="0 0 6 4.2"><path d="M0.5 0.5 L3 3.2 L5.5 0.5" fill="none" stroke="#e0e0e0" stroke-width="1.5" stroke-linecap="round" stroke-linejoin="round"/></svg>
<div class="t" style="left:706.75px;top:230.13px;font-size:12.60px;line-height:16px;color:#f2f2f2;letter-spacing:-1.162px;">Styles</div>
<div class="r" style="left:813.00px;top:152.50px;width:1.00px;height:89.00px;background:#484848;"></div>
<svg class="r" style="left:826.50px;top:152.00px;" width="29" height="28" viewBox="0 0 29 28"><path d="M6.5 0.5 V3.5 M21.5 0.5 V3.5 M6.5 2 H21.5" stroke="#6fb2ee" stroke-width="1"/><rect x="0.6" y="5.5" width="27.6" height="21.6" fill="none" stroke="#d8d8d8" stroke-width="1"/><path d="M0.6 12.5 H28 M0.6 20 H28 M7 5.5 V27 M21 5.5 V27" stroke="#d8d8d8" stroke-width="1"/><rect x="7.5" y="13" width="13" height="6.6" fill="#1e7fd6"/></svg>
<div class="t" style="left:828.25px;top:187.02px;font-size:13.20px;line-height:17px;color:#f2f2f2;letter-spacing:-1.210px;">Cells</div>
<svg class="r" style="left:837.30px;top:209.50px;" width="6.5" height="4.5" viewBox="0 0 6.5 4.5"><path d="M0.5 0.5 L3.25 3.5 L6 0.5" fill="none" stroke="#d8d8d8" stroke-width="1.3" stroke-linecap="round" stroke-linejoin="round"/></svg>
<div class="r" style="left:868.00px;top:152.50px;width:1.00px;height:89.00px;background:#484848;"></div>
<svg class="r" style="left:881.00px;top:154.00px;" width="30" height="30" viewBox="0 0 30 30"><circle cx="18.5" cy="10.5" r="9.6" fill="none" stroke="#d8d8d8" stroke-width="1.2"/><path d="M11.5 17.5 L1 28.5" stroke="#d8d8d8" stroke-width="1.2"/></svg>
<div class="t" style="left:877.25px;top:187.02px;font-size:13.20px;line-height:17px;color:#f2f2f2;letter-spacing:-0.644px;">Editing</div>
<svg class="r" style="left:892.30px;top:209.50px;" width="6.5" height="4.5" viewBox="0 0 6.5 4.5"><path d="M0.5 0.5 L3.25 3.5 L6 0.5" fill="none" stroke="#d8d8d8" stroke-width="1.3" stroke-linecap="round" stroke-linejoin="round"/></svg>
<div class="r" style="left:923.20px;top:152.50px;width:1.00px;height:89.00px;background:#484848;"></div>
<svg class="r" style="left:940.80px;top:156.30px;" width="29" height="29" viewBox="0 0 29 29"><rect x="0.7" y="0.7" width="27.6" height="27.6" fill="none" stroke="#c4471f" stroke-width="1.3"/><path d="M14.5 0.7 V28.3 M0.7 14.5 H28.3" stroke="#c4471f" stroke-width="1.3"/><rect x="4" y="4" width="7.5" height="7.5" fill="none" stroke="#c4471f" stroke-width="1"/><rect x="17.5" y="4" width="7.5" height="7.5" fill="none" stroke="#c4471f" stroke-width="1"/><rect x="4" y="17.5" width="7.5" height="7.5" fill="none" stroke="#c4471f" stroke-width="1"/><rect x="17.5" y="17.5" width="7.5" height="7.5" fill="none" stroke="#c4471f" stroke-width="1"/></svg>
<div class="t" style="left:934.00px;top:189.22px;font-size:13.20px;line-height:17px;color:#f2f2f2;letter-spacing:-0.460px;">Add-ins</div>
<div class="t" style="left:935.25px;top:230.13px;font-size:12.60px;line-height:16px;color:#f2f2f2;letter-spacing:-0.537px;">Add-ins</div>
<div class="r" style="left:986.20px;top:152.50px;width:1.00px;height:89.00px;background:#484848;"></div>
<svg class="r" style="left:1031.50px;top:159.50px;" width="25" height="26" viewBox="0 0 25 26"><path d="M8 20 H1.2 V1.2 H10.5 L15.5 6.5 V9" fill="none" stroke="#1473e6" stroke-width="1.8" stroke-linejoin="round"/><path d="M10 1.5 V7 H15.5" fill="none" stroke="#1473e6" stroke-width="1.6"/><path d="M11.5 17 V24.5 H23.5 V17" fill="none" stroke="#1473e6" stroke-width="1.8"/><path d="M17.5 20.5 V11 M14 14 L17.5 10.5 L21 14" fill="none" stroke="#1473e6" stroke-width="1.8"/></svg>
<div class="t" style="left:997.20px;top:189.22px;font-size:13.20px;line-height:17px;color:#f2f2f2;letter-spacing:-1.014px;">Create and Share</div>
<div class="t" style="left:1012.20px;top:205.32px;font-size:13.20px;line-height:17px;color:#f2f2f2;letter-spacing:-1.155px;">Adobe PDF</div>
<div class="t" style="left:1003.20px;top:230.13px;font-size:12.60px;line-height:16px;color:#f2f2f2;letter-spacing:-0.472px;">Adobe Acrobat</div>
<div class="r" style="left:1096.20px;top:152.50px;width:1.00px;height:89.00px;background:#484848;"></div>
<svg class="r" style="left:1156.50px;top:231.80px;" width="10" height="6.5" viewBox="0 0 10 6.5"><path d="M0.5 0.5 L5 5.5 L9.5 0.5" fill="none" stroke="#d8d8d8" stroke-width="1.3" stroke-linecap="round" stroke-linejoin="round"/></svg>
<div class="r" style="left:219.80px;top:256.60px;width:101.60px;height:25.20px;background:#292929;border:1px solid #545454;border-radius:4px;box-sizing:border-box;"></div>
<div class="t" style="left:227.50px;top:260.68px;font-size:13.60px;line-height:18px;color:#f0f0f0;letter-spacing:-1.421px;">E149</div>
<svg class="r" style="left:305.50px;top:266.50px;" width="10.5" height="6.5" viewBox="0 0 10.5 6.5"><path d="M0.5 0.5 L5.25 5.5 L10 0.5" fill="none" stroke="#c8c8c8" stroke-width="1.3" stroke-linecap="round" stroke-linejoin="round"/></svg>
<div class="r" style="left:419.00px;top:256.60px;width:756.70px;height:25.20px;background:#292929;border:1px solid #545454;border-radius:4px;box-sizing:border-box;"></div>
<svg class="r" style="left:1161.50px;top:265.00px;" width="10" height="6.5" viewBox="0 0 10 6.5"><path d="M0.5 0.5 L5 5.5 L9.5 0.5" fill="none" stroke="#c8c8c8" stroke-width="1.3" stroke-linecap="round" stroke-linejoin="round"/></svg>
<svg class="r" style="left:224.00px;top:293.50px;" width="10.5" height="11" viewBox="0 0 10.5 11"><path d="M10 0.5 V10.5 H0.5 Z" fill="#6a6a6a"/></svg>
<div class="r" style="left:236.50px;top:291.00px;width:1.00px;height:16.00px;background:#4a4a4a;"></div>
<div class="r" style="left:264.70px;top:291.00px;width:1.00px;height:16.00px;background:#4a4a4a;"></div>
<div class="r" style="left:299.70px;top:291.00px;width:1.00px;height:16.00px;background:#4a4a4a;"></div>
<div class="r" style="left:367.70px;top:291.00px;width:1.00px;height:16.00px;background:#4a4a4a;"></div>
<div class="r" style="left:481.90px;top:291.00px;width:1.00px;height:16.00px;background:#4a4a4a;"></div>
<div class="r" style="left:551.50px;top:291.00px;width:1.00px;height:16.00px;background:#4a4a4a;"></div>
<div class="r" style="left:630.00px;top:291.00px;width:1.00px;height:16.00px;background:#4a4a4a;"></div>
<div class="r" style="left:913.70px;top:291.00px;width:1.00px;height:16.00px;background:#4a4a4a;"></div>
<div class="r" style="left:1046.90px;top:291.00px;width:1.00px;height:16.00px;background:#4a4a4a;"></div>
<div class="r" style="left:1161.50px;top:291.00px;width:1.00px;height:16.00px;background:#4a4a4a;"></div>
<div class="t" style="left:247.80px;top:291.44px;font-size:12.00px;line-height:16px;color:#dadada;">A</div>
<div class="t" style="left:279.20px;top:291.44px;font-size:12.00px;line-height:16px;color:#dadada;">B</div>
<div class="t" style="left:329.67px;top:291.44px;font-size:12.00px;line-height:16px;color:#dadada;">C</div>
<div class="t" style="left:420.67px;top:291.44px;font-size:12.00px;line-height:16px;color:#dadada;">D</div>
<div class="t" style="left:513.00px;top:291.44px;font-size:12.00px;line-height:16px;color:#dadada;">E</div>
<div class="t" style="left:587.33px;top:291.44px;font-size:12.00px;line-height:16px;color:#dadada;">F</div>
<div class="t" style="left:767.73px;top:291.44px;font-size:12.00px;line-height:16px;color:#dadada;">G</div>
<div class="t" style="left:976.67px;top:291.44px;font-size:12.00px;line-height:16px;color:#dadada;">H</div>
<div class="t" style="left:1109.13px;top:291.44px;font-size:12.00px;line-height:16px;color:#dadada;">I</div>
<div class="r" style="left:237.00px;top:307.00px;width:925.00px;height:709.00px;background:#ffffff;"></div>
<div class="t" style="left:221.00px;top:307.83px;font-size:12.60px;line-height:16px;color:#e8e8e8;">1</div>
<div class="r" style="left:212.00px;top:322.50px;width:25.00px;height:1.00px;background:#3c3c3c;"></div>
<div class="t" style="left:221.00px;top:323.83px;font-size:12.60px;line-height:16px;color:#e8e8e8;">2</div>
<div class="r" style="left:212.00px;top:338.50px;width:25.00px;height:1.00px;background:#3c3c3c;"></div>
<div class="t" style="left:221.00px;top:339.83px;font-size:12.60px;line-height:16px;color:#e8e8e8;">3</div>
<div class="r" style="left:212.00px;top:354.50px;width:25.00px;height:1.00px;background:#3c3c3c;"></div>
<div class="t" style="left:221.00px;top:355.83px;font-size:12.60px;line-height:16px;color:#e8e8e8;">4</div>
<div class="r" style="left:212.00px;top:370.50px;width:25.00px;height:1.00px;background:#3c3c3c;"></div>
<div class="t" style="left:221.00px;top:371.83px;font-size:12.60px;line-height:16px;color:#e8e8e8;">5</div>
<div class="r" style="left:212.00px;top:386.50px;width:25.00px;height:1.00px;background:#3c3c3c;"></div>
<div class="r" style="left:212.00px;top:306.50px;width:25.00px;height:1.00px;background:#3c3c3c;"></div>
<div class="r" style="left:212.00px;top:384.50px;width:25.00px;height:1.00px;background:#4a4a4a;"></div>
<div class="r" style="left:265.20px;top:307.00px;width:35.00px;height:80.00px;background:#000;"></div>
<div class="r" style="left:265.2px;top:307px;width:34.2px;height:80px;overflow:hidden"><div class="t" style="left:-48.30px;top:0.08px;font-size:13.33px;line-height:17px;color:#fff;font-weight:bold;letter-spacing:-0.493px;">REKENING GIRO</div><div class="t" style="left:-75.20px;top:16.58px;font-size:13.33px;line-height:17px;color:#fff;font-weight:bold;letter-spacing:-0.462px;">CV SINAR DUTA LASER</div></div>
<div class="t" style="left:244.20px;top:339.08px;font-size:13.33px;line-height:17px;color:#111;letter-spacing:-0.841px;">No</div>
<div class="r" style="left:237.00px;top:355.00px;width:93.00px;height:1.00px;background:#a8a8a8;"></div>
<div class="r" style="left:285.0px;top:371.7px;width:14.5px;height:14.5px;background:#fdfdfd;border:1px solid #cfcfcf;box-sizing:border-box;overflow:hidden"><div class="r" style="left:3.6px;top:5px;width:0;height:0;border-left:2.8px solid transparent;border-right:2.8px solid transparent;border-top:3px solid #666"></div></div>
<div class="r" style="left:368.20px;top:323.00px;width:794.00px;height:64.00px;background:#a9d08e;"></div>
<div class="r" style="left:368.20px;top:355.50px;width:794.00px;height:1.00px;background:#7fae62;"></div>
<div class="t" style="left:729.20px;top:340.03px;font-size:12.60px;line-height:16px;color:#111;font-weight:bold;letter-spacing:-0.212px;">KETERANGAN</div>
<div class="t" style="left:946.00px;top:340.03px;font-size:12.60px;line-height:16px;color:#111;font-weight:bold;letter-spacing:0.077px;">DB (Masuk)</div>
<div class="t" style="left:1075.30px;top:340.03px;font-size:12.60px;line-height:16px;color:#111;font-weight:bold;letter-spacing:0.269px;">CR (Keluar)</div>
<div class="t" style="left:1037.60px;top:357.43px;font-size:12.60px;line-height:16px;color:#111;">-</div>
<svg class="r" style="left:914.80px;top:356.00px;" width="7" height="6" viewBox="0 0 7 6"><path d="M0 0 H6.5 L0 5.5 Z" fill="#1e7a1e"/></svg>
<svg class="r" style="left:1048.00px;top:356.00px;" width="7" height="6" viewBox="0 0 7 6"><path d="M0 0 H6.5 L0 5.5 Z" fill="#1e7a1e"/></svg>
<div class="r" style="left:898.8px;top:371.7px;width:14.5px;height:14.5px;background:#fdfdfd;border:1px solid #cfcfcf;box-sizing:border-box;overflow:hidden"><div class="r" style="left:3.6px;top:5px;width:0;height:0;border-left:2.8px solid transparent;border-right:2.8px solid transparent;border-top:3px solid #666"></div></div>
<div class="r" style="left:1031.8px;top:371.7px;width:14.5px;height:14.5px;background:#fdfdfd;border:1px solid #cfcfcf;box-sizing:border-box;overflow:hidden"><div class="r" style="left:3.6px;top:5px;width:0;height:0;border-left:2.8px solid transparent;border-right:2.8px solid transparent;border-top:3px solid #666"></div></div>
<div class="r" style="left:1158.5px;top:371.7px;width:3.5px;height:14.5px;background:#fdfdfd;border:1px solid #cfcfcf;border-right:0;box-sizing:border-box"></div>
<div class="r" style="left:212.00px;top:387.00px;width:25.00px;height:17.00px;background:#0c1512;"></div>
<div class="t" style="left:214.40px;top:388.63px;font-size:12.60px;line-height:16px;color:#8fd9cd;font-weight:bold;letter-spacing:-0.212px;">134</div>
<div class="r" style="left:212.00px;top:403.50px;width:25.00px;height:1.00px;background:#3a403e;"></div>
<div class="r" style="left:300.20px;top:387.00px;width:68.00px;height:17.00px;background:#fce4d6;"></div>
<div class="t" style="left:242.22px;top:387.88px;font-size:13.33px;line-height:17px;color:#111;letter-spacing:-0.645px;">128</div>
<div class="t" style="left:283.23px;top:387.88px;font-size:13.33px;line-height:17px;color:#111;letter-spacing:-0.860px;">12</div>
<div class="t" style="left:303.60px;top:387.88px;font-size:13.33px;line-height:17px;color:#111;letter-spacing:-0.509px;">Desember</div>
<div class="r" style="left:630.5px;top:387.0px;width:283.2px;height:17px;overflow:hidden"><div class="t" style="left:2.80px;top:0.88px;font-size:13.33px;line-height:17px;color:#111;letter-spacing:-0.151px;">Akrilik 3Mm 1 Lbrwilan Agustine</div></div>
<div class="t" style="left:1023.16px;top:387.88px;font-size:13.33px;line-height:17px;color:#111;">-</div>
<div class="r" style="left:1048px;top:387.0px;width:112.9px;height:17px;overflow:hidden"><div class="t" style="left:55.75px;top:0.88px;font-size:13.33px;line-height:17px;color:#111;letter-spacing:-0.297px;">400.000,00</div></div>
<div class="r" style="left:237.00px;top:403.50px;width:677.00px;height:1.00px;background:#e1e1e1;"></div>
<div class="r" style="left:212.00px;top:404.00px;width:25.00px;height:17.00px;background:#0c1512;"></div>
<div class="t" style="left:214.40px;top:405.63px;font-size:12.60px;line-height:16px;color:#8fd9cd;font-weight:bold;letter-spacing:-0.212px;">135</div>
<div class="r" style="left:212.00px;top:420.50px;width:25.00px;height:1.00px;background:#3a403e;"></div>
<div class="r" style="left:300.20px;top:404.00px;width:68.00px;height:17.00px;background:#fce4d6;"></div>
<div class="t" style="left:242.22px;top:404.88px;font-size:13.33px;line-height:17px;color:#111;letter-spacing:-0.645px;">129</div>
<div class="t" style="left:283.23px;top:404.88px;font-size:13.33px;line-height:17px;color:#111;letter-spacing:-0.860px;">12</div>
<div class="t" style="left:303.60px;top:404.88px;font-size:13.33px;line-height:17px;color:#111;letter-spacing:-0.509px;">Desember</div>
<div class="r" style="left:630.5px;top:404.0px;width:283.2px;height:17px;overflow:hidden"><div class="t" style="left:2.80px;top:0.88px;font-size:13.33px;line-height:17px;color:#111;letter-spacing:-0.162px;">Refund Akrilik 3Mm Mohamad Risqi Sisw</div></div>
<div class="t" style="left:976.75px;top:404.88px;font-size:13.33px;line-height:17px;color:#111;letter-spacing:-0.297px;">400.000,00</div>
<div class="t" style="left:1149.96px;top:404.88px;font-size:13.33px;line-height:17px;color:#111;">-</div>
<div class="r" style="left:237.00px;top:420.50px;width:677.00px;height:1.00px;background:#e1e1e1;"></div>
<div class="r" style="left:212.00px;top:421.00px;width:25.00px;height:17.00px;background:#0c1512;"></div>
<div class="t" style="left:214.40px;top:422.63px;font-size:12.60px;line-height:16px;color:#8fd9cd;font-weight:bold;letter-spacing:-0.212px;">136</div>
<div class="r" style="left:212.00px;top:437.50px;width:25.00px;height:1.00px;background:#3a403e;"></div>
<div class="r" style="left:300.20px;top:421.00px;width:68.00px;height:17.00px;background:#fce4d6;"></div>
<div class="t" style="left:242.22px;top:421.88px;font-size:13.33px;line-height:17px;color:#111;letter-spacing:-0.645px;">130</div>
<div class="t" style="left:283.23px;top:421.88px;font-size:13.33px;line-height:17px;color:#111;letter-spacing:-0.860px;">12</div>
<div class="t" style="left:303.60px;top:421.88px;font-size:13.33px;line-height:17px;color:#111;letter-spacing:-0.509px;">Desember</div>
<div class="r" style="left:630.5px;top:421.0px;width:283.2px;height:17px;overflow:hidden"><div class="t" style="left:2.80px;top:0.88px;font-size:13.33px;line-height:17px;color:#111;letter-spacing:-0.164px;">Nmpng Tarik Tunai Untuk Uang Cash Mohamad Risqi Sisw</div></div>
<div class="t" style="left:1023.16px;top:421.88px;font-size:13.33px;line-height:17px;color:#111;">-</div>
<div class="r" style="left:1048px;top:421.0px;width:112.9px;height:17px;overflow:hidden"><div class="t" style="left:45.08px;top:0.88px;font-size:13.33px;line-height:17px;color:#111;letter-spacing:-0.283px;">2.000.000,00</div></div>
<div class="r" style="left:237.00px;top:437.50px;width:677.00px;height:1.00px;background:#e1e1e1;"></div>
<div class="r" style="left:212.00px;top:438.00px;width:25.00px;height:17.00px;background:#0c1512;"></div>
<div class="t" style="left:214.40px;top:439.63px;font-size:12.60px;line-height:16px;color:#8fd9cd;font-weight:bold;letter-spacing:-0.212px;">137</div>
<div class="r" style="left:212.00px;top:454.50px;width:25.00px;height:1.00px;background:#3a403e;"></div>
<div class="r" style="left:300.20px;top:438.00px;width:68.00px;height:17.00px;background:#fce4d6;"></div>
<div class="t" style="left:242.22px;top:438.88px;font-size:13.33px;line-height:17px;color:#111;letter-spacing:-0.645px;">131</div>
<div class="t" style="left:283.23px;top:438.88px;font-size:13.33px;line-height:17px;color:#111;letter-spacing:-0.860px;">12</div>
<div class="t" style="left:303.60px;top:438.88px;font-size:13.33px;line-height:17px;color:#111;letter-spacing:-0.509px;">Desember</div>
<div class="r" style="left:630.5px;top:438.0px;width:283.2px;height:17px;overflow:hidden"><div class="t" style="left:2.80px;top:0.88px;font-size:13.33px;line-height:17px;color:#111;letter-spacing:-0.165px;">Medali 45 Pcs Achmad Junaedi</div></div>
<div class="t" style="left:966.08px;top:438.88px;font-size:13.33px;line-height:17px;color:#111;letter-spacing:-0.283px;">1.035.000,00</div>
<div class="t" style="left:1149.96px;top:438.88px;font-size:13.33px;line-height:17px;color:#111;">-</div>
<div class="r" style="left:237.00px;top:454.50px;width:677.00px;height:1.00px;background:#e1e1e1;"></div>
<div class="r" style="left:212.00px;top:455.00px;width:25.00px;height:17.00px;background:#0c1512;"></div>
<div class="t" style="left:214.40px;top:456.63px;font-size:12.60px;line-height:16px;color:#8fd9cd;font-weight:bold;letter-spacing:-0.212px;">138</div>
<div class="r" style="left:212.00px;top:471.50px;width:25.00px;height:1.00px;background:#3a403e;"></div>
<div class="r" style="left:300.20px;top:455.00px;width:68.00px;height:17.00px;background:#fce4d6;"></div>
<div class="t" style="left:242.22px;top:455.88px;font-size:13.33px;line-height:17px;color:#111;letter-spacing:-0.645px;">132</div>
<div class="t" style="left:283.23px;top:455.88px;font-size:13.33px;line-height:17px;color:#111;letter-spacing:-0.860px;">12</div>
<div class="t" style="left:303.60px;top:455.88px;font-size:13.33px;line-height:17px;color:#111;letter-spacing:-0.509px;">Desember</div>
<div class="r" style="left:630.5px;top:455.0px;width:283.2px;height:17px;overflow:hidden"><div class="t" style="left:2.80px;top:0.88px;font-size:13.33px;line-height:17px;color:#111;letter-spacing:-0.150px;">Fanbelt Mesin Akrilikedi Suryana</div></div>
<div class="t" style="left:1023.16px;top:455.88px;font-size:13.33px;line-height:17px;color:#111;">-</div>
<div class="r" style="left:1048px;top:455.0px;width:112.9px;height:17px;overflow:hidden"><div class="t" style="left:55.75px;top:0.88px;font-size:13.33px;line-height:17px;color:#111;letter-spacing:-0.297px;">250.000,00</div></div>
<div class="r" style="left:237.00px;top:471.50px;width:677.00px;height:1.00px;background:#e1e1e1;"></div>
<div class="r" style="left:212.00px;top:472.00px;width:25.00px;height:17.00px;background:#0c1512;"></div>
<div class="t" style="left:214.40px;top:473.63px;font-size:12.60px;line-height:16px;color:#8fd9cd;font-weight:bold;letter-spacing:-0.212px;">139</div>
<div class="r" style="left:212.00px;top:488.50px;width:25.00px;height:1.00px;background:#3a403e;"></div>
<div class="r" style="left:300.20px;top:472.00px;width:68.00px;height:17.00px;background:#fce4d6;"></div>
<div class="t" style="left:242.22px;top:472.88px;font-size:13.33px;line-height:17px;color:#111;letter-spacing:-0.645px;">133</div>
<div class="t" style="left:283.23px;top:472.88px;font-size:13.33px;line-height:17px;color:#111;letter-spacing:-0.860px;">12</div>
<div class="t" style="left:303.60px;top:472.88px;font-size:13.33px;line-height:17px;color:#111;letter-spacing:-0.509px;">Desember</div>
<div class="r" style="left:630.5px;top:472.0px;width:283.2px;height:17px;overflow:hidden"><div class="t" style="left:2.80px;top:0.88px;font-size:13.33px;line-height:17px;color:#111;letter-spacing:-0.165px;">Suryadi Walujo</div></div>
<div class="t" style="left:966.08px;top:472.88px;font-size:13.33px;line-height:17px;color:#111;letter-spacing:-0.283px;">8.000.000,00</div>
<div class="t" style="left:1149.96px;top:472.88px;font-size:13.33px;line-height:17px;color:#111;">-</div>
<div class="r" style="left:237.00px;top:488.50px;width:677.00px;height:1.00px;background:#e1e1e1;"></div>
<div class="r" style="left:212.00px;top:489.00px;width:25.00px;height:17.00px;background:#0c1512;"></div>
<div class="t" style="left:214.40px;top:490.63px;font-size:12.60px;line-height:16px;color:#8fd9cd;font-weight:bold;letter-spacing:-0.212px;">140</div>
<div class="r" style="left:212.00px;top:505.50px;width:25.00px;height:1.00px;background:#3a403e;"></div>
<div class="r" style="left:300.20px;top:489.00px;width:68.00px;height:17.00px;background:#fce4d6;"></div>
<div class="t" style="left:242.22px;top:489.88px;font-size:13.33px;line-height:17px;color:#111;letter-spacing:-0.645px;">134</div>
<div class="t" style="left:283.23px;top:489.88px;font-size:13.33px;line-height:17px;color:#111;letter-spacing:-0.860px;">12</div>
<div class="t" style="left:303.60px;top:489.88px;font-size:13.33px;line-height:17px;color:#111;letter-spacing:-0.509px;">Desember</div>
<div class="r" style="left:630.5px;top:489.0px;width:283.2px;height:17px;overflow:hidden"><div class="t" style="left:2.80px;top:0.88px;font-size:13.33px;line-height:17px;color:#111;letter-spacing:-0.167px;">Salah Tfmohamad Risqi Sisw</div></div>
<div class="t" style="left:1023.16px;top:489.88px;font-size:13.33px;line-height:17px;color:#111;">-</div>
<div class="r" style="left:1048px;top:489.0px;width:112.9px;height:17px;overflow:hidden"><div class="t" style="left:45.08px;top:0.88px;font-size:13.33px;line-height:17px;color:#111;letter-spacing:-0.283px;">8.000.000,00</div></div>
<div class="r" style="left:237.00px;top:505.50px;width:677.00px;height:1.00px;background:#e1e1e1;"></div>
<div class="r" style="left:212.00px;top:506.00px;width:25.00px;height:17.00px;background:#0c1512;"></div>
<div class="t" style="left:214.40px;top:507.63px;font-size:12.60px;line-height:16px;color:#8fd9cd;font-weight:bold;letter-spacing:-0.212px;">141</div>
<div class="r" style="left:212.00px;top:522.50px;width:25.00px;height:1.00px;background:#3a403e;"></div>
<div class="r" style="left:300.20px;top:506.00px;width:68.00px;height:17.00px;background:#fce4d6;"></div>
<div class="t" style="left:242.22px;top:506.88px;font-size:13.33px;line-height:17px;color:#111;letter-spacing:-0.645px;">135</div>
<div class="t" style="left:283.23px;top:506.88px;font-size:13.33px;line-height:17px;color:#111;letter-spacing:-0.860px;">12</div>
<div class="t" style="left:303.60px;top:506.88px;font-size:13.33px;line-height:17px;color:#111;letter-spacing:-0.509px;">Desember</div>
<div class="r" style="left:630.5px;top:506.0px;width:283.2px;height:17px;overflow:hidden"><div class="t" style="left:2.80px;top:0.88px;font-size:13.33px;line-height:17px;color:#111;letter-spacing:-0.164px;">Nmpang Tarik Tunai Mohamad Risqi Sisw</div></div>
<div class="t" style="left:1023.16px;top:506.88px;font-size:13.33px;line-height:17px;color:#111;">-</div>
<div class="r" style="left:1048px;top:506.0px;width:112.9px;height:17px;overflow:hidden"><div class="t" style="left:45.08px;top:0.88px;font-size:13.33px;line-height:17px;color:#111;letter-spacing:-0.283px;">3.000.000,00</div></div>
<div class="r" style="left:237.00px;top:522.50px;width:677.00px;height:1.00px;background:#e1e1e1;"></div>
<div class="r" style="left:212.00px;top:523.00px;width:25.00px;height:17.00px;background:#0c1512;"></div>
<div class="t" style="left:214.40px;top:524.63px;font-size:12.60px;line-height:16px;color:#8fd9cd;font-weight:bold;letter-spacing:-0.212px;">142</div>
<div class="r" style="left:212.00px;top:539.50px;width:25.00px;height:1.00px;background:#3a403e;"></div>
<div class="r" style="left:300.20px;top:523.00px;width:68.00px;height:17.00px;background:#fce4d6;"></div>
<div class="t" style="left:242.22px;top:523.88px;font-size:13.33px;line-height:17px;color:#111;letter-spacing:-0.645px;">136</div>
<div class="t" style="left:283.23px;top:523.88px;font-size:13.33px;line-height:17px;color:#111;letter-spacing:-0.860px;">12</div>
<div class="t" style="left:303.60px;top:523.88px;font-size:13.33px;line-height:17px;color:#111;letter-spacing:-0.509px;">Desember</div>
<div class="r" style="left:630.5px;top:523.0px;width:283.2px;height:17px;overflow:hidden"><div class="t" style="left:2.80px;top:0.88px;font-size:13.33px;line-height:17px;color:#111;letter-spacing:-0.207px;">Marsono</div></div>
<div class="t" style="left:976.75px;top:523.88px;font-size:13.33px;line-height:17px;color:#111;letter-spacing:-0.297px;">250.000,00</div>
<div class="t" style="left:1149.96px;top:523.88px;font-size:13.33px;line-height:17px;color:#111;">-</div>
<div class="r" style="left:237.00px;top:539.50px;width:677.00px;height:1.00px;background:#e1e1e1;"></div>
<div class="r" style="left:212.00px;top:540.00px;width:25.00px;height:17.00px;background:#0c1512;"></div>
<div class="t" style="left:214.40px;top:541.63px;font-size:12.60px;line-height:16px;color:#8fd9cd;font-weight:bold;letter-spacing:-0.212px;">143</div>
<div class="r" style="left:212.00px;top:556.50px;width:25.00px;height:1.00px;background:#3a403e;"></div>
<div class="r" style="left:300.20px;top:540.00px;width:68.00px;height:17.00px;background:#fce4d6;"></div>
<div class="t" style="left:242.22px;top:540.88px;font-size:13.33px;line-height:17px;color:#111;letter-spacing:-0.645px;">137</div>
<div class="t" style="left:283.23px;top:540.88px;font-size:13.33px;line-height:17px;color:#111;letter-spacing:-0.860px;">12</div>
<div class="t" style="left:303.60px;top:540.88px;font-size:13.33px;line-height:17px;color:#111;letter-spacing:-0.509px;">Desember</div>
<div class="r" style="left:630.5px;top:540.0px;width:283.2px;height:17px;overflow:hidden"><div class="t" style="left:2.80px;top:0.88px;font-size:13.33px;line-height:17px;color:#111;letter-spacing:-0.150px;">Cicil Notatata Widiana</div></div>
<div class="t" style="left:966.08px;top:540.88px;font-size:13.33px;line-height:17px;color:#111;letter-spacing:-0.283px;">5.000.000,00</div>
<div class="t" style="left:1149.96px;top:540.88px;font-size:13.33px;line-height:17px;color:#111;">-</div>
<div class="r" style="left:237.00px;top:556.50px;width:677.00px;height:1.00px;background:#e1e1e1;"></div>
<div class="r" style="left:212.00px;top:557.00px;width:25.00px;height:17.00px;background:#0c1512;"></div>
<div class="t" style="left:214.40px;top:558.63px;font-size:12.60px;line-height:16px;color:#8fd9cd;font-weight:bold;letter-spacing:-0.212px;">144</div>
<div class="r" style="left:212.00px;top:573.50px;width:25.00px;height:1.00px;background:#3a403e;"></div>
<div class="r" style="left:300.20px;top:557.00px;width:68.00px;height:17.00px;background:#fce4d6;"></div>
<div class="t" style="left:242.22px;top:557.88px;font-size:13.33px;line-height:17px;color:#111;letter-spacing:-0.645px;">138</div>
<div class="t" style="left:283.23px;top:557.88px;font-size:13.33px;line-height:17px;color:#111;letter-spacing:-0.860px;">12</div>
<div class="t" style="left:303.60px;top:557.88px;font-size:13.33px;line-height:17px;color:#111;letter-spacing:-0.509px;">Desember</div>
<div class="t" style="left:371.30px;top:557.88px;font-size:13.33px;line-height:17px;color:#111;letter-spacing:-0.476px;">SDL-BM1225-006</div>
<div class="t" style="left:485.20px;top:557.88px;font-size:13.33px;line-height:17px;color:#111;letter-spacing:-0.153px;">ayat silang</div>
<div class="t" style="left:555.80px;top:557.88px;font-size:13.33px;line-height:17px;color:#111;letter-spacing:-0.430px;">08/12/2025</div>
<div class="r" style="left:630.5px;top:557.0px;width:283.2px;height:17px;overflow:hidden"><div class="t" style="left:2.80px;top:0.88px;font-size:13.33px;line-height:17px;color:#111;letter-spacing:-0.165px;">Suryadi Walujo</div></div>
<div class="t" style="left:966.08px;top:557.88px;font-size:13.33px;line-height:17px;color:#111;letter-spacing:-0.283px;">4.000.000,00</div>
<div class="t" style="left:1149.96px;top:557.88px;font-size:13.33px;line-height:17px;color:#111;">-</div>
<div class="r" style="left:237.00px;top:573.50px;width:677.00px;height:1.00px;background:#e1e1e1;"></div>
<div class="r" style="left:212.00px;top:574.00px;width:25.00px;height:17.00px;background:#0c1512;"></div>
<div class="t" style="left:214.40px;top:575.63px;font-size:12.60px;line-height:16px;color:#8fd9cd;font-weight:bold;letter-spacing:-0.212px;">145</div>
<div class="r" style="left:212.00px;top:590.50px;width:25.00px;height:1.00px;background:#3a403e;"></div>
<div class="r" style="left:300.20px;top:574.00px;width:68.00px;height:17.00px;background:#fce4d6;"></div>
<div class="t" style="left:242.22px;top:574.88px;font-size:13.33px;line-height:17px;color:#111;letter-spacing:-0.645px;">139</div>
<div class="t" style="left:283.23px;top:574.88px;font-size:13.33px;line-height:17px;color:#111;letter-spacing:-0.860px;">12</div>
<div class="t" style="left:303.60px;top:574.88px;font-size:13.33px;line-height:17px;color:#111;letter-spacing:-0.509px;">Desember</div>
<div class="t" style="left:371.30px;top:574.88px;font-size:13.33px;line-height:17px;color:#111;letter-spacing:-0.466px;">SDL-BK1225-006</div>
<div class="t" style="left:485.20px;top:574.88px;font-size:13.33px;line-height:17px;color:#111;letter-spacing:-0.153px;">ayat silang</div>
<div class="t" style="left:555.80px;top:574.88px;font-size:13.33px;line-height:17px;color:#111;letter-spacing:-0.430px;">08/12/2025</div>
<div class="r" style="left:630.5px;top:574.0px;width:283.2px;height:17px;overflow:hidden"><div class="t" style="left:2.80px;top:0.88px;font-size:13.33px;line-height:17px;color:#111;letter-spacing:-0.162px;">Pak Surya Salah Tf Mohamad Risqi Sisw</div></div>
<div class="t" style="left:1023.16px;top:574.88px;font-size:13.33px;line-height:17px;color:#111;">-</div>
<div class="r" style="left:1048px;top:574.0px;width:112.9px;height:17px;overflow:hidden"><div class="t" style="left:45.08px;top:0.88px;font-size:13.33px;line-height:17px;color:#111;letter-spacing:-0.283px;">4.000.000,00</div></div>
<div class="r" style="left:237.00px;top:590.50px;width:677.00px;height:1.00px;background:#e1e1e1;"></div>
<div class="r" style="left:212.00px;top:591.00px;width:25.00px;height:17.00px;background:#0c1512;"></div>
<div class="t" style="left:214.40px;top:592.63px;font-size:12.60px;line-height:16px;color:#8fd9cd;font-weight:bold;letter-spacing:-0.212px;">146</div>
<div class="r" style="left:212.00px;top:607.50px;width:25.00px;height:1.00px;background:#3a403e;"></div>
<div class="r" style="left:300.20px;top:591.00px;width:68.00px;height:17.00px;background:#fce4d6;"></div>
<div class="t" style="left:242.22px;top:591.88px;font-size:13.33px;line-height:17px;color:#111;letter-spacing:-0.645px;">140</div>
<div class="t" style="left:283.23px;top:591.88px;font-size:13.33px;line-height:17px;color:#111;letter-spacing:-0.860px;">12</div>
<div class="t" style="left:303.60px;top:591.88px;font-size:13.33px;line-height:17px;color:#111;letter-spacing:-0.509px;">Desember</div>
<div class="t" style="left:371.30px;top:591.88px;font-size:13.33px;line-height:17px;color:#111;letter-spacing:-0.476px;">SDL-BM1225-007</div>
<div class="t" style="left:485.20px;top:591.88px;font-size:13.33px;line-height:17px;color:#111;letter-spacing:-0.466px;">4000.01</div>
<div class="t" style="left:555.80px;top:591.88px;font-size:13.33px;line-height:17px;color:#111;letter-spacing:-0.430px;">09/12/2025</div>
<div class="r" style="left:630.5px;top:591.0px;width:283.2px;height:17px;overflow:hidden"><div class="t" style="left:2.80px;top:0.88px;font-size:13.33px;line-height:17px;color:#111;letter-spacing:-0.160px;">Laser Plate Zemi D Entaldony Suyono</div></div>
<div class="t" style="left:976.75px;top:591.88px;font-size:13.33px;line-height:17px;color:#111;letter-spacing:-0.297px;">800.000,00</div>
<div class="t" style="left:1149.96px;top:591.88px;font-size:13.33px;line-height:17px;color:#111;">-</div>
<div class="r" style="left:237.00px;top:607.50px;width:677.00px;height:1.00px;background:#e1e1e1;"></div>
<div class="r" style="left:212.00px;top:608.00px;width:25.00px;height:17.00px;background:#0c1512;"></div>
<div class="t" style="left:214.40px;top:609.63px;font-size:12.60px;line-height:16px;color:#8fd9cd;font-weight:bold;letter-spacing:-0.212px;">147</div>
<div class="r" style="left:212.00px;top:624.50px;width:25.00px;height:1.00px;background:#3a403e;"></div>
<div class="r" style="left:300.20px;top:608.00px;width:68.00px;height:17.00px;background:#fce4d6;"></div>
<div class="t" style="left:242.22px;top:608.88px;font-size:13.33px;line-height:17px;color:#111;letter-spacing:-0.645px;">141</div>
<div class="t" style="left:283.23px;top:608.88px;font-size:13.33px;line-height:17px;color:#111;letter-spacing:-0.860px;">12</div>
<div class="t" style="left:303.60px;top:608.88px;font-size:13.33px;line-height:17px;color:#111;letter-spacing:-0.509px;">Desember</div>
<div class="t" style="left:371.30px;top:608.88px;font-size:13.33px;line-height:17px;color:#111;letter-spacing:-0.466px;">SDL-BK1225-007</div>
<div class="t" style="left:485.20px;top:608.88px;font-size:13.33px;line-height:17px;color:#111;letter-spacing:-0.153px;">ayat silang</div>
<div class="t" style="left:555.80px;top:608.88px;font-size:13.33px;line-height:17px;color:#111;letter-spacing:-0.430px;">09/12/2025</div>
<div class="r" style="left:630.5px;top:608.0px;width:283.2px;height:17px;overflow:hidden"><div class="t" style="left:2.80px;top:0.88px;font-size:13.33px;line-height:17px;color:#111;letter-spacing:-0.164px;">Nmpng Tarik Tunai Mohamad Risqi Sisw</div></div>
<div class="t" style="left:1023.16px;top:608.88px;font-size:13.33px;line-height:17px;color:#111;">-</div>
<div class="r" style="left:1048px;top:608.0px;width:112.9px;height:17px;overflow:hidden"><div class="t" style="left:45.08px;top:0.88px;font-size:13.33px;line-height:17px;color:#111;letter-spacing:-0.283px;">2.000.000,00</div></div>
<div class="r" style="left:237.00px;top:624.50px;width:677.00px;height:1.00px;background:#e1e1e1;"></div>
<div class="r" style="left:212.00px;top:625.00px;width:25.00px;height:17.00px;background:#0c1512;"></div>
<div class="t" style="left:214.40px;top:626.63px;font-size:12.60px;line-height:16px;color:#8fd9cd;font-weight:bold;letter-spacing:-0.212px;">148</div>
<div class="r" style="left:212.00px;top:641.50px;width:25.00px;height:1.00px;background:#3a403e;"></div>
<div class="r" style="left:300.20px;top:625.00px;width:68.00px;height:17.00px;background:#fce4d6;"></div>
<div class="t" style="left:242.22px;top:625.88px;font-size:13.33px;line-height:17px;color:#111;letter-spacing:-0.645px;">142</div>
<div class="t" style="left:283.23px;top:625.88px;font-size:13.33px;line-height:17px;color:#111;letter-spacing:-0.860px;">12</div>
<div class="t" style="left:303.60px;top:625.88px;font-size:13.33px;line-height:17px;color:#111;letter-spacing:-0.509px;">Desember</div>
<div class="t" style="left:371.30px;top:625.88px;font-size:13.33px;line-height:17px;color:#111;letter-spacing:-0.466px;">SDL-BK1225-008</div>
<div class="t" style="left:485.20px;top:625.88px;font-size:13.33px;line-height:17px;color:#111;letter-spacing:-0.466px;">6203.09</div>
<div class="t" style="left:555.80px;top:625.88px;font-size:13.33px;line-height:17px;color:#111;letter-spacing:-0.430px;">10/12/2025</div>
<div class="r" style="left:630.5px;top:625.0px;width:283.2px;height:17px;overflow:hidden"><div class="t" style="left:2.80px;top:0.88px;font-size:13.33px;line-height:17px;color:#111;letter-spacing:-0.168px;">PPh Final november 2025</div></div>
<div class="t" style="left:1023.16px;top:625.88px;font-size:13.33px;line-height:17px;color:#111;">-</div>
<div class="r" style="left:1048px;top:625.0px;width:112.9px;height:17px;overflow:hidden"><div class="t" style="left:55.75px;top:0.88px;font-size:13.33px;line-height:17px;color:#111;letter-spacing:-0.297px;">339.445,00</div></div>
<div class="r" style="left:237.00px;top:641.50px;width:677.00px;height:1.00px;background:#e1e1e1;"></div>
<div class="r" style="left:212.00px;top:642.00px;width:25.00px;height:17.00px;background:#0c1512;"></div>
<div class="t" style="left:214.40px;top:643.63px;font-size:12.60px;line-height:16px;color:#8fd9cd;font-weight:bold;letter-spacing:-0.212px;">149</div>
<div class="r" style="left:212.00px;top:658.50px;width:25.00px;height:1.00px;background:#3a403e;"></div>
<div class="r" style="left:300.20px;top:642.00px;width:68.00px;height:17.00px;background:#fce4d6;"></div>
<div class="t" style="left:242.22px;top:642.88px;font-size:13.33px;line-height:17px;color:#111;letter-spacing:-0.645px;">143</div>
<div class="t" style="left:283.23px;top:642.88px;font-size:13.33px;line-height:17px;color:#111;letter-spacing:-0.860px;">12</div>
<div class="t" style="left:303.60px;top:642.88px;font-size:13.33px;line-height:17px;color:#111;letter-spacing:-0.509px;">Desember</div>
<div class="t" style="left:371.30px;top:642.88px;font-size:13.33px;line-height:17px;color:#111;letter-spacing:-0.466px;">SDL-BK1225-009</div>
<div class="t" style="left:485.20px;top:642.88px;font-size:13.33px;line-height:17px;color:#111;letter-spacing:-0.466px;">6203.04</div>
<div class="t" style="left:555.80px;top:642.88px;font-size:13.33px;line-height:17px;color:#111;letter-spacing:-0.430px;">10/12/2025</div>
<div class="r" style="left:630.5px;top:642.0px;width:283.2px;height:17px;overflow:hidden"><div class="t" style="left:2.80px;top:0.88px;font-size:13.33px;line-height:17px;color:#111;letter-spacing:-0.163px;">Byr Konsultan kkp Anwar Dan Reka</div></div>
<div class="t" style="left:1023.16px;top:642.88px;font-size:13.33px;line-height:17px;color:#111;">-</div>
<div class="r" style="left:1048px;top:642.0px;width:112.9px;height:17px;overflow:hidden"><div class="t" style="left:45.08px;top:0.88px;font-size:13.33px;line-height:17px;color:#111;letter-spacing:-0.283px;">1.000.000,00</div></div>
<div class="r" style="left:237.00px;top:658.50px;width:677.00px;height:1.00px;background:#e1e1e1;"></div>
<div class="r" style="left:212.00px;top:659.00px;width:25.00px;height:17.00px;background:#0c1512;"></div>
<div class="t" style="left:214.40px;top:660.63px;font-size:12.60px;line-height:16px;color:#8fd9cd;font-weight:bold;letter-spacing:-0.212px;">150</div>
<div class="r" style="left:212.00px;top:675.50px;width:25.00px;height:1.00px;background:#3a403e;"></div>
<div class="r" style="left:300.20px;top:659.00px;width:68.00px;height:17.00px;background:#fce4d6;"></div>
<div class="t" style="left:242.22px;top:659.88px;font-size:13.33px;line-height:17px;color:#111;letter-spacing:-0.645px;">144</div>
<div class="t" style="left:283.23px;top:659.88px;font-size:13.33px;line-height:17px;color:#111;letter-spacing:-0.860px;">12</div>
<div class="t" style="left:303.60px;top:659.88px;font-size:13.33px;line-height:17px;color:#111;letter-spacing:-0.509px;">Desember</div>
<div class="t" style="left:371.30px;top:659.88px;font-size:13.33px;line-height:17px;color:#111;letter-spacing:-0.476px;">SDL-BM1225-008</div>
<div class="t" style="left:485.20px;top:659.88px;font-size:13.33px;line-height:17px;color:#111;letter-spacing:-0.466px;">4000.01</div>
<div class="t" style="left:555.80px;top:659.88px;font-size:13.33px;line-height:17px;color:#111;letter-spacing:-0.430px;">10/12/2025</div>
<div class="r" style="left:630.5px;top:659.0px;width:283.2px;height:17px;overflow:hidden"><div class="t" style="left:2.80px;top:0.88px;font-size:13.33px;line-height:17px;color:#111;letter-spacing:-0.165px;">Suryadi Walujo</div></div>
<div class="t" style="left:966.08px;top:659.88px;font-size:13.33px;line-height:17px;color:#111;letter-spacing:-0.283px;">7.000.000,00</div>
<div class="t" style="left:1149.96px;top:659.88px;font-size:13.33px;line-height:17px;color:#111;">-</div>
<div class="r" style="left:237.00px;top:675.50px;width:677.00px;height:1.00px;background:#e1e1e1;"></div>
<div class="r" style="left:212.00px;top:676.00px;width:25.00px;height:17.00px;background:#0c1512;"></div>
<div class="t" style="left:214.40px;top:677.63px;font-size:12.60px;line-height:16px;color:#8fd9cd;font-weight:bold;letter-spacing:-0.212px;">151</div>
<div class="r" style="left:212.00px;top:692.50px;width:25.00px;height:1.00px;background:#3a403e;"></div>
<div class="r" style="left:300.20px;top:676.00px;width:68.00px;height:17.00px;background:#fce4d6;"></div>
<div class="t" style="left:242.22px;top:676.88px;font-size:13.33px;line-height:17px;color:#111;letter-spacing:-0.645px;">145</div>
<div class="t" style="left:283.23px;top:676.88px;font-size:13.33px;line-height:17px;color:#111;letter-spacing:-0.860px;">12</div>
<div class="t" style="left:303.60px;top:676.88px;font-size:13.33px;line-height:17px;color:#111;letter-spacing:-0.509px;">Desember</div>
<div class="t" style="left:371.30px;top:676.88px;font-size:13.33px;line-height:17px;color:#111;letter-spacing:-0.466px;">SDL-BK1225-010</div>
<svg class="r" style="left:483.00px;top:676.00px;" width="5" height="5" viewBox="0 0 5 5"><path d="M0 0 H4.5 L0 4.5 Z" fill="#1e7a1e"/></svg>
<div class="t" style="left:485.20px;top:676.88px;font-size:13.33px;line-height:17px;color:#111;letter-spacing:-0.573px;">5100</div>
<div class="t" style="left:555.80px;top:676.88px;font-size:13.33px;line-height:17px;color:#111;letter-spacing:-0.424px;">11/12/2025</div>
<div class="r" style="left:630.5px;top:676.0px;width:283.2px;height:17px;overflow:hidden"><div class="t" style="left:2.80px;top:0.88px;font-size:13.33px;line-height:17px;color:#111;letter-spacing:-0.166px;">Galvanil 1Mm 1Lbragus Susanto</div></div>
<div class="t" style="left:1023.16px;top:676.88px;font-size:13.33px;line-height:17px;color:#111;">-</div>
<div class="r" style="left:1048px;top:676.0px;width:112.9px;height:17px;overflow:hidden"><div class="t" style="left:55.75px;top:0.88px;font-size:13.33px;line-height:17px;color:#111;letter-spacing:-0.297px;">440.000,00</div></div>
<div class="r" style="left:237.00px;top:692.50px;width:677.00px;height:1.00px;background:#e1e1e1;"></div>
<div class="r" style="left:212.00px;top:693.00px;width:25.00px;height:17.00px;background:#0c1512;"></div>
<div class="t" style="left:214.40px;top:694.63px;font-size:12.60px;line-height:16px;color:#8fd9cd;font-weight:bold;letter-spacing:-0.212px;">152</div>
<div class="r" style="left:212.00px;top:709.50px;width:25.00px;height:1.00px;background:#3a403e;"></div>
<div class="r" style="left:300.20px;top:693.00px;width:68.00px;height:17.00px;background:#fce4d6;"></div>
<div class="t" style="left:242.22px;top:693.88px;font-size:13.33px;line-height:17px;color:#111;letter-spacing:-0.645px;">146</div>
<div class="t" style="left:283.23px;top:693.88px;font-size:13.33px;line-height:17px;color:#111;letter-spacing:-0.860px;">12</div>
<div class="t" style="left:303.60px;top:693.88px;font-size:13.33px;line-height:17px;color:#111;letter-spacing:-0.509px;">Desember</div>
<div class="t" style="left:371.30px;top:693.88px;font-size:13.33px;line-height:17px;color:#111;letter-spacing:-0.476px;">SDL-BM1225-009</div>
<div class="t" style="left:485.20px;top:693.88px;font-size:13.33px;line-height:17px;color:#111;letter-spacing:-0.466px;">4000.01</div>
<div class="t" style="left:555.80px;top:693.88px;font-size:13.33px;line-height:17px;color:#111;letter-spacing:-0.424px;">11/12/2025</div>
<div class="r" style="left:630.5px;top:693.0px;width:283.2px;height:17px;overflow:hidden"><div class="t" style="left:2.80px;top:0.88px;font-size:13.33px;line-height:17px;color:#111;letter-spacing:-0.172px;">30 Setachmad Junaedi</div></div>
<div class="t" style="left:976.75px;top:693.88px;font-size:13.33px;line-height:17px;color:#111;letter-spacing:-0.297px;">690.000,00</div>
<div class="t" style="left:1149.96px;top:693.88px;font-size:13.33px;line-height:17px;color:#111;">-</div>
<div class="r" style="left:237.00px;top:709.50px;width:677.00px;height:1.00px;background:#e1e1e1;"></div>
<div class="r" style="left:212.00px;top:710.00px;width:25.00px;height:17.00px;background:#0c1512;"></div>
<div class="t" style="left:214.40px;top:711.63px;font-size:12.60px;line-height:16px;color:#8fd9cd;font-weight:bold;letter-spacing:-0.212px;">153</div>
<div class="r" style="left:212.00px;top:726.50px;width:25.00px;height:1.00px;background:#3a403e;"></div>
<div class="r" style="left:300.20px;top:710.00px;width:68.00px;height:17.00px;background:#fce4d6;"></div>
<div class="t" style="left:242.22px;top:710.88px;font-size:13.33px;line-height:17px;color:#111;letter-spacing:-0.645px;">147</div>
<div class="t" style="left:283.23px;top:710.88px;font-size:13.33px;line-height:17px;color:#111;letter-spacing:-0.860px;">12</div>
<div class="t" style="left:303.60px;top:710.88px;font-size:13.33px;line-height:17px;color:#111;letter-spacing:-0.509px;">Desember</div>
<div class="t" style="left:371.30px;top:710.88px;font-size:13.33px;line-height:17px;color:#111;letter-spacing:-0.462px;">SDL-BK1225-011</div>
<svg class="r" style="left:483.00px;top:710.00px;" width="5" height="5" viewBox="0 0 5 5"><path d="M0 0 H4.5 L0 4.5 Z" fill="#1e7a1e"/></svg>
<div class="t" style="left:485.20px;top:710.88px;font-size:13.33px;line-height:17px;color:#111;letter-spacing:-0.573px;">2300</div>
<div class="t" style="left:555.80px;top:710.88px;font-size:13.33px;line-height:17px;color:#111;letter-spacing:-0.430px;">13/12/2025</div>
<div class="r" style="left:630.5px;top:710.0px;width:283.2px;height:17px;overflow:hidden"><div class="t" style="left:2.80px;top:0.88px;font-size:13.33px;line-height:17px;color:#111;letter-spacing:-0.171px;">Kasbon Mingguan Mohamad Risqi Sisw</div></div>
<div class="t" style="left:1023.16px;top:710.88px;font-size:13.33px;line-height:17px;color:#111;">-</div>
<div class="r" style="left:1048px;top:710.0px;width:112.9px;height:17px;overflow:hidden"><div class="t" style="left:45.08px;top:0.88px;font-size:13.33px;line-height:17px;color:#111;letter-spacing:-0.283px;">1.250.000,00</div></div>
<div class="r" style="left:237.00px;top:726.50px;width:677.00px;height:1.00px;background:#e1e1e1;"></div>
<div class="r" style="left:212.00px;top:727.00px;width:25.00px;height:17.00px;background:#0c1512;"></div>
<div class="t" style="left:214.40px;top:728.63px;font-size:12.60px;line-height:16px;color:#8fd9cd;font-weight:bold;letter-spacing:-0.212px;">154</div>
<div class="r" style="left:212.00px;top:743.50px;width:25.00px;height:1.00px;background:#3a403e;"></div>
<div class="r" style="left:300.20px;top:727.00px;width:68.00px;height:17.00px;background:#fce4d6;"></div>
<div class="t" style="left:242.22px;top:727.88px;font-size:13.33px;line-height:17px;color:#111;letter-spacing:-0.645px;">148</div>
<div class="t" style="left:283.23px;top:727.88px;font-size:13.33px;line-height:17px;color:#111;letter-spacing:-0.860px;">12</div>
<div class="t" style="left:303.60px;top:727.88px;font-size:13.33px;line-height:17px;color:#111;letter-spacing:-0.509px;">Desember</div>
<div class="t" style="left:371.30px;top:727.88px;font-size:13.33px;line-height:17px;color:#111;letter-spacing:-0.476px;">SDL-BM1225-010</div>
<div class="t" style="left:485.20px;top:727.88px;font-size:13.33px;line-height:17px;color:#111;letter-spacing:-0.466px;">4000.01</div>
<div class="t" style="left:555.80px;top:727.88px;font-size:13.33px;line-height:17px;color:#111;letter-spacing:-0.430px;">15/12/2025</div>
<div class="r" style="left:630.5px;top:727.0px;width:283.2px;height:17px;overflow:hidden"><div class="t" style="left:2.80px;top:0.88px;font-size:13.33px;line-height:17px;color:#111;letter-spacing:-0.150px;">Cicil Notatata Widiana</div></div>
<div class="t" style="left:966.08px;top:727.88px;font-size:13.33px;line-height:17px;color:#111;letter-spacing:-0.283px;">5.000.000,00</div>
<div class="t" style="left:1149.96px;top:727.88px;font-size:13.33px;line-height:17px;color:#111;">-</div>
<div class="r" style="left:237.00px;top:743.50px;width:677.00px;height:1.00px;background:#e1e1e1;"></div>
<div class="r" style="left:212.00px;top:744.00px;width:25.00px;height:17.00px;background:#0c1512;"></div>
<div class="t" style="left:214.40px;top:745.63px;font-size:12.60px;line-height:16px;color:#8fd9cd;font-weight:bold;letter-spacing:-0.212px;">155</div>
<div class="r" style="left:212.00px;top:760.50px;width:25.00px;height:1.00px;background:#3a403e;"></div>
<div class="r" style="left:300.20px;top:744.00px;width:68.00px;height:17.00px;background:#fce4d6;"></div>
<div class="t" style="left:242.22px;top:744.88px;font-size:13.33px;line-height:17px;color:#111;letter-spacing:-0.645px;">149</div>
<div class="t" style="left:283.23px;top:744.88px;font-size:13.33px;line-height:17px;color:#111;letter-spacing:-0.860px;">12</div>
<div class="t" style="left:303.60px;top:744.88px;font-size:13.33px;line-height:17px;color:#111;letter-spacing:-0.509px;">Desember</div>
<div class="t" style="left:371.30px;top:744.88px;font-size:13.33px;line-height:17px;color:#111;letter-spacing:-0.466px;">SDL-BK1225-012</div>
<div class="t" style="left:485.20px;top:744.88px;font-size:13.33px;line-height:17px;color:#111;letter-spacing:-0.153px;">ayat silang</div>
<div class="t" style="left:555.80px;top:744.88px;font-size:13.33px;line-height:17px;color:#111;letter-spacing:-0.430px;">16/12/2025</div>
<div class="r" style="left:630.5px;top:744.0px;width:283.2px;height:17px;overflow:hidden"><div class="t" style="left:2.80px;top:0.88px;font-size:13.33px;line-height:17px;color:#111;letter-spacing:-0.160px;">Tarik Tunai Untuk Kasmohamad Risqi Sisw</div></div>
<div class="t" style="left:1023.16px;top:744.88px;font-size:13.33px;line-height:17px;color:#111;">-</div>
<div class="r" style="left:1048px;top:744.0px;width:112.9px;height:17px;overflow:hidden"><div class="t" style="left:45.08px;top:0.88px;font-size:13.33px;line-height:17px;color:#111;letter-spacing:-0.283px;">5.000.000,00</div></div>
<div class="r" style="left:237.00px;top:760.50px;width:677.00px;height:1.00px;background:#e1e1e1;"></div>
<div class="r" style="left:212.00px;top:761.00px;width:25.00px;height:17.00px;background:#0c1512;"></div>
<div class="t" style="left:214.40px;top:762.63px;font-size:12.60px;line-height:16px;color:#8fd9cd;font-weight:bold;letter-spacing:-0.212px;">156</div>
<div class="r" style="left:212.00px;top:777.50px;width:25.00px;height:1.00px;background:#3a403e;"></div>
<div class="r" style="left:300.20px;top:761.00px;width:68.00px;height:17.00px;background:#fce4d6;"></div>
<div class="t" style="left:242.22px;top:761.88px;font-size:13.33px;line-height:17px;color:#111;letter-spacing:-0.645px;">150</div>
<div class="t" style="left:283.23px;top:761.88px;font-size:13.33px;line-height:17px;color:#111;letter-spacing:-0.860px;">12</div>
<div class="t" style="left:303.60px;top:761.88px;font-size:13.33px;line-height:17px;color:#111;letter-spacing:-0.509px;">Desember</div>
<div class="t" style="left:371.30px;top:761.88px;font-size:13.33px;line-height:17px;color:#111;letter-spacing:-0.472px;">SDL-BM1225-011</div>
<div class="t" style="left:485.20px;top:761.88px;font-size:13.33px;line-height:17px;color:#111;letter-spacing:-0.466px;">4000.01</div>
<div class="t" style="left:555.80px;top:761.88px;font-size:13.33px;line-height:17px;color:#111;letter-spacing:-0.430px;">16/12/2025</div>
<div class="r" style="left:630.5px;top:761.0px;width:283.2px;height:17px;overflow:hidden"><div class="t" style="left:2.80px;top:0.88px;font-size:13.33px;line-height:17px;color:#111;letter-spacing:-0.159px;">Laser Plate . Dony Suyono</div></div>
<div class="t" style="left:976.75px;top:761.88px;font-size:13.33px;line-height:17px;color:#111;letter-spacing:-0.297px;">700.000,00</div>
<div class="t" style="left:1149.96px;top:761.88px;font-size:13.33px;line-height:17px;color:#111;">-</div>
<div class="r" style="left:237.00px;top:777.50px;width:677.00px;height:1.00px;background:#e1e1e1;"></div>
<div class="r" style="left:212.00px;top:778.00px;width:25.00px;height:17.00px;background:#0c1512;"></div>
<div class="t" style="left:214.40px;top:779.63px;font-size:12.60px;line-height:16px;color:#8fd9cd;font-weight:bold;letter-spacing:-0.212px;">157</div>
<div class="r" style="left:212.00px;top:794.50px;width:25.00px;height:1.00px;background:#3a403e;"></div>
<div class="r" style="left:300.20px;top:778.00px;width:68.00px;height:17.00px;background:#fce4d6;"></div>
<div class="t" style="left:242.22px;top:778.88px;font-size:13.33px;line-height:17px;color:#111;letter-spacing:-0.645px;">151</div>
<div class="t" style="left:283.23px;top:778.88px;font-size:13.33px;line-height:17px;color:#111;letter-spacing:-0.860px;">12</div>
<div class="t" style="left:303.60px;top:778.88px;font-size:13.33px;line-height:17px;color:#111;letter-spacing:-0.509px;">Desember</div>
<div class="t" style="left:371.30px;top:778.88px;font-size:13.33px;line-height:17px;color:#111;letter-spacing:-0.476px;">SDL-BM1225-012</div>
<div class="t" style="left:485.20px;top:778.88px;font-size:13.33px;line-height:17px;color:#111;letter-spacing:-0.466px;">4000.01</div>
<div class="t" style="left:555.80px;top:778.88px;font-size:13.33px;line-height:17px;color:#111;letter-spacing:-0.430px;">16/12/2025</div>
<div class="r" style="left:630.5px;top:778.0px;width:283.2px;height:17px;overflow:hidden"><div class="t" style="left:2.80px;top:0.88px;font-size:13.33px;line-height:17px;color:#111;letter-spacing:-0.144px;">Agustina Prastiti</div></div>
<div class="t" style="left:966.08px;top:778.88px;font-size:13.33px;line-height:17px;color:#111;letter-spacing:-0.283px;">1.090.000,00</div>
<div class="t" style="left:1149.96px;top:778.88px;font-size:13.33px;line-height:17px;color:#111;">-</div>
<div class="r" style="left:237.00px;top:794.50px;width:677.00px;height:1.00px;background:#e1e1e1;"></div>
<div class="r" style="left:212.00px;top:795.00px;width:25.00px;height:17.00px;background:#0c1512;"></div>
<div class="t" style="left:214.40px;top:796.63px;font-size:12.60px;line-height:16px;color:#8fd9cd;font-weight:bold;letter-spacing:-0.212px;">158</div>
<div class="r" style="left:212.00px;top:811.50px;width:25.00px;height:1.00px;background:#3a403e;"></div>
<div class="r" style="left:300.20px;top:795.00px;width:68.00px;height:17.00px;background:#fce4d6;"></div>
<div class="t" style="left:242.22px;top:795.88px;font-size:13.33px;line-height:17px;color:#111;letter-spacing:-0.645px;">152</div>
<div class="t" style="left:283.23px;top:795.88px;font-size:13.33px;line-height:17px;color:#111;letter-spacing:-0.860px;">12</div>
<div class="t" style="left:303.60px;top:795.88px;font-size:13.33px;line-height:17px;color:#111;letter-spacing:-0.509px;">Desember</div>
<div class="t" style="left:371.30px;top:795.88px;font-size:13.33px;line-height:17px;color:#111;letter-spacing:-0.476px;">SDL-BM1225-013</div>
<div class="t" style="left:485.20px;top:795.88px;font-size:13.33px;line-height:17px;color:#111;letter-spacing:-0.466px;">4000.01</div>
<div class="t" style="left:555.80px;top:795.88px;font-size:13.33px;line-height:17px;color:#111;letter-spacing:-0.430px;">18/12/2025</div>
<div class="r" style="left:630.5px;top:795.0px;width:283.2px;height:17px;overflow:hidden"><div class="t" style="left:2.80px;top:0.88px;font-size:13.33px;line-height:17px;color:#111;letter-spacing:-0.176px;">A.Sapardi</div></div>
<div class="t" style="left:976.75px;top:795.88px;font-size:13.33px;line-height:17px;color:#111;letter-spacing:-0.297px;">150.000,00</div>
<div class="t" style="left:1149.96px;top:795.88px;font-size:13.33px;line-height:17px;color:#111;">-</div>
<div class="r" style="left:237.00px;top:811.50px;width:677.00px;height:1.00px;background:#e1e1e1;"></div>
<div class="r" style="left:212.00px;top:812.00px;width:25.00px;height:17.00px;background:#0c1512;"></div>
<div class="t" style="left:214.40px;top:813.63px;font-size:12.60px;line-height:16px;color:#8fd9cd;font-weight:bold;letter-spacing:-0.212px;">159</div>
<div class="r" style="left:212.00px;top:828.50px;width:25.00px;height:1.00px;background:#3a403e;"></div>
<div class="r" style="left:300.20px;top:812.00px;width:68.00px;height:17.00px;background:#fce4d6;"></div>
<div class="t" style="left:242.22px;top:812.88px;font-size:13.33px;line-height:17px;color:#111;letter-spacing:-0.645px;">153</div>
<div class="t" style="left:283.23px;top:812.88px;font-size:13.33px;line-height:17px;color:#111;letter-spacing:-0.860px;">12</div>
<div class="t" style="left:303.60px;top:812.88px;font-size:13.33px;line-height:17px;color:#111;letter-spacing:-0.509px;">Desember</div>
<div class="t" style="left:371.30px;top:812.88px;font-size:13.33px;line-height:17px;color:#111;letter-spacing:-0.466px;">SDL-BK1225-013</div>
<div class="t" style="left:485.20px;top:812.88px;font-size:13.33px;line-height:17px;color:#111;letter-spacing:-0.153px;">ayat silang</div>
<div class="t" style="left:555.80px;top:812.88px;font-size:13.33px;line-height:17px;color:#111;letter-spacing:-0.430px;">18/12/2025</div>
<div class="r" style="left:630.5px;top:812.0px;width:283.2px;height:17px;overflow:hidden"><div class="t" style="left:2.80px;top:0.88px;font-size:13.33px;line-height:17px;color:#111;letter-spacing:-0.159px;">Tarik Tunai Mohamad Risqi Sisw</div></div>
<div class="t" style="left:1023.16px;top:812.88px;font-size:13.33px;line-height:17px;color:#111;">-</div>
<div class="r" style="left:1048px;top:812.0px;width:112.9px;height:17px;overflow:hidden"><div class="t" style="left:45.08px;top:0.88px;font-size:13.33px;line-height:17px;color:#111;letter-spacing:-0.283px;">3.000.000,00</div></div>
<div class="r" style="left:237.00px;top:828.50px;width:677.00px;height:1.00px;background:#e1e1e1;"></div>
<div class="r" style="left:212.00px;top:829.00px;width:25.00px;height:17.00px;background:#0c1512;"></div>
<div class="t" style="left:214.40px;top:830.63px;font-size:12.60px;line-height:16px;color:#8fd9cd;font-weight:bold;letter-spacing:-0.212px;">160</div>
<div class="r" style="left:212.00px;top:845.50px;width:25.00px;height:1.00px;background:#3a403e;"></div>
<div class="r" style="left:300.20px;top:829.00px;width:68.00px;height:17.00px;background:#fce4d6;"></div>
<div class="t" style="left:242.22px;top:829.88px;font-size:13.33px;line-height:17px;color:#111;letter-spacing:-0.645px;">154</div>
<div class="t" style="left:283.23px;top:829.88px;font-size:13.33px;line-height:17px;color:#111;letter-spacing:-0.860px;">12</div>
<div class="t" style="left:303.60px;top:829.88px;font-size:13.33px;line-height:17px;color:#111;letter-spacing:-0.509px;">Desember</div>
<div class="t" style="left:371.30px;top:829.88px;font-size:13.33px;line-height:17px;color:#111;letter-spacing:-0.466px;">SDL-BK1225-014</div>
<svg class="r" style="left:483.00px;top:829.00px;" width="5" height="5" viewBox="0 0 5 5"><path d="M0 0 H4.5 L0 4.5 Z" fill="#1e7a1e"/></svg>
<div class="t" style="left:485.20px;top:829.88px;font-size:13.33px;line-height:17px;color:#111;letter-spacing:-0.573px;">2300</div>
<div class="t" style="left:555.80px;top:829.88px;font-size:13.33px;line-height:17px;color:#111;letter-spacing:-0.430px;">19/12/2025</div>
<div class="r" style="left:630.5px;top:829.0px;width:283.2px;height:17px;overflow:hidden"><div class="t" style="left:2.80px;top:0.88px;font-size:13.33px;line-height:17px;color:#111;letter-spacing:-0.165px;">Pinjem Uang Sdl Mohamad Risqi Sisw</div></div>
<div class="t" style="left:1023.16px;top:829.88px;font-size:13.33px;line-height:17px;color:#111;">-</div>
<div class="r" style="left:1048px;top:829.0px;width:112.9px;height:17px;overflow:hidden"><div class="t" style="left:45.08px;top:0.88px;font-size:13.33px;line-height:17px;color:#111;letter-spacing:-0.283px;">1.000.000,00</div></div>
<div class="r" style="left:237.00px;top:845.50px;width:677.00px;height:1.00px;background:#e1e1e1;"></div>
<div class="r" style="left:212.00px;top:846.00px;width:25.00px;height:17.00px;background:#0c1512;"></div>
<div class="t" style="left:214.40px;top:847.63px;font-size:12.60px;line-height:16px;color:#8fd9cd;font-weight:bold;letter-spacing:-0.212px;">161</div>
<div class="r" style="left:212.00px;top:862.50px;width:25.00px;height:1.00px;background:#3a403e;"></div>
<div class="r" style="left:300.20px;top:846.00px;width:68.00px;height:17.00px;background:#fce4d6;"></div>
<div class="t" style="left:242.22px;top:846.88px;font-size:13.33px;line-height:17px;color:#111;letter-spacing:-0.645px;">155</div>
<div class="t" style="left:283.23px;top:846.88px;font-size:13.33px;line-height:17px;color:#111;letter-spacing:-0.860px;">12</div>
<div class="t" style="left:303.60px;top:846.88px;font-size:13.33px;line-height:17px;color:#111;letter-spacing:-0.509px;">Desember</div>
<div class="t" style="left:371.30px;top:846.88px;font-size:13.33px;line-height:17px;color:#111;letter-spacing:-0.476px;">SDL-BM1225-014</div>
<div class="t" style="left:485.20px;top:846.88px;font-size:13.33px;line-height:17px;color:#111;letter-spacing:-0.466px;">4000.01</div>
<div class="t" style="left:555.80px;top:846.88px;font-size:13.33px;line-height:17px;color:#111;letter-spacing:-0.430px;">19/12/2025</div>
<div class="r" style="left:630.5px;top:846.0px;width:283.2px;height:17px;overflow:hidden"><div class="t" style="left:2.80px;top:0.88px;font-size:13.33px;line-height:17px;color:#111;letter-spacing:-0.165px;">Suryadi Walujo</div></div>
<div class="t" style="left:966.08px;top:846.88px;font-size:13.33px;line-height:17px;color:#111;letter-spacing:-0.283px;">3.248.000,00</div>
<div class="t" style="left:1149.96px;top:846.88px;font-size:13.33px;line-height:17px;color:#111;">-</div>
<div class="r" style="left:237.00px;top:862.50px;width:677.00px;height:1.00px;background:#e1e1e1;"></div>
<div class="r" style="left:212.00px;top:863.00px;width:25.00px;height:17.00px;background:#0c1512;"></div>
<div class="t" style="left:214.40px;top:864.63px;font-size:12.60px;line-height:16px;color:#8fd9cd;font-weight:bold;letter-spacing:-0.212px;">162</div>
<div class="r" style="left:212.00px;top:879.50px;width:25.00px;height:1.00px;background:#3a403e;"></div>
<div class="r" style="left:300.20px;top:863.00px;width:68.00px;height:17.00px;background:#fce4d6;"></div>
<div class="t" style="left:242.22px;top:863.88px;font-size:13.33px;line-height:17px;color:#111;letter-spacing:-0.645px;">156</div>
<div class="t" style="left:283.23px;top:863.88px;font-size:13.33px;line-height:17px;color:#111;letter-spacing:-0.860px;">12</div>
<div class="t" style="left:303.60px;top:863.88px;font-size:13.33px;line-height:17px;color:#111;letter-spacing:-0.509px;">Desember</div>
<div class="t" style="left:371.30px;top:863.88px;font-size:13.33px;line-height:17px;color:#111;letter-spacing:-0.466px;">SDL-BK1225-015</div>
<div class="t" style="left:485.20px;top:863.88px;font-size:13.33px;line-height:17px;color:#111;letter-spacing:-0.466px;">6201.01</div>
<div class="t" style="left:555.80px;top:863.88px;font-size:13.33px;line-height:17px;color:#111;letter-spacing:-0.430px;">20/12/2025</div>
<div class="r" style="left:630.5px;top:863.0px;width:283.2px;height:17px;overflow:hidden"><div class="t" style="left:2.80px;top:0.88px;font-size:13.33px;line-height:17px;color:#111;letter-spacing:-0.170px;">Kasbon Mingguan Edi Suryana</div></div>
<div class="t" style="left:1023.16px;top:863.88px;font-size:13.33px;line-height:17px;color:#111;">-</div>
<div class="r" style="left:1048px;top:863.0px;width:112.9px;height:17px;overflow:hidden"><div class="t" style="left:55.75px;top:0.88px;font-size:13.33px;line-height:17px;color:#111;letter-spacing:-0.297px;">500.000,00</div></div>
<div class="r" style="left:237.00px;top:879.50px;width:677.00px;height:1.00px;background:#e1e1e1;"></div>
<div class="r" style="left:212.00px;top:880.00px;width:25.00px;height:17.00px;background:#0c1512;"></div>
<div class="t" style="left:214.40px;top:881.63px;font-size:12.60px;line-height:16px;color:#8fd9cd;font-weight:bold;letter-spacing:-0.212px;">163</div>
<div class="r" style="left:212.00px;top:896.50px;width:25.00px;height:1.00px;background:#3a403e;"></div>
<div class="r" style="left:300.20px;top:880.00px;width:68.00px;height:17.00px;background:#fce4d6;"></div>
<div class="t" style="left:242.22px;top:880.88px;font-size:13.33px;line-height:17px;color:#111;letter-spacing:-0.645px;">157</div>
<div class="t" style="left:283.23px;top:880.88px;font-size:13.33px;line-height:17px;color:#111;letter-spacing:-0.860px;">12</div>
<div class="t" style="left:303.60px;top:880.88px;font-size:13.33px;line-height:17px;color:#111;letter-spacing:-0.509px;">Desember</div>
<div class="t" style="left:371.30px;top:880.88px;font-size:13.33px;line-height:17px;color:#111;letter-spacing:-0.466px;">SDL-BK1225-016</div>
<div class="t" style="left:485.20px;top:880.88px;font-size:13.33px;line-height:17px;color:#111;letter-spacing:-0.466px;">6201.01</div>
<div class="t" style="left:555.80px;top:880.88px;font-size:13.33px;line-height:17px;color:#111;letter-spacing:-0.430px;">20/12/2025</div>
<div class="r" style="left:630.5px;top:880.0px;width:283.2px;height:17px;overflow:hidden"><div class="t" style="left:2.80px;top:0.88px;font-size:13.33px;line-height:17px;color:#111;letter-spacing:-0.167px;">Kasbon Mingguan Subromalisi</div></div>
<div class="t" style="left:1023.16px;top:880.88px;font-size:13.33px;line-height:17px;color:#111;">-</div>
<div class="r" style="left:1048px;top:880.0px;width:112.9px;height:17px;overflow:hidden"><div class="t" style="left:45.08px;top:0.88px;font-size:13.33px;line-height:17px;color:#111;letter-spacing:-0.283px;">1.000.000,00</div></div>
<div class="r" style="left:237.00px;top:896.50px;width:677.00px;height:1.00px;background:#e1e1e1;"></div>
<div class="r" style="left:212.00px;top:897.00px;width:25.00px;height:17.00px;background:#0c1512;"></div>
<div class="t" style="left:214.40px;top:898.63px;font-size:12.60px;line-height:16px;color:#8fd9cd;font-weight:bold;letter-spacing:-0.212px;">164</div>
<div class="r" style="left:212.00px;top:913.50px;width:25.00px;height:1.00px;background:#3a403e;"></div>
<div class="r" style="left:300.20px;top:897.00px;width:68.00px;height:17.00px;background:#fce4d6;"></div>
<div class="t" style="left:242.22px;top:897.88px;font-size:13.33px;line-height:17px;color:#111;letter-spacing:-0.645px;">158</div>
<div class="t" style="left:283.23px;top:897.88px;font-size:13.33px;line-height:17px;color:#111;letter-spacing:-0.860px;">12</div>
<div class="t" style="left:303.60px;top:897.88px;font-size:13.33px;line-height:17px;color:#111;letter-spacing:-0.509px;">Desember</div>
<div class="t" style="left:371.30px;top:897.88px;font-size:13.33px;line-height:17px;color:#111;letter-spacing:-0.466px;">SDL-BK1225-017</div>
<div class="t" style="left:485.20px;top:897.88px;font-size:13.33px;line-height:17px;color:#111;letter-spacing:-0.466px;">6201.01</div>
<div class="t" style="left:555.80px;top:897.88px;font-size:13.33px;line-height:17px;color:#111;letter-spacing:-0.430px;">20/12/2025</div>
<div class="r" style="left:630.5px;top:897.0px;width:283.2px;height:17px;overflow:hidden"><div class="t" style="left:2.80px;top:0.88px;font-size:13.33px;line-height:17px;color:#111;letter-spacing:-0.173px;">Kasbon Mingguan Anggi</div></div>
<div class="t" style="left:1023.16px;top:897.88px;font-size:13.33px;line-height:17px;color:#111;">-</div>
<div class="r" style="left:1048px;top:897.0px;width:112.9px;height:17px;overflow:hidden"><div class="t" style="left:45.08px;top:0.88px;font-size:13.33px;line-height:17px;color:#111;letter-spacing:-0.283px;">1.900.000,00</div></div>
<div class="r" style="left:237.00px;top:913.50px;width:677.00px;height:1.00px;background:#e1e1e1;"></div>
<div class="r" style="left:212.00px;top:914.00px;width:25.00px;height:17.00px;background:#0c1512;"></div>
<div class="t" style="left:214.40px;top:915.63px;font-size:12.60px;line-height:16px;color:#8fd9cd;font-weight:bold;letter-spacing:-0.212px;">165</div>
<div class="r" style="left:212.00px;top:930.50px;width:25.00px;height:1.00px;background:#3a403e;"></div>
<div class="r" style="left:300.20px;top:914.00px;width:68.00px;height:17.00px;background:#fce4d6;"></div>
<div class="t" style="left:242.22px;top:914.88px;font-size:13.33px;line-height:17px;color:#111;letter-spacing:-0.645px;">159</div>
<div class="t" style="left:283.23px;top:914.88px;font-size:13.33px;line-height:17px;color:#111;letter-spacing:-0.860px;">12</div>
<div class="t" style="left:303.60px;top:914.88px;font-size:13.33px;line-height:17px;color:#111;letter-spacing:-0.509px;">Desember</div>
<div class="t" style="left:371.30px;top:914.88px;font-size:13.33px;line-height:17px;color:#111;letter-spacing:-0.466px;">SDL-BK1225-018</div>
<svg class="r" style="left:483.00px;top:914.00px;" width="5" height="5" viewBox="0 0 5 5"><path d="M0 0 H4.5 L0 4.5 Z" fill="#1e7a1e"/></svg>
<div class="t" style="left:485.20px;top:914.88px;font-size:13.33px;line-height:17px;color:#111;letter-spacing:-0.573px;">5100</div>
<div class="t" style="left:555.80px;top:914.88px;font-size:13.33px;line-height:17px;color:#111;letter-spacing:-0.430px;">22/12/2025</div>
<div class="r" style="left:630.5px;top:914.0px;width:283.2px;height:17px;overflow:hidden"><div class="t" style="left:2.80px;top:0.88px;font-size:13.33px;line-height:17px;color:#111;letter-spacing:-0.161px;">Plat Besi 8Mm Uk 71 X 71 Cm Madrodji</div></div>
<div class="t" style="left:1023.16px;top:914.88px;font-size:13.33px;line-height:17px;color:#111;">-</div>
<div class="r" style="left:1048px;top:914.0px;width:112.9px;height:17px;overflow:hidden"><div class="t" style="left:55.75px;top:0.88px;font-size:13.33px;line-height:17px;color:#111;letter-spacing:-0.297px;">474.000,00</div></div>
<div class="r" style="left:237.00px;top:930.50px;width:677.00px;height:1.00px;background:#e1e1e1;"></div>
<div class="r" style="left:212.00px;top:931.00px;width:25.00px;height:17.00px;background:#0c1512;"></div>
<div class="t" style="left:214.40px;top:932.63px;font-size:12.60px;line-height:16px;color:#8fd9cd;font-weight:bold;letter-spacing:-0.212px;">166</div>
<div class="r" style="left:212.00px;top:947.50px;width:25.00px;height:1.00px;background:#3a403e;"></div>
<div class="r" style="left:300.20px;top:931.00px;width:68.00px;height:17.00px;background:#fce4d6;"></div>
<div class="t" style="left:242.22px;top:931.88px;font-size:13.33px;line-height:17px;color:#111;letter-spacing:-0.645px;">160</div>
<div class="t" style="left:283.23px;top:931.88px;font-size:13.33px;line-height:17px;color:#111;letter-spacing:-0.860px;">12</div>
<div class="t" style="left:303.60px;top:931.88px;font-size:13.33px;line-height:17px;color:#111;letter-spacing:-0.509px;">Desember</div>
<div class="t" style="left:371.30px;top:931.88px;font-size:13.33px;line-height:17px;color:#111;letter-spacing:-0.476px;">SDL-BM1225-015</div>
<div class="t" style="left:485.20px;top:931.88px;font-size:13.33px;line-height:17px;color:#111;letter-spacing:-0.466px;">4000.01</div>
<div class="t" style="left:555.80px;top:931.88px;font-size:13.33px;line-height:17px;color:#111;letter-spacing:-0.430px;">23/12/2025</div>
<div class="r" style="left:630.5px;top:931.0px;width:283.2px;height:17px;overflow:hidden"><div class="t" style="left:2.80px;top:0.88px;font-size:13.33px;line-height:17px;color:#111;letter-spacing:-0.175px;">45 Pcsachmad Junaedi</div></div>
<div class="t" style="left:966.08px;top:931.88px;font-size:13.33px;line-height:17px;color:#111;letter-spacing:-0.283px;">1.035.000,00</div>
<div class="t" style="left:1149.96px;top:931.88px;font-size:13.33px;line-height:17px;color:#111;">-</div>
<div class="r" style="left:237.00px;top:947.50px;width:677.00px;height:1.00px;background:#e1e1e1;"></div>
<div class="r" style="left:212.00px;top:948.00px;width:25.00px;height:17.00px;background:#0c1512;"></div>
<div class="t" style="left:214.40px;top:949.63px;font-size:12.60px;line-height:16px;color:#8fd9cd;font-weight:bold;letter-spacing:-0.212px;">167</div>
<div class="r" style="left:212.00px;top:964.50px;width:25.00px;height:1.00px;background:#3a403e;"></div>
<div class="r" style="left:300.20px;top:948.00px;width:68.00px;height:17.00px;background:#fce4d6;"></div>
<div class="t" style="left:242.22px;top:948.88px;font-size:13.33px;line-height:17px;color:#111;letter-spacing:-0.645px;">161</div>
<div class="t" style="left:283.23px;top:948.88px;font-size:13.33px;line-height:17px;color:#111;letter-spacing:-0.860px;">12</div>
<div class="t" style="left:303.60px;top:948.88px;font-size:13.33px;line-height:17px;color:#111;letter-spacing:-0.509px;">Desember</div>
<div class="t" style="left:371.30px;top:948.88px;font-size:13.33px;line-height:17px;color:#111;letter-spacing:-0.476px;">SDL-BM1225-016</div>
<div class="t" style="left:485.20px;top:948.88px;font-size:13.33px;line-height:17px;color:#111;letter-spacing:-0.466px;">4000.01</div>
<div class="t" style="left:555.80px;top:948.88px;font-size:13.33px;line-height:17px;color:#111;letter-spacing:-0.430px;">23/12/2025</div>
<div class="r" style="left:630.5px;top:948.0px;width:283.2px;height:17px;overflow:hidden"><div class="t" style="left:2.80px;top:0.88px;font-size:13.33px;line-height:17px;color:#111;letter-spacing:-0.196px;">Ade Narwan</div></div>
<div class="t" style="left:966.08px;top:948.88px;font-size:13.33px;line-height:17px;color:#111;letter-spacing:-0.283px;">1.400.000,00</div>
<div class="t" style="left:1149.96px;top:948.88px;font-size:13.33px;line-height:17px;color:#111;">-</div>
<div class="r" style="left:237.00px;top:964.50px;width:677.00px;height:1.00px;background:#e1e1e1;"></div>
<div class="r" style="left:212.00px;top:965.00px;width:25.00px;height:17.00px;background:#0c1512;"></div>
<div class="t" style="left:214.40px;top:966.63px;font-size:12.60px;line-height:16px;color:#8fd9cd;font-weight:bold;letter-spacing:-0.212px;">168</div>
<div class="r" style="left:212.00px;top:981.50px;width:25.00px;height:1.00px;background:#3a403e;"></div>
<div class="r" style="left:300.20px;top:965.00px;width:68.00px;height:17.00px;background:#fce4d6;"></div>
<div class="t" style="left:242.22px;top:965.88px;font-size:13.33px;line-height:17px;color:#111;letter-spacing:-0.645px;">162</div>
<div class="t" style="left:283.23px;top:965.88px;font-size:13.33px;line-height:17px;color:#111;letter-spacing:-0.860px;">12</div>
<div class="t" style="left:303.60px;top:965.88px;font-size:13.33px;line-height:17px;color:#111;letter-spacing:-0.509px;">Desember</div>
<div class="t" style="left:371.30px;top:965.88px;font-size:13.33px;line-height:17px;color:#111;letter-spacing:-0.466px;">SDL-BK1225-019</div>
<svg class="r" style="left:483.00px;top:965.00px;" width="5" height="5" viewBox="0 0 5 5"><path d="M0 0 H4.5 L0 4.5 Z" fill="#1e7a1e"/></svg>
<div class="t" style="left:485.20px;top:965.88px;font-size:13.33px;line-height:17px;color:#111;letter-spacing:-0.573px;">5100</div>
<div class="t" style="left:555.80px;top:965.88px;font-size:13.33px;line-height:17px;color:#111;letter-spacing:-0.430px;">24/12/2025</div>
<div class="r" style="left:630.5px;top:965.0px;width:283.2px;height:17px;overflow:hidden"><div class="t" style="left:2.80px;top:0.88px;font-size:13.33px;line-height:17px;color:#111;letter-spacing:-0.164px;">Plat Besi 3Mm 1Lbragus Susanto</div></div>
<div class="t" style="left:1023.16px;top:965.88px;font-size:13.33px;line-height:17px;color:#111;">-</div>
<div class="r" style="left:1048px;top:965.0px;width:112.9px;height:17px;overflow:hidden"><div class="t" style="left:55.75px;top:0.88px;font-size:13.33px;line-height:17px;color:#111;letter-spacing:-0.297px;">735.000,00</div></div>
<div class="r" style="left:237.00px;top:981.50px;width:677.00px;height:1.00px;background:#e1e1e1;"></div>
<div class="r" style="left:212.00px;top:982.00px;width:25.00px;height:17.00px;background:#0c1512;"></div>
<div class="t" style="left:214.40px;top:983.63px;font-size:12.60px;line-height:16px;color:#8fd9cd;font-weight:bold;letter-spacing:-0.212px;">169</div>
<div class="r" style="left:212.00px;top:998.50px;width:25.00px;height:1.00px;background:#3a403e;"></div>
<div class="r" style="left:300.20px;top:982.00px;width:68.00px;height:17.00px;background:#fce4d6;"></div>
<div class="t" style="left:242.22px;top:982.88px;font-size:13.33px;line-height:17px;color:#111;letter-spacing:-0.645px;">163</div>
<div class="t" style="left:283.23px;top:982.88px;font-size:13.33px;line-height:17px;color:#111;letter-spacing:-0.860px;">12</div>
<div class="t" style="left:303.60px;top:982.88px;font-size:13.33px;line-height:17px;color:#111;letter-spacing:-0.509px;">Desember</div>
<div class="t" style="left:371.30px;top:982.88px;font-size:13.33px;line-height:17px;color:#111;letter-spacing:-0.476px;">SDL-BM1225-017</div>
<div class="t" style="left:485.20px;top:982.88px;font-size:13.33px;line-height:17px;color:#111;letter-spacing:-0.466px;">4000.01</div>
<div class="t" style="left:555.80px;top:982.88px;font-size:13.33px;line-height:17px;color:#111;letter-spacing:-0.430px;">24/12/2025</div>
<div class="r" style="left:630.5px;top:982.0px;width:283.2px;height:17px;overflow:hidden"><div class="t" style="left:2.80px;top:0.88px;font-size:13.33px;line-height:17px;color:#111;letter-spacing:-0.147px;">Byr Laser Kristinawati</div></div>
<div class="t" style="left:966.08px;top:982.88px;font-size:13.33px;line-height:17px;color:#111;letter-spacing:-0.283px;">1.000.000,00</div>
<div class="t" style="left:1149.96px;top:982.88px;font-size:13.33px;line-height:17px;color:#111;">-</div>
<div class="r" style="left:237.00px;top:998.50px;width:677.00px;height:1.00px;background:#e1e1e1;"></div>
<div class="r" style="left:212.00px;top:999.00px;width:25.00px;height:17.00px;background:#0c1512;"></div>
<div class="t" style="left:214.40px;top:1000.63px;font-size:12.60px;line-height:16px;color:#8fd9cd;font-weight:bold;letter-spacing:-0.212px;">170</div>
<div class="r" style="left:212.00px;top:1015.50px;width:25.00px;height:1.00px;background:#3a403e;"></div>
<div class="r" style="left:300.20px;top:999.00px;width:68.00px;height:17.00px;background:#fce4d6;"></div>
<div class="t" style="left:242.22px;top:999.88px;font-size:13.33px;line-height:17px;color:#111;letter-spacing:-0.645px;">164</div>
<div class="t" style="left:283.23px;top:999.88px;font-size:13.33px;line-height:17px;color:#111;letter-spacing:-0.860px;">12</div>
<div class="t" style="left:303.60px;top:999.88px;font-size:13.33px;line-height:17px;color:#111;letter-spacing:-0.509px;">Desember</div>
<div class="t" style="left:371.30px;top:999.88px;font-size:13.33px;line-height:17px;color:#111;letter-spacing:-0.476px;">SDL-BM1225-018</div>
<div class="t" style="left:485.20px;top:999.88px;font-size:13.33px;line-height:17px;color:#111;letter-spacing:-0.466px;">4000.01</div>
<div class="t" style="left:555.80px;top:999.88px;font-size:13.33px;line-height:17px;color:#111;letter-spacing:-0.430px;">24/12/2025</div>
<div class="r" style="left:630.5px;top:999.0px;width:283.2px;height:17px;overflow:hidden"><div class="t" style="left:2.80px;top:0.88px;font-size:13.33px;line-height:17px;color:#111;letter-spacing:-0.150px;">Indah Fitri Permat</div></div>
<div class="t" style="left:976.75px;top:999.88px;font-size:13.33px;line-height:17px;color:#111;letter-spacing:-0.297px;">975.000,00</div>
<div class="t" style="left:1149.96px;top:999.88px;font-size:13.33px;line-height:17px;color:#111;">-</div>
<div class="r" style="left:237.00px;top:1015.50px;width:677.00px;height:1.00px;background:#e1e1e1;"></div>
<div class="r" style="left:367.70px;top:387.00px;width:1.00px;height:629.00px;background:#e1e1e1;"></div>
<div class="r" style="left:481.90px;top:387.00px;width:1.00px;height:629.00px;background:#e1e1e1;"></div>
<div class="r" style="left:551.50px;top:387.00px;width:1.00px;height:629.00px;background:#e1e1e1;"></div>
<div class="r" style="left:630.00px;top:387.00px;width:1.00px;height:629.00px;background:#e1e1e1;"></div>
<div class="r" style="left:1162.00px;top:287.00px;width:22.00px;height:729.00px;background:#141414;"></div>
<svg class="r" style="left:1168.50px;top:293.00px;" width="10" height="9" viewBox="0 0 10 9"><path d="M5 0.8 L9.5 8 H0.5 Z" fill="#8a8a8a"/></svg>
<div class="r" style="left:1168.60px;top:307.00px;width:10.00px;height:121.00px;background:#9c9c9c;border-radius:5px;"></div>
<svg class="r" style="left:1168.50px;top:1004.00px;" width="10" height="9" viewBox="0 0 10 9"><path d="M5 8.2 L9.5 1 H0.5 Z" fill="#8a8a8a"/></svg>
<div class="r" style="left:212.00px;top:1016.00px;width:972.00px;height:20.00px;background:#0a0a0a;"></div>
<svg class="r" style="left:240.00px;top:1024.00px;" width="7" height="9" viewBox="0 0 7 9"><path d="M6 0.7 L1.2 4.5 L6 8.3" fill="none" stroke="#6e6e6e" stroke-width="1.3"/></svg>
<svg class="r" style="left:273.00px;top:1024.00px;" width="7" height="9" viewBox="0 0 7 9"><path d="M1 0.7 L5.8 4.5 L1 8.3" fill="none" stroke="#6e6e6e" stroke-width="1.3"/></svg>
<div class="t" style="left:337.50px;top:1023.08px;font-size:13.60px;line-height:18px;color:#fff;letter-spacing:-0.076px;">Note</div>
<div class="r" style="left:380.50px;top:1021.00px;width:1.00px;height:14.00px;background:#444;"></div>
<div class="r" style="left:435.50px;top:1021.00px;width:1.00px;height:14.00px;background:#444;"></div>
<div class="r" style="left:385.00px;top:1020.00px;width:46.00px;height:16.00px;background:#f6b900;border-radius:4px 4px 0 0;"></div>
<div class="t" style="left:393.26px;top:1023.08px;font-size:13.60px;line-height:18px;color:#3a2a00;">Final</div>
<div class="r" style="left:440.00px;top:1020.00px;width:58.00px;height:16.00px;background:#538234;border-radius:4px 4px 0 0;"></div>
<div class="t" style="left:446.69px;top:1023.08px;font-size:13.60px;line-height:18px;color:#e6eee0;">PPh 21</div>
<div class="r" style="left:502.50px;top:1021.00px;width:1.00px;height:14.00px;background:#444;"></div>
<div class="r" style="left:507.00px;top:1020.00px;width:94.50px;height:16.00px;background:#6aa343;border-radius:4px 4px 0 0;"></div>
<div class="t" style="left:513.55px;top:1023.08px;font-size:13.60px;line-height:18px;color:#12280a;">BP21_Kartap</div>
<div class="r" style="left:605.50px;top:1021.00px;width:1.00px;height:14.00px;background:#444;"></div>
<div class="t" style="left:618.80px;top:1023.08px;font-size:13.60px;line-height:18px;color:#fff;letter-spacing:-0.912px;">CAIL</div>
<div class="r" style="left:659.50px;top:1021.00px;width:1.00px;height:14.00px;background:#444;"></div>
<div class="r" style="left:663.80px;top:1016.00px;width:54.50px;height:20.00px;background:#ffffff;border-radius:4px 4px 0 0;"></div>
<div class="r" style="left:663.8px;top:1016px;width:54.2px;height:20px;overflow:hidden"><div class="t" style="left:8.70px;top:2.39px;font-size:13.00px;line-height:17px;color:#2a2a2a;font-weight:bold;letter-spacing:-0.145px;">Rekening</div></div>
<div class="r" style="left:728.00px;top:1029.50px;width:2.00px;height:2.50px;background:#e0e0e0;"></div>
<div class="r" style="left:732.00px;top:1029.50px;width:2.00px;height:2.50px;background:#e0e0e0;"></div>
<div class="r" style="left:736.00px;top:1029.50px;width:2.00px;height:2.50px;background:#e0e0e0;"></div>
<svg class="r" style="left:760.00px;top:1024.00px;" width="11" height="11" viewBox="0 0 11 11"><path d="M5.5 0 V11 M0 5.5 H11" stroke="#d0d0d0" stroke-width="1.2"/></svg>
<div class="r" style="left:797.00px;top:1026.00px;width:2.00px;height:2.00px;background:#d0d0d0;"></div>
<svg class="r" style="left:815.00px;top:1026.00px;" width="10" height="8" viewBox="0 0 10 8"><path d="M0.8 6 L9.5 0.5 V8 Z" fill="#9a9a9a"/></svg>
<div class="r" style="left:831.30px;top:1027.50px;width:111.00px;height:10.00px;background:#9c9c9c;border-radius:5px;"></div>
<svg class="r" style="left:1147.00px;top:1026.00px;" width="10" height="8" viewBox="0 0 10 8"><path d="M9.2 6 L0.5 0.5 V8 Z" fill="#9a9a9a"/></svg>
</div></div>
<div id="acc">
<div class="r" style="left:329.00px;top:0.00px;width:320.20px;height:557.70px;background:#a90729;"></div>
<div class="r" style="left:329.00px;top:0.00px;width:320.20px;height:28.40px;background:linear-gradient(#b20a2d,#a90729);"></div>
<svg class="r" style="left:334.70px;top:5.80px;" width="15" height="15" viewBox="0 0 15 15"><circle cx="7.5" cy="7.5" r="7.3" fill="#f2536b"/><circle cx="7.5" cy="7.5" r="7.3" fill="none" stroke="#f7a0ae" stroke-width="0.6"/><path d="M4.6 11.3 L7.5 3 L10.4 11.3 M7.5 6.5 L6.3 10 M7.5 6.5 L8.7 10" fill="none" stroke="#fff" stroke-width="1.3" stroke-linejoin="round"/></svg>
<div class="t" style="left:354.60px;top:5.84px;font-size:12.00px;line-height:16px;color:#fbeef0;font-weight:bold;letter-spacing:-0.399px;">ACCURATE 5  - CV SINAR DUTA LAS...</div>
<div class="r" style="left:563.70px;top:14.80px;width:8.60px;height:2.60px;background:#f0c8d0;"></div>
<svg class="r" style="left:591.00px;top:10.30px;" width="9.5" height="7.5" viewBox="0 0 9.5 7.5"><rect x="1" y="1.2" width="7.5" height="5.2" fill="none" stroke="#f0d0d6" stroke-width="2"/></svg>
<svg class="r" style="left:618.80px;top:9.50px;" width="9" height="8.5" viewBox="0 0 9 8.5"><path d="M1 1 L8 7.5 M8 1 L1 7.5" stroke="#f0d0d6" stroke-width="2.2"/></svg>
<div class="r" style="left:332.30px;top:28.40px;width:313.40px;height:47.40px;background:#383838;"></div>
<div class="t" style="left:342.40px;top:35.90px;font-size:12.40px;line-height:16px;color:#dcdcdc;letter-spacing:-0.999px;">Berkas</div>
<div class="r" style="left:342.40px;top:49.00px;width:7.20px;height:1.00px;background:#dcdcdc;"></div>
<div class="t" style="left:387.00px;top:35.90px;font-size:12.40px;line-height:16px;color:#dcdcdc;letter-spacing:-0.605px;">Persiapan</div>
<div class="r" style="left:387.00px;top:49.00px;width:7.55px;height:1.00px;background:#dcdcdc;"></div>
<div class="t" style="left:449.00px;top:35.90px;font-size:12.40px;line-height:16px;color:#dcdcdc;letter-spacing:-0.354px;">Daftar</div>
<div class="r" style="left:449.00px;top:49.00px;width:8.49px;height:1.00px;background:#dcdcdc;"></div>
<div class="t" style="left:492.00px;top:35.90px;font-size:12.40px;line-height:16px;color:#dcdcdc;letter-spacing:-0.052px;">Aktifitas</div>
<div class="r" style="left:492.00px;top:49.00px;width:8.19px;height:1.00px;background:#dcdcdc;"></div>
<div class="t" style="left:342.40px;top:58.30px;font-size:12.40px;line-height:16px;color:#dcdcdc;letter-spacing:-0.551px;">Laporan</div>
<div class="r" style="left:342.40px;top:71.40px;width:6.40px;height:1.00px;background:#dcdcdc;"></div>
<div class="t" style="left:396.60px;top:58.30px;font-size:12.40px;line-height:16px;color:#dcdcdc;letter-spacing:-0.856px;">Jendela</div>
<div class="r" style="left:396.60px;top:71.40px;width:5.47px;height:1.00px;background:#dcdcdc;"></div>
<div class="t" style="left:446.00px;top:58.30px;font-size:12.40px;line-height:16px;color:#dcdcdc;letter-spacing:-0.433px;">Bantuan</div>
<div class="r" style="left:466.82px;top:71.40px;width:3.25px;height:1.00px;background:#dcdcdc;"></div>
<div class="r" style="left:332.30px;top:72.80px;width:5.00px;height:1.20px;background:#f0f0f0;"></div>
<div class="r" style="left:640.50px;top:72.80px;width:5.20px;height:1.20px;background:#f0f0f0;"></div>
<div class="r" style="left:332.30px;top:75.80px;width:313.40px;height:479.50px;background:#efefef;"></div>
<div class="r" style="left:337.00px;top:78.40px;width:170.00px;height:25.80px;background:linear-gradient(#f6f6f6,#e2e2e2 45%,#c4c4c4);"></div>
<div class="r" style="left:344.50px;top:82.00px;width:1.20px;height:1.20px;background:#fff;"></div>
<div class="r" style="left:344.50px;top:85.00px;width:1.20px;height:1.20px;background:#fff;"></div>
<div class="r" style="left:344.50px;top:88.00px;width:1.20px;height:1.20px;background:#fff;"></div>
<div class="r" style="left:344.50px;top:91.00px;width:1.20px;height:1.20px;background:#fff;"></div>
<div class="r" style="left:344.50px;top:94.00px;width:1.20px;height:1.20px;background:#fff;"></div>
<div class="r" style="left:344.50px;top:97.00px;width:1.20px;height:1.20px;background:#fff;"></div>
<div class="r" style="left:344.50px;top:100.00px;width:1.20px;height:1.20px;background:#fff;"></div>
<div class="t" style="left:355.30px;top:81.74px;font-size:12.00px;line-height:16px;color:#111;font-weight:bold;">Penjelajah</div>
<svg class="r" style="left:494.80px;top:86.00px;" width="10" height="9" viewBox="0 0 10 9"><path d="M0.8 0.8 L9 8.2 M9 0.8 L0.8 8.2" stroke="#111" stroke-width="1.3"/></svg>
<svg class="r" style="left:341.00px;top:121.00px;" width="16" height="16" viewBox="0 0 16 16"><path d="M1 1 H8 L10 3 V12 H1 Z" fill="#8fd082" stroke="#3f9a3a" stroke-width="1"/><path d="M6 5 H13 L15 7 V15.5 H6 Z" fill="#a8dc9c" stroke="#3f9a3a" stroke-width="1"/></svg>
<div class="t" style="left:361.30px;top:121.78px;font-size:11.60px;line-height:15px;color:#111;font-weight:bold;letter-spacing:-0.174px;">Buku Besar</div>
<div class="r" style="left:337.00px;top:143.20px;width:170.00px;height:1.00px;background:#6a6a6a;"></div>
<div class="r" style="left:337.00px;top:144.20px;width:170.00px;height:1.00px;background:#fafafa;"></div>
<svg class="r" style="left:341.00px;top:150.00px;" width="16" height="16" viewBox="0 0 16 16"><rect x="0.6" y="0.6" width="7.5" height="6.5" fill="#f4c8c8" stroke="#c03030" stroke-width="1"/><rect x="5" y="4.5" width="10" height="7.5" fill="#c8eac8" stroke="#3a8a3a" stroke-width="1"/><rect x="2.5" y="8.5" width="8.5" height="6.5" fill="#d8e6fa" stroke="#2a60c0" stroke-width="1"/><rect x="4.5" y="10.5" width="4.5" height="3" fill="#9bbcf0" stroke="#2a60c0" stroke-width="0.8"/></svg>
<div class="t" style="left:361.30px;top:150.78px;font-size:11.60px;line-height:15px;color:#111;font-weight:bold;letter-spacing:-0.324px;">Kas Bank</div>
<div class="r" style="left:337.00px;top:172.20px;width:170.00px;height:1.00px;background:#6a6a6a;"></div>
<div class="r" style="left:337.00px;top:173.20px;width:170.00px;height:1.00px;background:#fafafa;"></div>
<svg class="r" style="left:341.00px;top:179.00px;" width="16" height="16" viewBox="0 0 16 16"><rect x="1.5" y="1" width="13" height="9.5" fill="#d8d8d8" stroke="#666" stroke-width="1"/><rect x="3" y="2.5" width="10" height="6.5" fill="#6f9fd8"/><path d="M0.5 14.5 L2.5 11 H13.5 L15.5 14.5 Z" fill="#c8c8c8" stroke="#666" stroke-width="0.8"/></svg>
<div class="t" style="left:361.30px;top:179.78px;font-size:11.60px;line-height:15px;color:#111;font-weight:bold;letter-spacing:0.066px;">Persediaan</div>
<div class="r" style="left:337.00px;top:201.20px;width:170.00px;height:1.00px;background:#6a6a6a;"></div>
<div class="r" style="left:337.00px;top:202.20px;width:170.00px;height:1.00px;background:#fafafa;"></div>
<svg class="r" style="left:341.00px;top:208.00px;" width="16" height="16" viewBox="0 0 16 16"><rect x="0.5" y="0.5" width="8" height="8" fill="#3aa83a"/><path d="M4.5 2 V7 M2 4.5 H7" stroke="#fff" stroke-width="1.6"/><rect x="6.5" y="6.5" width="9" height="9" fill="#3a7fd6"/><path d="M8.5 11 H13.5" stroke="#fff" stroke-width="1.8"/></svg>
<div class="t" style="left:361.30px;top:208.78px;font-size:11.60px;line-height:15px;color:#111;font-weight:bold;letter-spacing:0.151px;">Penjualan</div>
<div class="r" style="left:337.00px;top:230.20px;width:170.00px;height:1.00px;background:#6a6a6a;"></div>
<div class="r" style="left:337.00px;top:231.20px;width:170.00px;height:1.00px;background:#fafafa;"></div>
<svg class="r" style="left:341.00px;top:237.00px;" width="16" height="16" viewBox="0 0 16 16"><path d="M0.5 1.5 H3 L5 9.5 H13 L15 3.5 H4" fill="none" stroke="#777" stroke-width="1.4"/><path d="M4.5 4 H14.5 L13 9 H5.5 Z" fill="#b8b8b8"/><circle cx="6" cy="13" r="1.5" fill="#555"/><circle cx="12" cy="13" r="1.5" fill="#555"/></svg>
<div class="t" style="left:361.30px;top:237.78px;font-size:11.60px;line-height:15px;color:#111;font-weight:bold;letter-spacing:0.185px;">Pembelian</div>
<div class="r" style="left:337.00px;top:259.20px;width:170.00px;height:1.00px;background:#6a6a6a;"></div>
<div class="r" style="left:337.00px;top:260.20px;width:170.00px;height:1.00px;background:#fafafa;"></div>
<svg class="r" style="left:341.00px;top:266.00px;" width="16" height="16" viewBox="0 0 16 16"><path d="M8 1 L15.5 8 H13.5 V15 H2.5 V8 H0.5 Z" fill="#e8e4d8" stroke="#555" stroke-width="1"/><path d="M8 1 L15.5 8 H0.5 Z" fill="#8a8a8a" stroke="#555" stroke-width="0.8"/><rect x="6.5" y="10" width="3.5" height="5" fill="#6a9ad8"/></svg>
<div class="t" style="left:361.30px;top:266.78px;font-size:11.60px;line-height:15px;color:#111;font-weight:bold;letter-spacing:0.451px;">Aset Tetap</div>
<div class="r" style="left:337.00px;top:288.20px;width:170.00px;height:1.00px;background:#6a6a6a;"></div>
<div class="r" style="left:337.00px;top:289.20px;width:170.00px;height:1.00px;background:#fafafa;"></div>
<svg class="r" style="left:341.00px;top:295.00px;" width="16" height="16" viewBox="0 0 16 16"><path d="M1 1 H11 V15 H1 Z" fill="#fff" stroke="#444" stroke-width="1.2"/><path d="M6 4 L14.5 14.5" stroke="#333" stroke-width="2.4"/><path d="M5 3 L8 6" stroke="#6a8ad8" stroke-width="2"/></svg>
<div class="t" style="left:361.30px;top:295.78px;font-size:11.60px;line-height:15px;color:#111;font-weight:bold;letter-spacing:0.696px;">Daftar</div>
<div class="r" style="left:337.00px;top:317.20px;width:170.00px;height:1.00px;background:#6a6a6a;"></div>
<div class="r" style="left:337.00px;top:318.20px;width:170.00px;height:1.00px;background:#fafafa;"></div>
<svg class="r" style="left:341.00px;top:324.00px;" width="16" height="16" viewBox="0 0 16 16"><path d="M1 1 H11 V15 H1 Z" fill="#fff" stroke="#444" stroke-width="1.2"/><path d="M6 4 L14.5 14.5" stroke="#333" stroke-width="2.4"/><path d="M5 3 L8 6" stroke="#6a8ad8" stroke-width="2"/></svg>
<div class="t" style="left:361.30px;top:324.78px;font-size:11.60px;line-height:15px;color:#111;font-weight:bold;letter-spacing:0.041px;">RMA</div>
<div class="r" style="left:337.00px;top:346.20px;width:170.00px;height:1.00px;background:#6a6a6a;"></div>
<div class="r" style="left:337.00px;top:347.20px;width:170.00px;height:1.00px;background:#fafafa;"></div>
<div class="r" style="left:341.50px;top:354.20px;width:13.00px;height:1.20px;background:#555;"></div>
<div class="r" style="left:337.00px;top:355.40px;width:170.00px;height:1.00px;background:#9a9a9a;"></div>
<div class="r" style="left:337.00px;top:357.60px;width:170.00px;height:19.80px;background:linear-gradient(#ececec,#dcdcdc 40%,#bcbcbc);"></div>
<div class="t" style="left:343.20px;top:360.54px;font-size:12.00px;line-height:16px;color:#111;font-weight:bold;letter-spacing:0.231px;">Tautan</div>
<div class="r" style="left:491.00px;top:360.00px;width:14.20px;height:15.00px;background:#dbe7f8;"></div>
<svg class="r" style="left:494.00px;top:362.30px;" width="9" height="11" viewBox="0 0 9 11"><path d="M1 0.8 L4.5 4.2 L8 0.8 M1 5.6 L4.5 9 L8 5.6" fill="none" stroke="#1a3fc0" stroke-width="1.5"/></svg>
<svg class="r" style="left:341.00px;top:385.20px;" width="16" height="16" viewBox="0 0 16 16"><circle cx="8" cy="8" r="7.6" fill="#2f80e0"/><circle cx="8" cy="8" r="7.6" fill="none" stroke="#1a5cb8" stroke-width="0.8"/><path d="M5.3 6 Q5.3 3.3 8 3.3 Q10.8 3.3 10.8 5.8 Q10.8 7.3 9 8.2 Q8 8.8 8 10" fill="none" stroke="#fff" stroke-width="1.9"/><circle cx="8" cy="12.5" r="1.2" fill="#fff"/></svg>
<div class="t" style="left:360.40px;top:385.98px;font-size:11.60px;line-height:15px;color:#1a46aa;letter-spacing:-0.576px;">User Manual</div>
<svg class="r" style="left:341.00px;top:404.20px;" width="16" height="16" viewBox="0 0 16 16"><circle cx="8" cy="8" r="7.6" fill="#2f80e0"/><circle cx="8" cy="8" r="7.6" fill="none" stroke="#1a5cb8" stroke-width="0.8"/><path d="M5.3 6 Q5.3 3.3 8 3.3 Q10.8 3.3 10.8 5.8 Q10.8 7.3 9 8.2 Q8 8.8 8 10" fill="none" stroke="#fff" stroke-width="1.9"/><circle cx="8" cy="12.5" r="1.2" fill="#fff"/></svg>
<div class="t" style="left:360.40px;top:404.98px;font-size:11.60px;line-height:15px;color:#1a46aa;letter-spacing:-0.577px;">Online Solution Center</div>
<svg class="r" style="left:341.00px;top:423.20px;" width="16" height="16" viewBox="0 0 16 16"><rect x="1" y="0.5" width="14" height="14" fill="#3b5998"/><path d="M11.5 3.3 H10 Q8.6 3.3 8.6 4.8 V14.5 M6.5 8 H11.3" fill="none" stroke="#fff" stroke-width="2"/><rect x="1" y="12.5" width="6" height="1.5" fill="#7a92c8"/></svg>
<div class="t" style="left:360.40px;top:423.98px;font-size:11.60px;line-height:15px;color:#1a46aa;letter-spacing:-0.463px;">Facebook Page</div>
<svg class="r" style="left:341.00px;top:442.20px;" width="16" height="16" viewBox="0 0 16 16"><rect x="0.6" y="0.6" width="5.5" height="5.5" fill="#dfe8f8" stroke="#4a70c0" stroke-width="0.9"/><circle cx="9" cy="5.5" r="3.2" fill="#5fb890"/><path d="M2.5 15.5 Q3 9.5 9 9.5 Q15 9.5 15.5 15.5 Z" fill="#5fb890"/></svg>
<div class="t" style="left:360.40px;top:442.98px;font-size:11.60px;line-height:15px;color:#1a46aa;letter-spacing:-0.577px;">Mailing list</div>
<svg class="r" style="left:341.00px;top:461.20px;" width="16" height="16" viewBox="0 0 16 16"><path d="M4 0.6 H11 L14.5 4 V15.4 H4 Z" fill="#fafafa" stroke="#888" stroke-width="0.9"/><circle cx="6.5" cy="9" r="4.6" fill="none" stroke="#2a8ae0" stroke-width="2"/><path d="M2.3 9 H10.5" stroke="#2a8ae0" stroke-width="1.8"/><path d="M0.5 11 Q5 4 12 3" fill="none" stroke="#f0b020" stroke-width="1.4"/></svg>
<div class="t" style="left:360.40px;top:461.98px;font-size:11.60px;line-height:15px;color:#1a46aa;letter-spacing:-0.589px;">CPSSoft website</div>
<div class="r" style="left:506.80px;top:75.80px;width:4.00px;height:431.60px;background:#d4d4d4;"></div>
<div class="r" style="left:508.30px;top:104.00px;width:1.20px;height:403.40px;background:#a8a8a8;"></div>
<div class="r" style="left:510.60px;top:80.60px;width:130.60px;height:22.80px;background:#fdfdfd;border-top:1px solid #f0b8c0;box-sizing:border-box;border-radius:3px 3px 0 0;"></div>
<svg class="r" style="left:514.60px;top:86.00px;" width="13.5" height="15" viewBox="0 0 13.5 15"><path d="M0.6 0.6 H8.8 L12.6 4.4 V14.4 H0.6 Z" fill="#fff" stroke="#555" stroke-width="1.1"/><path d="M8.8 0.6 V4.4 H12.6" fill="none" stroke="#555" stroke-width="0.9"/></svg>
<div class="t" style="left:534.40px;top:86.61px;font-size:11.80px;line-height:15px;color:#a0303c;letter-spacing:-0.518px;">Pengingat</div>
<div class="r" style="left:596.40px;top:86.00px;width:17.00px;height:17.00px;background:linear-gradient(#f4f4f4,#e0e0e0 50%,#b8b8b8 51%,#c8c8c8);border:1px solid #909090;box-sizing:border-box;border-radius:3px;"></div>
<svg class="r" style="left:600.00px;top:89.50px;" width="10" height="10" viewBox="0 0 10 10"><path d="M7 1.2 L2.5 5 L7 8.8" fill="none" stroke="#9a9a78" stroke-width="3.4" stroke-linejoin="round" stroke-linecap="round"/><path d="M7 1.2 L2.5 5 L7 8.8" fill="none" stroke="#fafaf0" stroke-width="1.6" stroke-linejoin="round" stroke-linecap="round"/></svg>
<div class="r" style="left:616.20px;top:86.00px;width:17.20px;height:17.00px;background:linear-gradient(#f8e8e8,#f0d4d4 50%,#e4b4b4 51%,#ecc8c8);border:1px solid #c8a0a0;box-sizing:border-box;border-radius:3px;"></div>
<svg class="r" style="left:620.00px;top:89.50px;" width="10" height="10" viewBox="0 0 10 10"><path d="M3 1.2 L7.5 5 L3 8.8" fill="none" stroke="#d8904a" stroke-width="3.4" stroke-linejoin="round" stroke-linecap="round"/><path d="M3 1.2 L7.5 5 L3 8.8" fill="none" stroke="#fff6e8" stroke-width="1.6" stroke-linejoin="round" stroke-linecap="round"/></svg>
<div class="r" style="left:510.60px;top:104.00px;width:130.60px;height:27.00px;background:linear-gradient(#f2f2f2,#e0e0e0);"></div>
<div class="t" style="left:517.50px;top:110.48px;font-size:11.60px;line-height:15px;color:#111;letter-spacing:-0.691px;">Bank:</div>
<div class="r" style="left:552.50px;top:108.50px;width:88.70px;height:19.00px;background:#fff;border:1px solid #8a8a8a;border-right:0;box-sizing:border-box;"></div>
<div class="t" style="left:556.80px;top:110.48px;font-size:11.60px;line-height:15px;color:#111;letter-spacing:-0.647px;">Bank</div>
<div class="r" style="left:510.60px;top:132.30px;width:113.00px;height:15.70px;background:linear-gradient(#fcfcfc,#ebebeb);border:1px solid #8a8a8a;box-sizing:border-box;"></div>
<div class="t" style="left:518.00px;top:133.85px;font-size:11.40px;line-height:15px;color:#111;letter-spacing:-0.287px;">Tang...</div>
<svg class="r" style="left:568.00px;top:138.50px;" width="7" height="6" viewBox="0 0 7 6"><path d="M3.5 0.5 L6.5 5.5 H0.5 Z" fill="#a0a0a0"/></svg>
<div class="r" style="left:585.00px;top:133.00px;width:1.20px;height:14.50px;background:#8a8a8a;"></div>
<div class="r" style="left:586.20px;top:133.00px;width:1.00px;height:14.50px;background:#fff;"></div>
<div class="r" style="left:588px;top:133px;width:35px;height:14px;overflow:hidden"><div class="t" style="left:4.60px;top:0.85px;font-size:11.40px;line-height:15px;color:#111;">No. Su</div></div>
<div class="r" style="left:623.60px;top:132.30px;width:16.60px;height:15.70px;background:#f0f0f0;border:1px solid #a0a0a0;box-sizing:border-box;border-radius:2px;"></div>
<svg class="r" style="left:628.00px;top:137.50px;" width="8" height="5" viewBox="0 0 8 5"><path d="M4 0.3 L7.7 4.6 H0.3 Z" fill="#111"/></svg>
<div class="r" style="left:511.00px;top:148.00px;width:112.60px;height:342.00px;background:#ffffff;"></div>
<div class="r" style="left:510.60px;top:148.00px;width:1.00px;height:359.40px;background:#8a8a8a;"></div>
<div class="r" style="left:511px;top:148px;width:112.6px;height:342px;overflow:hidden"><div class="t" style="left:5.20px;top:3.45px;font-size:11.10px;line-height:14px;color:#111;letter-spacing:-0.187px;">17 Nop 2025</div><div class="t" style="left:82.00px;top:3.45px;font-size:11.10px;line-height:14px;color:#111;letter-spacing:-0.674px;">SDL-B</div><div class="t" style="left:5.20px;top:17.45px;font-size:11.10px;line-height:14px;color:#111;letter-spacing:-0.187px;">17 Nop 2025</div><div class="t" style="left:82.00px;top:17.45px;font-size:11.10px;line-height:14px;color:#111;letter-spacing:-0.674px;">SDL-B</div><div class="t" style="left:5.20px;top:31.45px;font-size:11.10px;line-height:14px;color:#111;letter-spacing:-0.187px;">18 Nop 2025</div><div class="t" style="left:82.00px;top:31.45px;font-size:11.10px;line-height:14px;color:#111;letter-spacing:-0.674px;">SDL-B</div><div class="t" style="left:5.20px;top:45.45px;font-size:11.10px;line-height:14px;color:#111;letter-spacing:-0.187px;">19 Nop 2025</div><div class="t" style="left:82.00px;top:45.45px;font-size:11.10px;line-height:14px;color:#111;letter-spacing:-0.674px;">SDL-B</div><div class="t" style="left:5.20px;top:59.45px;font-size:11.10px;line-height:14px;color:#111;letter-spacing:-0.187px;">19 Nop 2025</div><div class="t" style="left:82.00px;top:59.45px;font-size:11.10px;line-height:14px;color:#111;letter-spacing:-0.674px;">SDL-B</div><div class="t" style="left:5.20px;top:73.45px;font-size:11.10px;line-height:14px;color:#111;letter-spacing:-0.187px;">20 Nop 2025</div><div class="t" style="left:82.00px;top:73.45px;font-size:11.10px;line-height:14px;color:#111;letter-spacing:-0.674px;">SDL-B</div><div class="t" style="left:5.20px;top:87.45px;font-size:11.10px;line-height:14px;color:#111;letter-spacing:-0.187px;">20 Nop 2025</div><div class="t" style="left:82.00px;top:87.45px;font-size:11.10px;line-height:14px;color:#111;letter-spacing:-0.674px;">SDL-B</div><div class="t" style="left:5.20px;top:101.45px;font-size:11.10px;line-height:14px;color:#111;letter-spacing:-0.187px;">21 Nop 2025</div><div class="t" style="left:82.00px;top:101.45px;font-size:11.10px;line-height:14px;color:#111;letter-spacing:-0.674px;">SDL-B</div><div class="t" style="left:5.20px;top:115.45px;font-size:11.10px;line-height:14px;color:#111;letter-spacing:-0.187px;">22 Nop 2025</div><div class="t" style="left:82.00px;top:115.45px;font-size:11.10px;line-height:14px;color:#111;letter-spacing:-0.674px;">SDL-B</div><div class="t" style="left:5.20px;top:129.45px;font-size:11.10px;line-height:14px;color:#111;letter-spacing:-0.187px;">24 Nop 2025</div><div class="t" style="left:82.00px;top:129.45px;font-size:11.10px;line-height:14px;color:#111;letter-spacing:-0.674px;">SDL-B</div><div class="t" style="left:5.20px;top:143.45px;font-size:11.10px;line-height:14px;color:#111;letter-spacing:-0.187px;">24 Nop 2025</div><div class="t" style="left:82.00px;top:143.45px;font-size:11.10px;line-height:14px;color:#111;letter-spacing:-0.674px;">SDL-B</div><div class="t" style="left:5.20px;top:157.45px;font-size:11.10px;line-height:14px;color:#111;letter-spacing:-0.187px;">25 Nop 2025</div><div class="t" style="left:82.00px;top:157.45px;font-size:11.10px;line-height:14px;color:#111;letter-spacing:-0.674px;">SDL-B</div><div class="t" style="left:5.20px;top:171.45px;font-size:11.10px;line-height:14px;color:#111;letter-spacing:-0.187px;">25 Nop 2025</div><div class="t" style="left:82.00px;top:171.45px;font-size:11.10px;line-height:14px;color:#111;letter-spacing:-0.674px;">SDL-B</div><div class="t" style="left:5.20px;top:185.45px;font-size:11.10px;line-height:14px;color:#111;letter-spacing:-0.187px;">26 Nop 2025</div><div class="t" style="left:82.00px;top:185.45px;font-size:11.10px;line-height:14px;color:#111;letter-spacing:-0.674px;">SDL-B</div><div class="t" style="left:5.20px;top:199.45px;font-size:11.10px;line-height:14px;color:#111;letter-spacing:-0.187px;">26 Nop 2025</div><div class="t" style="left:82.00px;top:199.45px;font-size:11.10px;line-height:14px;color:#111;letter-spacing:-0.674px;">SDL-B</div><div class="t" style="left:5.20px;top:213.45px;font-size:11.10px;line-height:14px;color:#111;letter-spacing:-0.187px;">26 Nop 2025</div><div class="t" style="left:82.00px;top:213.45px;font-size:11.10px;line-height:14px;color:#111;letter-spacing:-0.674px;">SDL-B</div><div class="t" style="left:5.20px;top:227.45px;font-size:11.10px;line-height:14px;color:#111;letter-spacing:-0.187px;">28 Nop 2025</div><div class="t" style="left:82.00px;top:227.45px;font-size:11.10px;line-height:14px;color:#111;letter-spacing:-0.674px;">SDL-B</div><div class="t" style="left:5.20px;top:241.45px;font-size:11.10px;line-height:14px;color:#111;letter-spacing:-0.187px;">28 Nop 2025</div><div class="t" style="left:82.00px;top:241.45px;font-size:11.10px;line-height:14px;color:#111;letter-spacing:-0.674px;">SDL-B</div><div class="t" style="left:5.20px;top:255.45px;font-size:11.10px;line-height:14px;color:#111;letter-spacing:-0.187px;">29 Nop 2025</div><div class="t" style="left:82.00px;top:255.45px;font-size:11.10px;line-height:14px;color:#111;letter-spacing:-0.674px;">SDL-B</div><div class="t" style="left:5.20px;top:269.45px;font-size:11.10px;line-height:14px;color:#111;letter-spacing:-0.187px;">29 Nop 2025</div><div class="t" style="left:82.00px;top:269.45px;font-size:11.10px;line-height:14px;color:#111;letter-spacing:-0.674px;">SDL-B</div><div class="t" style="left:5.20px;top:283.45px;font-size:11.10px;line-height:14px;color:#111;letter-spacing:-0.187px;">29 Nop 2025</div><div class="t" style="left:82.00px;top:283.45px;font-size:11.10px;line-height:14px;color:#111;letter-spacing:-0.674px;">SDL-B</div><div class="t" style="left:5.20px;top:297.45px;font-size:11.10px;line-height:14px;color:#111;letter-spacing:-0.187px;">29 Nop 2025</div><div class="t" style="left:82.00px;top:297.45px;font-size:11.10px;line-height:14px;color:#111;letter-spacing:-0.674px;">SDL-B</div><div class="t" style="left:5.20px;top:311.45px;font-size:11.10px;line-height:14px;color:#111;letter-spacing:-0.187px;">29 Nop 2025</div><div class="t" style="left:82.00px;top:311.45px;font-size:11.10px;line-height:14px;color:#111;letter-spacing:-0.674px;">SDL-B</div><div class="t" style="left:5.20px;top:325.45px;font-size:11.10px;line-height:14px;color:#111;letter-spacing:-0.187px;">29 Nop 2025</div><div class="t" style="left:82.00px;top:325.45px;font-size:11.10px;line-height:14px;color:#111;letter-spacing:-0.674px;">SDL-B</div><div class="t" style="left:5.20px;top:339.45px;font-size:11.10px;line-height:14px;color:#111;letter-spacing:-0.187px;">29 Nop 2025</div><div class="t" style="left:82.00px;top:339.45px;font-size:11.10px;line-height:14px;color:#111;letter-spacing:-0.674px;">SDL-B</div><div class="t" style="left:5.20px;top:353.45px;font-size:11.10px;line-height:14px;color:#111;letter-spacing:-0.187px;">30 Nop 2025</div><div class="t" style="left:82.00px;top:353.45px;font-size:11.10px;line-height:14px;color:#111;letter-spacing:-0.674px;">SDL-B</div></div>
<div class="r" style="left:623.60px;top:148.00px;width:16.60px;height:342.00px;background:#f1f1f1;"></div>
<div class="r" style="left:630.20px;top:350.70px;width:3.20px;height:45.60px;background:linear-gradient(90deg,#c8c8c8,#6e6e6e 50%,#c8c8c8);border-radius:1.5px;"></div>
<div class="r" style="left:511.00px;top:489.80px;width:112.60px;height:16.70px;background:#f4f4f4;"></div>
<div class="r" style="left:511.00px;top:489.80px;width:15.60px;height:16.70px;background:#f0f0f0;border:1px solid #b0b0b0;box-sizing:border-box;border-radius:2px;"></div>
<svg class="r" style="left:515.50px;top:494.00px;" width="6" height="8" viewBox="0 0 6 8"><path d="M5.5 0.3 L0.5 4 L5.5 7.7 Z" fill="#111"/></svg>
<div class="r" style="left:527.90px;top:489.80px;width:10.80px;height:16.70px;background:#f0f0f0;border:1px solid #b0b0b0;box-sizing:border-box;border-radius:2px;"></div>
<div class="r" style="left:606.40px;top:489.80px;width:16.20px;height:16.70px;background:#f0f0f0;border:1px solid #b0b0b0;box-sizing:border-box;border-radius:2px;"></div>
<svg class="r" style="left:612.00px;top:494.00px;" width="6" height="8" viewBox="0 0 6 8"><path d="M0.5 0.3 L5.5 4 L0.5 7.7 Z" fill="#111"/></svg>
<div class="r" style="left:510.60px;top:506.50px;width:130.60px;height:1.00px;background:#8a8a8a;"></div>
<div class="r" style="left:337.20px;top:508.40px;width:303.20px;height:19.00px;background:linear-gradient(#fdfdfd,#e8eef6);border:1px solid #8c9cb4;box-sizing:border-box;"></div>
<div class="r" style="left:438.00px;top:509.40px;width:201.40px;height:17.00px;background:linear-gradient(#f7dcdc,#ebb6b6 50%,#f2cccc);"></div>
<div class="r" style="left:581.00px;top:509.40px;width:1.00px;height:17.00px;background:#d89a9a;"></div>
<div class="r" style="left:582.00px;top:509.40px;width:1.00px;height:17.00px;background:#fbe6e6;"></div>
<div class="t" style="left:444.80px;top:509.88px;font-size:11.60px;line-height:15px;color:#222;letter-spacing:0.110px;">Periode 1/2026 - Dari ...</div>
<div class="t" style="left:587.80px;top:509.88px;font-size:11.60px;line-height:15px;color:#222;letter-spacing:-0.290px;">Daft...</div>
<div class="r" style="left:635.00px;top:514.50px;width:2.00px;height:2.00px;background:#5a7ad0;"></div>
<div class="r" style="left:635.00px;top:518.50px;width:2.00px;height:2.00px;background:#5a7ad0;"></div>
<div class="r" style="left:635.00px;top:522.50px;width:2.00px;height:2.00px;background:#5a7ad0;"></div>
<div class="r" style="left:631.00px;top:518.50px;width:2.00px;height:2.00px;background:#5a7ad0;"></div>
<div class="r" style="left:631.00px;top:522.50px;width:2.00px;height:2.00px;background:#5a7ad0;"></div>
<div class="r" style="left:627.00px;top:522.50px;width:2.00px;height:2.00px;background:#5a7ad0;"></div>
</div>
<div id="tb">
<div class="r" style="left:0.00px;top:1032.00px;width:1920.00px;height:48.00px;background:linear-gradient(90deg,#1c2a2e 0%,#1e282b 6%,#212627 12%,#232322 22%,#222221 45%,#202323 62%,#1d2a2d 74%,#1b2e33 86%,#1a3239 100%);"></div>
<div class="r" style="left:0.00px;top:1032.00px;width:1920.00px;height:1.00px;background:#33393a;"></div>
<svg class="r" style="left:19.00px;top:1048.00px;" width="22" height="21" viewBox="0 0 22 21"><path d="M1 9.5 Q2 1 11 1 Q20 1 21 9.5 Q18.5 7.5 16 9.5 Q13.5 7.5 11 9.5 Q8.5 7.5 6 9.5 Q3.5 7.5 1 9.5 Z" fill="#86c2f4"/><path d="M10.5 9 V16 Q10.5 18 8.6 18 Q7 18 7 16.4" fill="none" stroke="#9a9a98" stroke-width="1.5"/></svg>
<div class="r" style="left:29.50px;top:1038.80px;width:16.00px;height:15.50px;background:#f28a98;border-radius:8px;"></div>
<div class="t" style="left:34.30px;top:1039.81px;font-size:11.50px;line-height:15px;color:#5a0a14;">3</div>
<div class="t" style="left:50.50px;top:1039.80px;font-size:12.40px;line-height:16px;color:#f4f4f4;letter-spacing:-0.116px;">Hujan datang</div>
<div class="t" style="left:50.50px;top:1055.40px;font-size:12.40px;line-height:16px;color:#c4c8c8;letter-spacing:-0.196px;">Di sekitar 3 jam</div>
<div class="r" style="left:572.50px;top:1044.50px;width:11.20px;height:11.20px;background:linear-gradient(135deg,#6fd4ff,#1d9bf0);border-radius:1.2px;"></div>
<div class="r" style="left:584.70px;top:1044.50px;width:11.20px;height:11.20px;background:linear-gradient(135deg,#6fd4ff,#1d9bf0);border-radius:1.2px;"></div>
<div class="r" style="left:572.50px;top:1056.70px;width:11.20px;height:11.20px;background:linear-gradient(135deg,#6fd4ff,#1d9bf0);border-radius:1.2px;"></div>
<div class="r" style="left:584.70px;top:1056.70px;width:11.20px;height:11.20px;background:linear-gradient(135deg,#6fd4ff,#1d9bf0);border-radius:1.2px;"></div>
<div class="r" style="left:608.80px;top:1040.00px;width:220.00px;height:32.00px;background:#3b3b3b;border-radius:16px;border:1px solid #484848;box-sizing:border-box;"></div>
<svg class="r" style="left:620.50px;top:1049.00px;" width="15" height="15" viewBox="0 0 15 15"><circle cx="6.2" cy="6.2" r="5" fill="none" stroke="#e8e8e8" stroke-width="1.6"/><path d="M10 10 L14 14" stroke="#e8e8e8" stroke-width="1.8" stroke-linecap="round"/></svg>
<div class="t" style="left:646.00px;top:1048.25px;font-size:14.00px;line-height:18px;color:#d6d6d6;letter-spacing:-0.672px;">Search</div>
<svg class="r" style="left:770.00px;top:1036.00px;" width="64" height="40" viewBox="0 0 64 40"><polygon points="10,28.9 52.5,27.8 52,32.5 14,33" fill="#e3cca3"/><polygon points="30,29.5 52.3,28 52,31 36,31.8" fill="#f0dfc0"/><ellipse cx="12" cy="30.9" rx="2.4" ry="1.2" fill="#f4f0ea"/><rect x="23" y="21" width="3" height="10.3" rx="1.2" fill="#b7afca"/><rect x="36.6" y="20.5" width="3.3" height="10.6" rx="1.2" fill="#c3bbd4"/><ellipse cx="42" cy="19.3" rx="4" ry="4.6" fill="#453863"/><path d="M17.5 8.5 L38 15.3 L41 17.5 L38.5 23.6 L21.5 22.3 L17 16 Z" fill="#e4d8ec"/><ellipse cx="15.3" cy="12.4" rx="2.9" ry="4.7" transform="rotate(-18 15.3 12.4)" fill="#e9dff0"/><circle cx="13.5" cy="15.2" r="1.7" fill="#f6f1f8"/><circle cx="15.4" cy="12" r="0.55" fill="#1c1830"/><path d="M14.4 8.6 L15.4 4.6 L16.9 8.4 Z M17.2 8.6 L18.3 4.8 L19.6 9 Z" fill="#34304e"/><path d="M17.5 7.4 L37.5 14.2" stroke="#262040" stroke-width="1.5" stroke-dasharray="1.7 1.2"/><path d="M20 11.5 L22.5 20.5 M23 12.5 L25.2 21.5 M26 13.5 L27.8 22 M29 14.3 L30.6 22.5 M32 15 L33.2 22.8 M35 15.8 L36 22.6" stroke="#3b3152" stroke-width="1.2"/></svg>
<div class="r" style="left:841.00px;top:1051.00px;width:17.00px;height:15.00px;background:#6e6e6e;border-radius:2px;"></div>
<div class="r" style="left:848.00px;top:1045.00px;width:17.00px;height:15.00px;background:#e8e8e8;border-radius:2px;"></div>
<div class="r" style="left:845.00px;top:1048.50px;width:14.00px;height:13.00px;background:#b8b8b8;border-radius:2px;opacity:.0"></div>
<svg class="r" style="left:884.00px;top:1044.50px;" width="26" height="23" viewBox="0 0 26 23"><path d="M1 3 Q1 1 3 1 H9 L12 4 H23 Q25 4 25 6 V20 Q25 22 23 22 H3 Q1 22 1 20 Z" fill="#f8c838"/><path d="M1 8 H25 V20 Q25 22 23 22 H3 Q1 22 1 20 Z" fill="#fbd860"/><rect x="8" y="15" width="10" height="7" rx="1" fill="#2a7fd8"/></svg>
<div class="r" style="left:893.30px;top:1072.50px;width:6.40px;height:2.00px;background:#9a9a9a;border-radius:1px;"></div>
<svg class="r" style="left:928.40px;top:1044.50px;" width="26" height="24" viewBox="0 0 26 24"><circle cx="13" cy="12" r="11.5" fill="#1a8ad8"/><path d="M2 14 Q2 3 13 1.5 Q23 1 24.5 11 Q24.5 15 20 15 H12 Q12 19 17 20 Q21 20.5 23 18.5 Q19 24 12 23.5 Q3 22 2 14 Z" fill="#38c8a0"/><path d="M7 13 Q7 7 13 7 Q18 7 18 11 H12 Q9 11 9 14 Q9 18 13 20.5 Q6 20 7 13 Z" fill="#0c5aa8"/></svg>
<svg class="r" style="left:973.00px;top:1044.50px;" width="23" height="24" viewBox="0 0 23 24"><path d="M7.5 6 V4 Q7.5 1 11.5 1 Q15.5 1 15.5 4 V6" fill="none" stroke="#3a9ae8" stroke-width="1.8"/><rect x="0.8" y="5.5" width="21.4" height="17.5" rx="2.5" fill="#f4f4f4"/><rect x="6.5" y="9.5" width="4.2" height="4.2" fill="#f25022"/><rect x="12" y="9.5" width="4.2" height="4.2" fill="#7fba00"/><rect x="6.5" y="15" width="4.2" height="4.2" fill="#00a4ef"/><rect x="12" y="15" width="4.2" height="4.2" fill="#ffb900"/></svg>
<svg class="r" style="left:1017.00px;top:1045.00px;" width="23" height="23" viewBox="0 0 23 23"><path d="M11.5 1 A10.5 10.5 0 1 1 5.5 20.2 L1 21.8 L2.6 17.3 A10.5 10.5 0 0 1 11.5 1 Z" fill="none" stroke="#30c060" stroke-width="2"/><path d="M7.5 6.5 Q6 8 7.5 11 Q9.5 14.5 13 16 Q15 16.5 16 15 L14 13.2 L12.6 14 Q10.5 13 9.6 10.6 L10.6 9.4 L9.2 6.6 Z" fill="#30c060"/></svg>
<div class="r" style="left:1030.20px;top:1039.00px;width:15.60px;height:15.60px;background:#4aa8f0;border-radius:8px;"></div>
<div class="t" style="left:1034.80px;top:1040.31px;font-size:11.50px;line-height:15px;color:#0a2040;">1</div>
<div class="r" style="left:1025.00px;top:1072.50px;width:6.40px;height:2.00px;background:#9a9a9a;border-radius:1px;"></div>
<svg class="r" style="left:1060.60px;top:1044.50px;" width="24" height="24" viewBox="0 0 24 24"><circle cx="12" cy="12" r="11.5" fill="#e8453c"/><path d="M12 12 L2 6.3 A11.5 11.5 0 0 0 8 22.8 Z" fill="#34a853"/><path d="M12 12 L8 22.8 A11.5 11.5 0 0 0 22 6.3 H12 Z" fill="#fbbc05"/><path d="M2 6.3 A11.5 11.5 0 0 1 22 6.3 H12 Z" fill="#e8453c"/><circle cx="12" cy="12" r="5.2" fill="#fff"/><circle cx="12" cy="12" r="4.1" fill="#4285f4"/></svg>
<div class="r" style="left:1075.50px;top:1039.00px;width:14.50px;height:14.50px;background:#6a4a3a;border-radius:7.5px;"></div>
<div class="t" style="left:1080.08px;top:1040.16px;font-size:10.50px;line-height:14px;color:#f0e0d8;">k</div>
<div class="r" style="left:1069.40px;top:1072.50px;width:6.40px;height:2.00px;background:#9a9a9a;border-radius:1px;"></div>
<svg class="r" style="left:1105.00px;top:1044.50px;" width="25" height="25" viewBox="0 0 25 25"><rect x="0.8" y="0.8" width="15" height="15" rx="2" fill="#f4f4f4"/><rect x="3.8" y="3.8" width="9" height="9" fill="none" stroke="#d03a2a" stroke-width="1.6" stroke-dasharray="2.2 1.2"/><path d="M10 11 L17 20 M17 11 L12 18" stroke="#c8c8c8" stroke-width="1.6"/><circle cx="13" cy="21.5" r="2.3" fill="none" stroke="#3a8ae0" stroke-width="1.5"/><circle cx="21.5" cy="14" r="2.3" fill="none" stroke="#3a8ae0" stroke-width="1.5"/></svg>
<svg class="r" style="left:1152.00px;top:1044.50px;" width="18" height="24" viewBox="0 0 18 24"><rect x="0.5" y="0.5" width="17" height="23" rx="2" fill="#5a6a78"/><rect x="2.5" y="2.5" width="13" height="5" fill="#4ab0e8"/><g fill="#d8dce0"><rect x="2.5" y="9.5" width="3.5" height="3.5"/><rect x="7.2" y="9.5" width="3.5" height="3.5"/><rect x="2.5" y="14" width="3.5" height="3.5"/><rect x="7.2" y="14" width="3.5" height="3.5"/><rect x="2.5" y="18.5" width="3.5" height="3.5"/><rect x="7.2" y="18.5" width="3.5" height="3.5"/></g><g fill="#4ab0e8"><rect x="12" y="9.5" width="3.5" height="3.5"/><rect x="12" y="14" width="3.5" height="8"/></g></svg>
<svg class="r" style="left:1196.00px;top:1044.00px;" width="18" height="25" viewBox="0 0 18 25"><rect x="0.5" y="2.5" width="17" height="21.5" rx="1.5" fill="#4ab8f0"/><rect x="0.5" y="20.5" width="17" height="3.5" fill="#e8a030"/><path d="M3 2.5 V0.5 M6 2.5 V0.5 M9 2.5 V0.5 M12 2.5 V0.5 M15 2.5 V0.5" stroke="#c8c8c8" stroke-width="1"/><path d="M3 7 H15 M3 10 H15 M3 13 H15 M3 16 H15" stroke="#1a6aa8" stroke-width="1.2"/></svg>
<div class="r" style="left:1229.30px;top:1036.20px;width:39.40px;height:39.40px;background:#2c3436;border-radius:5px;border:1px solid #3a4244;box-sizing:border-box;"></div>
<svg class="r" style="left:1237.00px;top:1044.50px;" width="25" height="24" viewBox="0 0 25 24"><ellipse cx="12.5" cy="12" rx="12.2" ry="11.6" fill="#e82848"/><path d="M6.8 17.5 L12.5 5.5 L18.2 17.5" fill="none" stroke="#fff" stroke-width="2.6" stroke-linejoin="miter"/><path d="M12.5 11 L10.8 15 M12.5 11 L14.2 15" stroke="#e82848" stroke-width="0.9"/></svg>
<div class="r" style="left:1241.00px;top:1072.00px;width:16.50px;height:2.80px;background:#4cc2ff;border-radius:1.4px;"></div>
<svg class="r" style="left:1280.00px;top:1044.50px;" width="23" height="24" viewBox="0 0 23 24"><rect x="3.5" y="0.5" width="19" height="23" rx="2.2" fill="#1f8b3d"/><path d="M5.7 0.5 H20.3 Q22.5 0.5 22.5 2.7 V7 H3.5 V2.7 Q3.5 0.5 5.7 0.5 Z" fill="#97d862"/><rect x="13" y="7" width="9.5" height="5.5" fill="#2fa34c"/><rect x="13" y="12.5" width="9.5" height="5.5" fill="#23883c"/><path d="M13 18 H22.5 V21.3 Q22.5 23.5 20.3 23.5 H13 Z" fill="#1a7032"/><rect x="0.5" y="6.5" width="13" height="14" rx="2.2" fill="#14703a"/><path d="M4 9.8 L9.8 17.5 M9.8 9.8 L4 17.5" stroke="#fff" stroke-width="2"/></svg>
<div class="r" style="left:1288.50px;top:1072.50px;width:6.40px;height:2.00px;background:#9a9a9a;border-radius:1px;"></div>
<svg class="r" style="left:1324.50px;top:1046.00px;" width="25" height="21" viewBox="0 0 25 21"><rect x="0.5" y="0.5" width="24" height="20" rx="2" fill="#3a3a3a"/><rect x="0.5" y="0.5" width="24" height="4" fill="#5a5a5a"/><path d="M4 8 L9 11.5 L4 15" fill="none" stroke="#f0f0f0" stroke-width="1.6"/><path d="M11 16 H17" stroke="#f0f0f0" stroke-width="1.6"/></svg>
<div class="r" style="left:1333.60px;top:1072.50px;width:6.40px;height:2.00px;background:#9a9a9a;border-radius:1px;"></div>
<svg class="r" style="left:1696.50px;top:1051.50px;" width="12" height="9" viewBox="0 0 12 9"><path d="M1 7.5 L6 2 L11 7.5" fill="none" stroke="#f0f0f0" stroke-width="1.6" stroke-linecap="round" stroke-linejoin="round"/></svg>
<svg class="r" style="left:1725.00px;top:1047.00px;" width="19" height="16" viewBox="0 0 19 16"><path d="M4.5 13.5 Q0.8 13.5 0.8 10 Q0.8 7 4 6.8 Q5 2.5 9.5 2.5 Q13.5 2.5 14.5 6.5 Q18 6.8 18 10.2 Q18 13.5 14.5 13.5 Z" fill="#6a7072"/><path d="M2.5 1.5 L17 15" stroke="#8a9092" stroke-width="1.3"/></svg>
<svg class="r" style="left:1757.00px;top:1047.00px;" width="18" height="17" viewBox="0 0 18 17"><rect x="0.7" y="1" width="12.5" height="10" rx="1" fill="none" stroke="#f0f0f0" stroke-width="1.2"/><path d="M4 15.5 H10 M7 11 V15.5" stroke="#f0f0f0" stroke-width="1.2"/><rect x="12" y="0.6" width="4.5" height="7" rx="0.8" fill="#1b2d32" stroke="#f0f0f0" stroke-width="1.1"/><path d="M14.2 7.5 V13.5 H11" fill="none" stroke="#f0f0f0" stroke-width="1.1"/></svg>
<svg class="r" style="left:1781.50px;top:1048.00px;" width="18" height="15" viewBox="0 0 18 15"><path d="M0.8 5 H3.8 L7.8 1.2 V13.8 L3.8 10 H0.8 Z" fill="none" stroke="#f0f0f0" stroke-width="1.2" stroke-linejoin="round"/><path d="M10.2 4.8 Q11.8 7.5 10.2 10.2 M12.5 3 Q15 7.5 12.5 12 M14.8 1.2 Q18.2 7.5 14.8 13.8" fill="none" stroke="#f0f0f0" stroke-width="1.1"/></svg>
<div class="t" style="left:1848.20px;top:1040.80px;font-size:12.40px;line-height:16px;color:#f4f4f4;letter-spacing:-0.403px;">11:05</div>
<div class="t" style="left:1815.70px;top:1056.80px;font-size:12.40px;line-height:16px;color:#f4f4f4;letter-spacing:-0.118px;">31/01/2026</div>
<svg class="r" style="left:1885.00px;top:1047.00px;" width="16" height="17" viewBox="0 0 16 17"><path d="M2 12.5 Q3.5 10.5 3.5 7 Q3.5 2.5 8 2.5 Q12.5 2.5 12.5 7 Q12.5 10.5 14 12.5 Z" fill="#f0f0f0"/><path d="M6 14 Q8 16.5 10 14" fill="none" stroke="#f0f0f0" stroke-width="1.2"/><text x="5.3" y="10.5" font-family="Liberation Sans" font-size="5.5" font-weight="bold" fill="#14262b">z</text><text x="9.5" y="5" font-family="Liberation Sans" font-size="6" font-weight="bold" fill="#f0f0f0">z</text></svg>
</div>
</body></html>
